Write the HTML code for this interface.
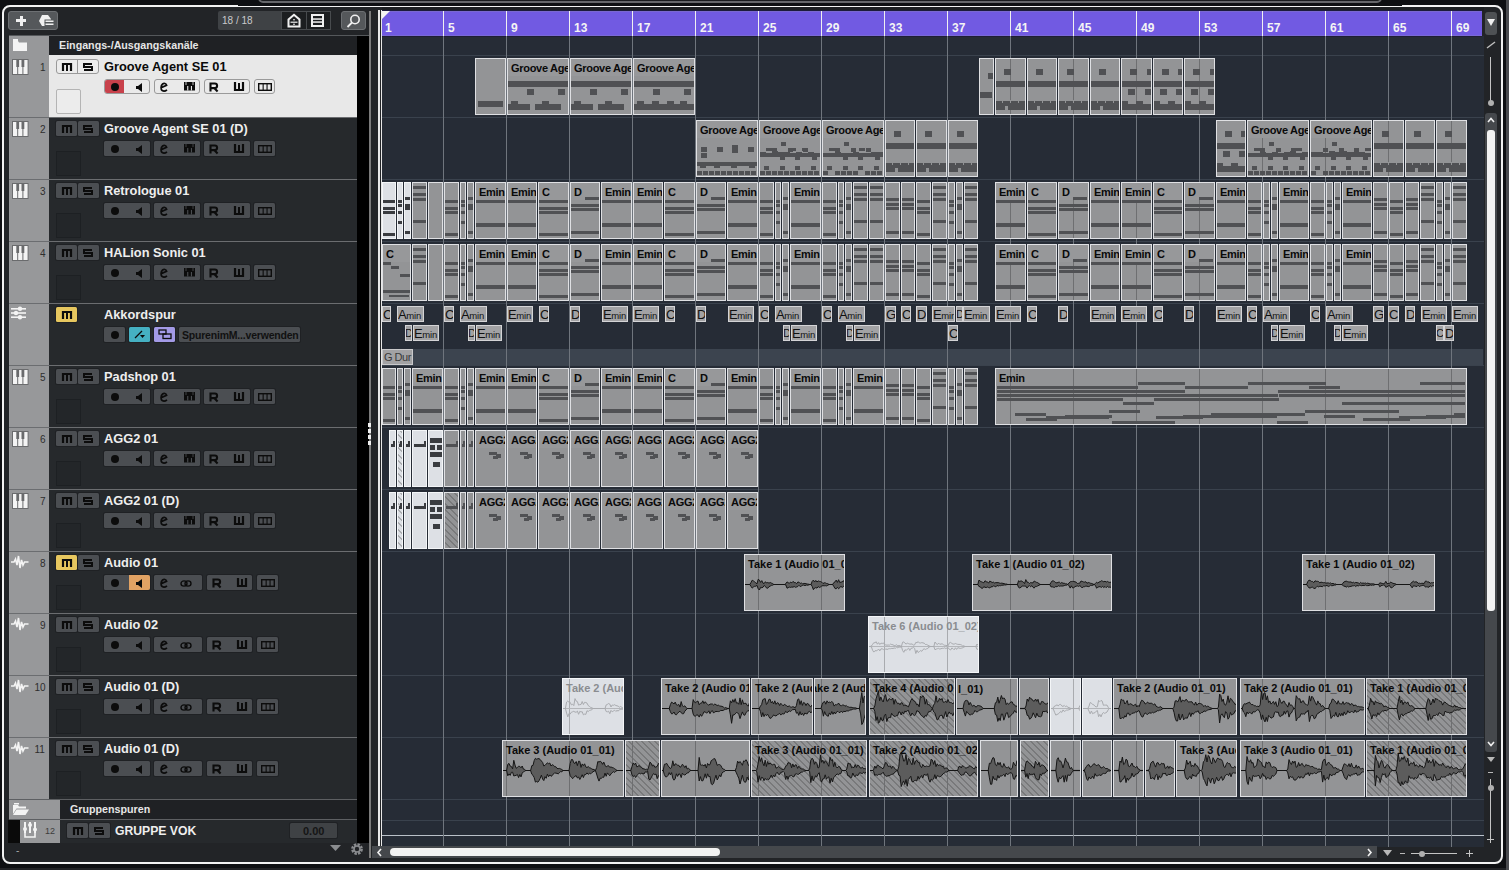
<!DOCTYPE html><html><head><meta charset="utf-8"><style>
*{margin:0;padding:0;box-sizing:border-box}
html,body{width:1509px;height:870px;overflow:hidden;background:#0e0f12;font-family:"Liberation Sans",sans-serif}
div{position:absolute}
.t{white-space:nowrap;line-height:1}
svg{position:absolute;overflow:visible}
</style></head><body>
<div style="left:258px;top:-7px;width:1124px;height:10px;border:2px solid #66676b;border-radius:7px;background:#1a1b1e"></div>
<div style="left:0px;top:867.5px;width:1509px;height:3px;background:#212225"></div>
<div style="left:2px;top:5px;width:1501px;height:859px;border:2px solid #f2f2f2;border-top-width:2px;border-radius:8px;background:#222427"></div>
<div style="left:238px;top:5px;width:1164px;height:1px;background:#0e0f12"></div>
<div style="left:1506px;top:0px;width:3px;height:870px;background:#4a4b4f"></div>
<div style="left:8px;top:11px;width:50px;height:19px;background:#55585b;border:1px solid #6d7073;border-radius:3px"></div>
<div style="left:16px;top:19px;width:10px;height:3px;background:#f0f0f0"></div>
<div style="left:19.5px;top:15.5px;width:3px;height:10px;background:#f0f0f0"></div>
<svg style="left:38px;top:14px" width="18" height="13"><path d="M4 1h6l3 4v5l-3 2H4L1 7z" fill="#f0f0f0"/><rect x="7" y="6" width="9" height="2.5" fill="#f0f0f0" stroke="#55585b" stroke-width="1"/><rect x="7" y="9" width="9" height="2.5" fill="#f0f0f0" stroke="#55585b" stroke-width="1"/></svg>
<div style="left:218px;top:11px;width:63px;height:19px;background:#3f4245;border-radius:2px 0 0 2px"></div>
<div class="t" style="left:222px;top:15.5px;font-size:10px;color:#c9cacc">18 / 18</div>
<div style="left:281px;top:11px;width:50px;height:19px;background:#1c1e20;border:1px solid #484b4e"></div>
<div style="left:305.5px;top:12px;width:1px;height:17px;background:#484b4e"></div>
<svg style="left:286px;top:13px" width="16" height="15"><path d="M2.5 13.5V6.5L8 1.8l5.5 4.7v7z" fill="none" stroke="#f0f0f0" stroke-width="2"/><rect x="7.3" y="6" width="1.4" height="1.4" fill="#f0f0f0"/><rect x="4.5" y="8.6" width="7" height="1.2" fill="#f0f0f0"/><rect x="7.3" y="10.6" width="1.4" height="1.4" fill="#f0f0f0"/></svg>
<svg style="left:311px;top:14px" width="14" height="13"><rect x="1" y="1" width="11" height="11" fill="none" stroke="#f0f0f0" stroke-width="2"/><rect x="1" y="4.3" width="11" height="1.5" fill="#f0f0f0"/><rect x="1" y="7.3" width="11" height="1.5" fill="#f0f0f0"/></svg>
<div style="left:341px;top:11px;width:25px;height:19px;background:#55585b;border:1px solid #6d7073;border-radius:3px"></div>
<svg style="left:346px;top:14px" width="15" height="14"><circle cx="9" cy="5.5" r="4.2" fill="none" stroke="#f0f0f0" stroke-width="1.6"/><path d="M6 8.5L1.5 13" stroke="#f0f0f0" stroke-width="1.8"/></svg>
<div style="left:9px;top:35px;width:40px;height:20px;background:#97989a"></div>
<div style="left:49px;top:35px;width:308px;height:20px;background:#1f2124"></div>
<div style="left:9px;top:35px;width:360px;height:1px;background:#55585b"></div>
<svg style="left:12px;top:38px" width="16" height="14"><path d="M1 3h5l1 1.5h8V13H1z" fill="#f4f4f4"/><rect x="1" y="1" width="5" height="2" fill="#f4f4f4"/></svg>
<div class="t" style="left:59px;top:40px;font-size:10.7px;font-weight:bold;color:#e6e6e6">Eingangs-/Ausgangskanäle</div>
<div style="left:9px;top:55px;width:40px;height:62px;background:#97989a"></div>
<div style="left:49px;top:55px;width:308px;height:62px;background:#e8e8e8"></div>
<svg style="left:11.5px;top:59px" width="17" height="17"><rect x="0" y="0" width="16.5" height="16" fill="#6a6b6d"/><rect x="1" y="1" width="4.2" height="14" fill="#f4f4f4"/><rect x="6.2" y="1" width="4.2" height="14" fill="#f4f4f4"/><rect x="11.4" y="1" width="4.2" height="14" fill="#f4f4f4"/><rect x="4.3" y="0" width="2.8" height="8" fill="#6a6b6d"/><rect x="9.5" y="0" width="2.8" height="8" fill="#6a6b6d"/></svg>
<div class="t" style="left:40px;top:63px;font-size:10px;color:#2e2e2e">1</div>
<div style="left:56px;top:59px;width:43px;height:15px;background:#ececec;border:1px solid #9a9a9a;border-radius:3px"></div>
<div style="left:77px;top:60px;width:1px;height:13px;background:#9a9a9a"></div>
<svg style="left:61.5px;top:62.5px" width="10" height="8"><path d="M1 8V1h8v7" fill="none" stroke="#0c0c0c" stroke-width="2.2"/><rect x="4" y="1" width="2" height="7" fill="#0c0c0c"/></svg>
<svg style="left:83px;top:62.5px" width="10" height="8"><path d="M9 1H1v3h8v3H1" fill="none" stroke="#0c0c0c" stroke-width="2"/></svg>
<div class="t" style="left:104px;top:60.5px;font-size:12.8px;font-weight:bold;color:#0a0a0a">Groove Agent SE 01</div>
<div style="left:56px;top:89px;width:25px;height:25px;border:1px solid #b4b4b4;border-radius:2px;background:#ececec"></div>
<div style="left:104px;top:79px;width:46px;height:15px;background:#eaeaea;border:1px solid #9a9a9a;border-radius:3px"></div>
<div style="left:105px;top:80px;width:19px;height:13px;background:#c8414b;border-radius:2px 0 0 2px"></div>
<div style="left:154px;top:79px;width:46px;height:15px;background:#eaeaea;border:1px solid #9a9a9a;border-radius:3px"></div>
<div style="left:204px;top:79px;width:46px;height:15px;background:#eaeaea;border:1px solid #9a9a9a;border-radius:3px"></div>
<div style="left:254px;top:79px;width:21px;height:15px;background:#eaeaea;border:1px solid #9a9a9a;border-radius:3px"></div>
<div style="left:110.5px;top:82.5px;width:8px;height:8px;background:#0c0c0c;border-radius:50%"></div>
<svg style="left:135px;top:82.5px" width="8" height="9"><path d="M1 3h2l4-3v9L3 6H1z" fill="#0c0c0c"/></svg>
<svg style="left:159px;top:81.5px" width="10" height="10"><path d="M2.2 5.6L7.6 3.2C7 1.4 5 1 3.6 2 1.6 3.6 1.6 7.4 3.2 8.6 4.6 9.4 6.6 9 8 7.8" fill="none" stroke="#0c0c0c" stroke-width="1.7"/></svg>
<svg style="left:184.0px;top:82.0px" width="11" height="9"><rect x="0" y="0" width="11" height="8.5" fill="#0c0c0c"/><rect x="3.2" y="4" width="1.1" height="4.5" fill="#eaeaea" class="g"/><rect x="6.9" y="4" width="1.1" height="4.5" fill="#eaeaea" class="g"/><rect x="1.6" y="0" width="0.8" height="3" fill="#eaeaea" class="g"/><rect x="8.6" y="0" width="0.8" height="3" fill="#eaeaea" class="g"/></svg>
<svg style="left:209.0px;top:82.0px" width="10" height="10"><path d="M1.5 9.5V1.5h4.3a2.3 2.3 0 0 1 0 4.6H1.5M5.2 6L8.6 9.5" fill="none" stroke="#0c0c0c" stroke-width="2.1"/></svg>
<svg style="left:234px;top:82.0px" width="10" height="9"><path d="M1 0v8h8V0" fill="none" stroke="#0c0c0c" stroke-width="2.2"/><rect x="4" y="1" width="2" height="7" fill="#0c0c0c"/></svg>
<svg style="left:257.5px;top:82.5px" width="14" height="8"><rect x="0.7" y="0.7" width="12.6" height="6.6" fill="none" stroke="#0c0c0c" stroke-width="1.4"/><rect x="4.6" y="1" width="1.1" height="6" fill="#0c0c0c"/><rect x="8.5" y="1" width="1.1" height="6" fill="#0c0c0c"/></svg>
<div style="left:9px;top:117px;width:40px;height:62px;background:#97989a"></div>
<div style="left:49px;top:117px;width:308px;height:62px;background:#26292c"></div>
<svg style="left:11.5px;top:121px" width="17" height="17"><rect x="0" y="0" width="16.5" height="16" fill="#6a6b6d"/><rect x="1" y="1" width="4.2" height="14" fill="#f4f4f4"/><rect x="6.2" y="1" width="4.2" height="14" fill="#f4f4f4"/><rect x="11.4" y="1" width="4.2" height="14" fill="#f4f4f4"/><rect x="4.3" y="0" width="2.8" height="8" fill="#6a6b6d"/><rect x="9.5" y="0" width="2.8" height="8" fill="#6a6b6d"/></svg>
<div class="t" style="left:40px;top:125px;font-size:10px;color:#2e2e2e">2</div>
<div style="left:56px;top:121px;width:21px;height:15px;background:#4b4e52;border-radius:1.5px;box-shadow:0 0 0 1px #1f2124;"></div>
<div style="left:77.5px;top:121px;width:21.5px;height:15px;background:#4b4e52;border-radius:1.5px;box-shadow:0 0 0 1px #1f2124;"></div>
<svg style="left:61.5px;top:124.5px" width="10" height="8"><path d="M1 8V1h8v7" fill="none" stroke="#0c0c0c" stroke-width="2.2"/><rect x="4" y="1" width="2" height="7" fill="#0c0c0c"/></svg>
<svg style="left:83px;top:124.5px" width="10" height="8"><path d="M9 1H1v3h8v3H1" fill="none" stroke="#0c0c0c" stroke-width="2"/></svg>
<div class="t" style="left:104px;top:122.5px;font-size:12.8px;font-weight:bold;color:#eeeeee">Groove Agent SE 01 (D)</div>
<div style="left:56px;top:151px;width:25px;height:25px;background:#232629;border:1px solid #1d2023"></div>
<div style="left:104px;top:141px;width:46px;height:15px;background:#4b4e52;border-radius:1.5px;box-shadow:0 0 0 1px #1f2124;"></div>
<div style="left:154px;top:141px;width:46px;height:15px;background:#4b4e52;border-radius:1.5px;box-shadow:0 0 0 1px #1f2124;"></div>
<div style="left:204px;top:141px;width:46px;height:15px;background:#4b4e52;border-radius:1.5px;box-shadow:0 0 0 1px #1f2124;"></div>
<div style="left:254px;top:141px;width:21px;height:15px;background:#4b4e52;border-radius:1.5px;box-shadow:0 0 0 1px #1f2124;"></div>
<div style="left:110.5px;top:144.5px;width:8px;height:8px;background:#0c0c0c;border-radius:50%"></div>
<svg style="left:135px;top:144.5px" width="8" height="9"><path d="M1 3h2l4-3v9L3 6H1z" fill="#0c0c0c"/></svg>
<svg style="left:159px;top:143.5px" width="10" height="10"><path d="M2.2 5.6L7.6 3.2C7 1.4 5 1 3.6 2 1.6 3.6 1.6 7.4 3.2 8.6 4.6 9.4 6.6 9 8 7.8" fill="none" stroke="#0c0c0c" stroke-width="1.7"/></svg>
<svg style="left:184.0px;top:144.0px" width="11" height="9"><rect x="0" y="0" width="11" height="8.5" fill="#0c0c0c"/><rect x="3.2" y="4" width="1.1" height="4.5" fill="#4b4e52" class="g"/><rect x="6.9" y="4" width="1.1" height="4.5" fill="#4b4e52" class="g"/><rect x="1.6" y="0" width="0.8" height="3" fill="#4b4e52" class="g"/><rect x="8.6" y="0" width="0.8" height="3" fill="#4b4e52" class="g"/></svg>
<svg style="left:209.0px;top:144.0px" width="10" height="10"><path d="M1.5 9.5V1.5h4.3a2.3 2.3 0 0 1 0 4.6H1.5M5.2 6L8.6 9.5" fill="none" stroke="#0c0c0c" stroke-width="2.1"/></svg>
<svg style="left:234px;top:144.0px" width="10" height="9"><path d="M1 0v8h8V0" fill="none" stroke="#0c0c0c" stroke-width="2.2"/><rect x="4" y="1" width="2" height="7" fill="#0c0c0c"/></svg>
<svg style="left:257.5px;top:144.5px" width="14" height="8"><rect x="0.7" y="0.7" width="12.6" height="6.6" fill="none" stroke="#0c0c0c" stroke-width="1.4"/><rect x="4.6" y="1" width="1.1" height="6" fill="#0c0c0c"/><rect x="8.5" y="1" width="1.1" height="6" fill="#0c0c0c"/></svg>
<div style="left:9px;top:179px;width:40px;height:62px;background:#97989a"></div>
<div style="left:49px;top:179px;width:308px;height:62px;background:#26292c"></div>
<svg style="left:11.5px;top:183px" width="17" height="17"><rect x="0" y="0" width="16.5" height="16" fill="#6a6b6d"/><rect x="1" y="1" width="4.2" height="14" fill="#f4f4f4"/><rect x="6.2" y="1" width="4.2" height="14" fill="#f4f4f4"/><rect x="11.4" y="1" width="4.2" height="14" fill="#f4f4f4"/><rect x="4.3" y="0" width="2.8" height="8" fill="#6a6b6d"/><rect x="9.5" y="0" width="2.8" height="8" fill="#6a6b6d"/></svg>
<div class="t" style="left:40px;top:187px;font-size:10px;color:#2e2e2e">3</div>
<div style="left:56px;top:183px;width:21px;height:15px;background:#4b4e52;border-radius:1.5px;box-shadow:0 0 0 1px #1f2124;"></div>
<div style="left:77.5px;top:183px;width:21.5px;height:15px;background:#4b4e52;border-radius:1.5px;box-shadow:0 0 0 1px #1f2124;"></div>
<svg style="left:61.5px;top:186.5px" width="10" height="8"><path d="M1 8V1h8v7" fill="none" stroke="#0c0c0c" stroke-width="2.2"/><rect x="4" y="1" width="2" height="7" fill="#0c0c0c"/></svg>
<svg style="left:83px;top:186.5px" width="10" height="8"><path d="M9 1H1v3h8v3H1" fill="none" stroke="#0c0c0c" stroke-width="2"/></svg>
<div class="t" style="left:104px;top:184.5px;font-size:12.8px;font-weight:bold;color:#eeeeee">Retrologue 01</div>
<div style="left:56px;top:213px;width:25px;height:25px;background:#232629;border:1px solid #1d2023"></div>
<div style="left:104px;top:203px;width:46px;height:15px;background:#4b4e52;border-radius:1.5px;box-shadow:0 0 0 1px #1f2124;"></div>
<div style="left:154px;top:203px;width:46px;height:15px;background:#4b4e52;border-radius:1.5px;box-shadow:0 0 0 1px #1f2124;"></div>
<div style="left:204px;top:203px;width:46px;height:15px;background:#4b4e52;border-radius:1.5px;box-shadow:0 0 0 1px #1f2124;"></div>
<div style="left:254px;top:203px;width:21px;height:15px;background:#4b4e52;border-radius:1.5px;box-shadow:0 0 0 1px #1f2124;"></div>
<div style="left:110.5px;top:206.5px;width:8px;height:8px;background:#0c0c0c;border-radius:50%"></div>
<svg style="left:135px;top:206.5px" width="8" height="9"><path d="M1 3h2l4-3v9L3 6H1z" fill="#0c0c0c"/></svg>
<svg style="left:159px;top:205.5px" width="10" height="10"><path d="M2.2 5.6L7.6 3.2C7 1.4 5 1 3.6 2 1.6 3.6 1.6 7.4 3.2 8.6 4.6 9.4 6.6 9 8 7.8" fill="none" stroke="#0c0c0c" stroke-width="1.7"/></svg>
<svg style="left:184.0px;top:206.0px" width="11" height="9"><rect x="0" y="0" width="11" height="8.5" fill="#0c0c0c"/><rect x="3.2" y="4" width="1.1" height="4.5" fill="#4b4e52" class="g"/><rect x="6.9" y="4" width="1.1" height="4.5" fill="#4b4e52" class="g"/><rect x="1.6" y="0" width="0.8" height="3" fill="#4b4e52" class="g"/><rect x="8.6" y="0" width="0.8" height="3" fill="#4b4e52" class="g"/></svg>
<svg style="left:209.0px;top:206.0px" width="10" height="10"><path d="M1.5 9.5V1.5h4.3a2.3 2.3 0 0 1 0 4.6H1.5M5.2 6L8.6 9.5" fill="none" stroke="#0c0c0c" stroke-width="2.1"/></svg>
<svg style="left:234px;top:206.0px" width="10" height="9"><path d="M1 0v8h8V0" fill="none" stroke="#0c0c0c" stroke-width="2.2"/><rect x="4" y="1" width="2" height="7" fill="#0c0c0c"/></svg>
<svg style="left:257.5px;top:206.5px" width="14" height="8"><rect x="0.7" y="0.7" width="12.6" height="6.6" fill="none" stroke="#0c0c0c" stroke-width="1.4"/><rect x="4.6" y="1" width="1.1" height="6" fill="#0c0c0c"/><rect x="8.5" y="1" width="1.1" height="6" fill="#0c0c0c"/></svg>
<div style="left:9px;top:241px;width:40px;height:62px;background:#97989a"></div>
<div style="left:49px;top:241px;width:308px;height:62px;background:#26292c"></div>
<svg style="left:11.5px;top:245px" width="17" height="17"><rect x="0" y="0" width="16.5" height="16" fill="#6a6b6d"/><rect x="1" y="1" width="4.2" height="14" fill="#f4f4f4"/><rect x="6.2" y="1" width="4.2" height="14" fill="#f4f4f4"/><rect x="11.4" y="1" width="4.2" height="14" fill="#f4f4f4"/><rect x="4.3" y="0" width="2.8" height="8" fill="#6a6b6d"/><rect x="9.5" y="0" width="2.8" height="8" fill="#6a6b6d"/></svg>
<div class="t" style="left:40px;top:249px;font-size:10px;color:#2e2e2e">4</div>
<div style="left:56px;top:245px;width:21px;height:15px;background:#4b4e52;border-radius:1.5px;box-shadow:0 0 0 1px #1f2124;"></div>
<div style="left:77.5px;top:245px;width:21.5px;height:15px;background:#4b4e52;border-radius:1.5px;box-shadow:0 0 0 1px #1f2124;"></div>
<svg style="left:61.5px;top:248.5px" width="10" height="8"><path d="M1 8V1h8v7" fill="none" stroke="#0c0c0c" stroke-width="2.2"/><rect x="4" y="1" width="2" height="7" fill="#0c0c0c"/></svg>
<svg style="left:83px;top:248.5px" width="10" height="8"><path d="M9 1H1v3h8v3H1" fill="none" stroke="#0c0c0c" stroke-width="2"/></svg>
<div class="t" style="left:104px;top:246.5px;font-size:12.8px;font-weight:bold;color:#eeeeee">HALion Sonic 01</div>
<div style="left:56px;top:275px;width:25px;height:25px;background:#232629;border:1px solid #1d2023"></div>
<div style="left:104px;top:265px;width:46px;height:15px;background:#4b4e52;border-radius:1.5px;box-shadow:0 0 0 1px #1f2124;"></div>
<div style="left:154px;top:265px;width:46px;height:15px;background:#4b4e52;border-radius:1.5px;box-shadow:0 0 0 1px #1f2124;"></div>
<div style="left:204px;top:265px;width:46px;height:15px;background:#4b4e52;border-radius:1.5px;box-shadow:0 0 0 1px #1f2124;"></div>
<div style="left:254px;top:265px;width:21px;height:15px;background:#4b4e52;border-radius:1.5px;box-shadow:0 0 0 1px #1f2124;"></div>
<div style="left:110.5px;top:268.5px;width:8px;height:8px;background:#0c0c0c;border-radius:50%"></div>
<svg style="left:135px;top:268.5px" width="8" height="9"><path d="M1 3h2l4-3v9L3 6H1z" fill="#0c0c0c"/></svg>
<svg style="left:159px;top:267.5px" width="10" height="10"><path d="M2.2 5.6L7.6 3.2C7 1.4 5 1 3.6 2 1.6 3.6 1.6 7.4 3.2 8.6 4.6 9.4 6.6 9 8 7.8" fill="none" stroke="#0c0c0c" stroke-width="1.7"/></svg>
<svg style="left:184.0px;top:268.0px" width="11" height="9"><rect x="0" y="0" width="11" height="8.5" fill="#0c0c0c"/><rect x="3.2" y="4" width="1.1" height="4.5" fill="#4b4e52" class="g"/><rect x="6.9" y="4" width="1.1" height="4.5" fill="#4b4e52" class="g"/><rect x="1.6" y="0" width="0.8" height="3" fill="#4b4e52" class="g"/><rect x="8.6" y="0" width="0.8" height="3" fill="#4b4e52" class="g"/></svg>
<svg style="left:209.0px;top:268.0px" width="10" height="10"><path d="M1.5 9.5V1.5h4.3a2.3 2.3 0 0 1 0 4.6H1.5M5.2 6L8.6 9.5" fill="none" stroke="#0c0c0c" stroke-width="2.1"/></svg>
<svg style="left:234px;top:268.0px" width="10" height="9"><path d="M1 0v8h8V0" fill="none" stroke="#0c0c0c" stroke-width="2.2"/><rect x="4" y="1" width="2" height="7" fill="#0c0c0c"/></svg>
<svg style="left:257.5px;top:268.5px" width="14" height="8"><rect x="0.7" y="0.7" width="12.6" height="6.6" fill="none" stroke="#0c0c0c" stroke-width="1.4"/><rect x="4.6" y="1" width="1.1" height="6" fill="#0c0c0c"/><rect x="8.5" y="1" width="1.1" height="6" fill="#0c0c0c"/></svg>
<div style="left:9px;top:303px;width:40px;height:62px;background:#97989a"></div>
<div style="left:49px;top:303px;width:308px;height:62px;background:#26292c"></div>
<svg style="left:11px;top:306px" width="16" height="14"><rect x="0" y="2" width="15" height="1.6" fill="#f4f4f4"/><rect x="0" y="6.2" width="15" height="1.6" fill="#f4f4f4"/><rect x="0" y="10.4" width="15" height="1.6" fill="#f4f4f4"/><circle cx="9" cy="2.8" r="2.2" fill="#f4f4f4"/><circle cx="5" cy="7" r="2.2" fill="#f4f4f4"/><circle cx="9" cy="11.2" r="2.2" fill="#f4f4f4"/></svg>
<div style="left:56px;top:307px;width:21px;height:15px;background:#e7c75f;border-radius:1.5px;box-shadow:0 0 0 1px #1f2124;"></div>
<svg style="left:61.5px;top:310.5px" width="10" height="8"><path d="M1 8V1h8v7" fill="none" stroke="#0c0c0c" stroke-width="2.2"/><rect x="4" y="1" width="2" height="7" fill="#0c0c0c"/></svg>
<div class="t" style="left:104px;top:308.5px;font-size:12.8px;font-weight:bold;color:#eeeeee">Akkordspur</div>
<div style="left:104px;top:327px;width:21px;height:15px;background:#4b4e52;border-radius:1.5px;box-shadow:0 0 0 1px #1f2124;"></div>
<div style="left:110.5px;top:330.5px;width:8px;height:8px;background:#0c0c0c;border-radius:50%"></div>
<div style="left:129px;top:327px;width:21px;height:15px;background:#45b0c2;border-radius:1.5px;box-shadow:0 0 0 1px #1f2124;"></div>
<svg style="left:134px;top:330px" width="12" height="9"><path d="M1 8L8 1" stroke="#0c0c0c" stroke-width="1.3"/><path d="M6 5h5l-2.5 3z" fill="#0c0c0c"/></svg>
<div style="left:154px;top:327px;width:21px;height:15px;background:#a39ae6;border-radius:1.5px;box-shadow:0 0 0 1px #1f2124;"></div>
<svg style="left:158px;top:329px" width="14" height="11"><rect x="1" y="1" width="7" height="4" fill="none" stroke="#0c0c0c" stroke-width="1.3"/><rect x="5" y="5" width="8" height="4.5" fill="none" stroke="#0c0c0c" stroke-width="1.3"/></svg>
<div style="left:179px;top:327px;width:121px;height:15px;background:#4b4e52;border-radius:1.5px;box-shadow:0 0 0 1px #1f2124;"></div>
<div class="t" style="left:182px;top:329.5px;font-size:10.5px;color:#111111;font-weight:bold;letter-spacing:-0.2px">SpurenimM...verwenden</div>
<div style="left:9px;top:365px;width:40px;height:62px;background:#97989a"></div>
<div style="left:49px;top:365px;width:308px;height:62px;background:#26292c"></div>
<svg style="left:11.5px;top:369px" width="17" height="17"><rect x="0" y="0" width="16.5" height="16" fill="#6a6b6d"/><rect x="1" y="1" width="4.2" height="14" fill="#f4f4f4"/><rect x="6.2" y="1" width="4.2" height="14" fill="#f4f4f4"/><rect x="11.4" y="1" width="4.2" height="14" fill="#f4f4f4"/><rect x="4.3" y="0" width="2.8" height="8" fill="#6a6b6d"/><rect x="9.5" y="0" width="2.8" height="8" fill="#6a6b6d"/></svg>
<div class="t" style="left:40px;top:373px;font-size:10px;color:#2e2e2e">5</div>
<div style="left:56px;top:369px;width:21px;height:15px;background:#4b4e52;border-radius:1.5px;box-shadow:0 0 0 1px #1f2124;"></div>
<div style="left:77.5px;top:369px;width:21.5px;height:15px;background:#4b4e52;border-radius:1.5px;box-shadow:0 0 0 1px #1f2124;"></div>
<svg style="left:61.5px;top:372.5px" width="10" height="8"><path d="M1 8V1h8v7" fill="none" stroke="#0c0c0c" stroke-width="2.2"/><rect x="4" y="1" width="2" height="7" fill="#0c0c0c"/></svg>
<svg style="left:83px;top:372.5px" width="10" height="8"><path d="M9 1H1v3h8v3H1" fill="none" stroke="#0c0c0c" stroke-width="2"/></svg>
<div class="t" style="left:104px;top:370.5px;font-size:12.8px;font-weight:bold;color:#eeeeee">Padshop 01</div>
<div style="left:56px;top:399px;width:25px;height:25px;background:#232629;border:1px solid #1d2023"></div>
<div style="left:104px;top:389px;width:46px;height:15px;background:#4b4e52;border-radius:1.5px;box-shadow:0 0 0 1px #1f2124;"></div>
<div style="left:154px;top:389px;width:46px;height:15px;background:#4b4e52;border-radius:1.5px;box-shadow:0 0 0 1px #1f2124;"></div>
<div style="left:204px;top:389px;width:46px;height:15px;background:#4b4e52;border-radius:1.5px;box-shadow:0 0 0 1px #1f2124;"></div>
<div style="left:254px;top:389px;width:21px;height:15px;background:#4b4e52;border-radius:1.5px;box-shadow:0 0 0 1px #1f2124;"></div>
<div style="left:110.5px;top:392.5px;width:8px;height:8px;background:#0c0c0c;border-radius:50%"></div>
<svg style="left:135px;top:392.5px" width="8" height="9"><path d="M1 3h2l4-3v9L3 6H1z" fill="#0c0c0c"/></svg>
<svg style="left:159px;top:391.5px" width="10" height="10"><path d="M2.2 5.6L7.6 3.2C7 1.4 5 1 3.6 2 1.6 3.6 1.6 7.4 3.2 8.6 4.6 9.4 6.6 9 8 7.8" fill="none" stroke="#0c0c0c" stroke-width="1.7"/></svg>
<svg style="left:184.0px;top:392.0px" width="11" height="9"><rect x="0" y="0" width="11" height="8.5" fill="#0c0c0c"/><rect x="3.2" y="4" width="1.1" height="4.5" fill="#4b4e52" class="g"/><rect x="6.9" y="4" width="1.1" height="4.5" fill="#4b4e52" class="g"/><rect x="1.6" y="0" width="0.8" height="3" fill="#4b4e52" class="g"/><rect x="8.6" y="0" width="0.8" height="3" fill="#4b4e52" class="g"/></svg>
<svg style="left:209.0px;top:392.0px" width="10" height="10"><path d="M1.5 9.5V1.5h4.3a2.3 2.3 0 0 1 0 4.6H1.5M5.2 6L8.6 9.5" fill="none" stroke="#0c0c0c" stroke-width="2.1"/></svg>
<svg style="left:234px;top:392.0px" width="10" height="9"><path d="M1 0v8h8V0" fill="none" stroke="#0c0c0c" stroke-width="2.2"/><rect x="4" y="1" width="2" height="7" fill="#0c0c0c"/></svg>
<svg style="left:257.5px;top:392.5px" width="14" height="8"><rect x="0.7" y="0.7" width="12.6" height="6.6" fill="none" stroke="#0c0c0c" stroke-width="1.4"/><rect x="4.6" y="1" width="1.1" height="6" fill="#0c0c0c"/><rect x="8.5" y="1" width="1.1" height="6" fill="#0c0c0c"/></svg>
<div style="left:9px;top:427px;width:40px;height:62px;background:#97989a"></div>
<div style="left:49px;top:427px;width:308px;height:62px;background:#26292c"></div>
<svg style="left:11.5px;top:431px" width="17" height="17"><rect x="0" y="0" width="16.5" height="16" fill="#6a6b6d"/><rect x="1" y="1" width="4.2" height="14" fill="#f4f4f4"/><rect x="6.2" y="1" width="4.2" height="14" fill="#f4f4f4"/><rect x="11.4" y="1" width="4.2" height="14" fill="#f4f4f4"/><rect x="4.3" y="0" width="2.8" height="8" fill="#6a6b6d"/><rect x="9.5" y="0" width="2.8" height="8" fill="#6a6b6d"/></svg>
<div class="t" style="left:40px;top:435px;font-size:10px;color:#2e2e2e">6</div>
<div style="left:56px;top:431px;width:21px;height:15px;background:#4b4e52;border-radius:1.5px;box-shadow:0 0 0 1px #1f2124;"></div>
<div style="left:77.5px;top:431px;width:21.5px;height:15px;background:#4b4e52;border-radius:1.5px;box-shadow:0 0 0 1px #1f2124;"></div>
<svg style="left:61.5px;top:434.5px" width="10" height="8"><path d="M1 8V1h8v7" fill="none" stroke="#0c0c0c" stroke-width="2.2"/><rect x="4" y="1" width="2" height="7" fill="#0c0c0c"/></svg>
<svg style="left:83px;top:434.5px" width="10" height="8"><path d="M9 1H1v3h8v3H1" fill="none" stroke="#0c0c0c" stroke-width="2"/></svg>
<div class="t" style="left:104px;top:432.5px;font-size:12.8px;font-weight:bold;color:#eeeeee">AGG2 01</div>
<div style="left:56px;top:461px;width:25px;height:25px;background:#232629;border:1px solid #1d2023"></div>
<div style="left:104px;top:451px;width:46px;height:15px;background:#4b4e52;border-radius:1.5px;box-shadow:0 0 0 1px #1f2124;"></div>
<div style="left:154px;top:451px;width:46px;height:15px;background:#4b4e52;border-radius:1.5px;box-shadow:0 0 0 1px #1f2124;"></div>
<div style="left:204px;top:451px;width:46px;height:15px;background:#4b4e52;border-radius:1.5px;box-shadow:0 0 0 1px #1f2124;"></div>
<div style="left:254px;top:451px;width:21px;height:15px;background:#4b4e52;border-radius:1.5px;box-shadow:0 0 0 1px #1f2124;"></div>
<div style="left:110.5px;top:454.5px;width:8px;height:8px;background:#0c0c0c;border-radius:50%"></div>
<svg style="left:135px;top:454.5px" width="8" height="9"><path d="M1 3h2l4-3v9L3 6H1z" fill="#0c0c0c"/></svg>
<svg style="left:159px;top:453.5px" width="10" height="10"><path d="M2.2 5.6L7.6 3.2C7 1.4 5 1 3.6 2 1.6 3.6 1.6 7.4 3.2 8.6 4.6 9.4 6.6 9 8 7.8" fill="none" stroke="#0c0c0c" stroke-width="1.7"/></svg>
<svg style="left:184.0px;top:454.0px" width="11" height="9"><rect x="0" y="0" width="11" height="8.5" fill="#0c0c0c"/><rect x="3.2" y="4" width="1.1" height="4.5" fill="#4b4e52" class="g"/><rect x="6.9" y="4" width="1.1" height="4.5" fill="#4b4e52" class="g"/><rect x="1.6" y="0" width="0.8" height="3" fill="#4b4e52" class="g"/><rect x="8.6" y="0" width="0.8" height="3" fill="#4b4e52" class="g"/></svg>
<svg style="left:209.0px;top:454.0px" width="10" height="10"><path d="M1.5 9.5V1.5h4.3a2.3 2.3 0 0 1 0 4.6H1.5M5.2 6L8.6 9.5" fill="none" stroke="#0c0c0c" stroke-width="2.1"/></svg>
<svg style="left:234px;top:454.0px" width="10" height="9"><path d="M1 0v8h8V0" fill="none" stroke="#0c0c0c" stroke-width="2.2"/><rect x="4" y="1" width="2" height="7" fill="#0c0c0c"/></svg>
<svg style="left:257.5px;top:454.5px" width="14" height="8"><rect x="0.7" y="0.7" width="12.6" height="6.6" fill="none" stroke="#0c0c0c" stroke-width="1.4"/><rect x="4.6" y="1" width="1.1" height="6" fill="#0c0c0c"/><rect x="8.5" y="1" width="1.1" height="6" fill="#0c0c0c"/></svg>
<div style="left:9px;top:489px;width:40px;height:62px;background:#97989a"></div>
<div style="left:49px;top:489px;width:308px;height:62px;background:#26292c"></div>
<svg style="left:11.5px;top:493px" width="17" height="17"><rect x="0" y="0" width="16.5" height="16" fill="#6a6b6d"/><rect x="1" y="1" width="4.2" height="14" fill="#f4f4f4"/><rect x="6.2" y="1" width="4.2" height="14" fill="#f4f4f4"/><rect x="11.4" y="1" width="4.2" height="14" fill="#f4f4f4"/><rect x="4.3" y="0" width="2.8" height="8" fill="#6a6b6d"/><rect x="9.5" y="0" width="2.8" height="8" fill="#6a6b6d"/></svg>
<div class="t" style="left:40px;top:497px;font-size:10px;color:#2e2e2e">7</div>
<div style="left:56px;top:493px;width:21px;height:15px;background:#4b4e52;border-radius:1.5px;box-shadow:0 0 0 1px #1f2124;"></div>
<div style="left:77.5px;top:493px;width:21.5px;height:15px;background:#4b4e52;border-radius:1.5px;box-shadow:0 0 0 1px #1f2124;"></div>
<svg style="left:61.5px;top:496.5px" width="10" height="8"><path d="M1 8V1h8v7" fill="none" stroke="#0c0c0c" stroke-width="2.2"/><rect x="4" y="1" width="2" height="7" fill="#0c0c0c"/></svg>
<svg style="left:83px;top:496.5px" width="10" height="8"><path d="M9 1H1v3h8v3H1" fill="none" stroke="#0c0c0c" stroke-width="2"/></svg>
<div class="t" style="left:104px;top:494.5px;font-size:12.8px;font-weight:bold;color:#eeeeee">AGG2 01 (D)</div>
<div style="left:56px;top:523px;width:25px;height:25px;background:#232629;border:1px solid #1d2023"></div>
<div style="left:104px;top:513px;width:46px;height:15px;background:#4b4e52;border-radius:1.5px;box-shadow:0 0 0 1px #1f2124;"></div>
<div style="left:154px;top:513px;width:46px;height:15px;background:#4b4e52;border-radius:1.5px;box-shadow:0 0 0 1px #1f2124;"></div>
<div style="left:204px;top:513px;width:46px;height:15px;background:#4b4e52;border-radius:1.5px;box-shadow:0 0 0 1px #1f2124;"></div>
<div style="left:254px;top:513px;width:21px;height:15px;background:#4b4e52;border-radius:1.5px;box-shadow:0 0 0 1px #1f2124;"></div>
<div style="left:110.5px;top:516.5px;width:8px;height:8px;background:#0c0c0c;border-radius:50%"></div>
<svg style="left:135px;top:516.5px" width="8" height="9"><path d="M1 3h2l4-3v9L3 6H1z" fill="#0c0c0c"/></svg>
<svg style="left:159px;top:515.5px" width="10" height="10"><path d="M2.2 5.6L7.6 3.2C7 1.4 5 1 3.6 2 1.6 3.6 1.6 7.4 3.2 8.6 4.6 9.4 6.6 9 8 7.8" fill="none" stroke="#0c0c0c" stroke-width="1.7"/></svg>
<svg style="left:184.0px;top:516.0px" width="11" height="9"><rect x="0" y="0" width="11" height="8.5" fill="#0c0c0c"/><rect x="3.2" y="4" width="1.1" height="4.5" fill="#4b4e52" class="g"/><rect x="6.9" y="4" width="1.1" height="4.5" fill="#4b4e52" class="g"/><rect x="1.6" y="0" width="0.8" height="3" fill="#4b4e52" class="g"/><rect x="8.6" y="0" width="0.8" height="3" fill="#4b4e52" class="g"/></svg>
<svg style="left:209.0px;top:516.0px" width="10" height="10"><path d="M1.5 9.5V1.5h4.3a2.3 2.3 0 0 1 0 4.6H1.5M5.2 6L8.6 9.5" fill="none" stroke="#0c0c0c" stroke-width="2.1"/></svg>
<svg style="left:234px;top:516.0px" width="10" height="9"><path d="M1 0v8h8V0" fill="none" stroke="#0c0c0c" stroke-width="2.2"/><rect x="4" y="1" width="2" height="7" fill="#0c0c0c"/></svg>
<svg style="left:257.5px;top:516.5px" width="14" height="8"><rect x="0.7" y="0.7" width="12.6" height="6.6" fill="none" stroke="#0c0c0c" stroke-width="1.4"/><rect x="4.6" y="1" width="1.1" height="6" fill="#0c0c0c"/><rect x="8.5" y="1" width="1.1" height="6" fill="#0c0c0c"/></svg>
<div style="left:9px;top:551px;width:40px;height:62px;background:#97989a"></div>
<div style="left:49px;top:551px;width:308px;height:62px;background:#26292c"></div>
<svg style="left:11px;top:555px" width="18" height="14"><path d="M0 7h3l1.5-3 1.5 6 1.5-9 1.5 12 1.5-8 1.5 5 1.5-3h4" fill="none" stroke="#f4f4f4" stroke-width="1.6"/></svg>
<div class="t" style="left:40px;top:559px;font-size:10px;color:#2e2e2e">8</div>
<div style="left:56px;top:555px;width:21px;height:15px;background:#e7c75f;border-radius:1.5px;box-shadow:0 0 0 1px #1f2124;"></div>
<div style="left:77.5px;top:555px;width:21.5px;height:15px;background:#4b4e52;border-radius:1.5px;box-shadow:0 0 0 1px #1f2124;"></div>
<svg style="left:61.5px;top:558.5px" width="10" height="8"><path d="M1 8V1h8v7" fill="none" stroke="#0c0c0c" stroke-width="2.2"/><rect x="4" y="1" width="2" height="7" fill="#0c0c0c"/></svg>
<svg style="left:83px;top:558.5px" width="10" height="8"><path d="M9 1H1v3h8v3H1" fill="none" stroke="#0c0c0c" stroke-width="2"/></svg>
<div class="t" style="left:104px;top:556.5px;font-size:12.8px;font-weight:bold;color:#eeeeee">Audio 01</div>
<div style="left:56px;top:585px;width:25px;height:25px;background:#232629;border:1px solid #1d2023"></div>
<div style="left:104px;top:575px;width:46px;height:15px;background:#4b4e52;border-radius:1.5px;box-shadow:0 0 0 1px #1f2124;"></div>
<div style="left:129px;top:575px;width:21px;height:15px;background:#e1a263;border-radius:0 2px 2px 0"></div>
<div style="left:154px;top:575px;width:48px;height:15px;background:#4b4e52;border-radius:1.5px;box-shadow:0 0 0 1px #1f2124;"></div>
<div style="left:207px;top:575px;width:45px;height:15px;background:#4b4e52;border-radius:1.5px;box-shadow:0 0 0 1px #1f2124;"></div>
<div style="left:257px;top:575px;width:21px;height:15px;background:#4b4e52;border-radius:1.5px;box-shadow:0 0 0 1px #1f2124;"></div>
<div style="left:110.5px;top:578.5px;width:8px;height:8px;background:#0c0c0c;border-radius:50%"></div>
<svg style="left:135px;top:578.5px" width="8" height="9"><path d="M1 3h2l4-3v9L3 6H1z" fill="#0c0c0c"/></svg>
<svg style="left:159px;top:577.5px" width="10" height="10"><path d="M2.2 5.6L7.6 3.2C7 1.4 5 1 3.6 2 1.6 3.6 1.6 7.4 3.2 8.6 4.6 9.4 6.6 9 8 7.8" fill="none" stroke="#0c0c0c" stroke-width="1.7"/></svg>
<svg style="left:180px;top:579.5px" width="12" height="7"><ellipse cx="4" cy="3.5" rx="3" ry="2.6" fill="none" stroke="#0c0c0c" stroke-width="1.4"/><ellipse cx="8" cy="3.5" rx="3" ry="2.6" fill="none" stroke="#0c0c0c" stroke-width="1.4"/></svg>
<svg style="left:212.0px;top:578.0px" width="10" height="10"><path d="M1.5 9.5V1.5h4.3a2.3 2.3 0 0 1 0 4.6H1.5M5.2 6L8.6 9.5" fill="none" stroke="#0c0c0c" stroke-width="2.1"/></svg>
<svg style="left:237px;top:578.0px" width="10" height="9"><path d="M1 0v8h8V0" fill="none" stroke="#0c0c0c" stroke-width="2.2"/><rect x="4" y="1" width="2" height="7" fill="#0c0c0c"/></svg>
<svg style="left:260.5px;top:578.5px" width="14" height="8"><rect x="0.7" y="0.7" width="12.6" height="6.6" fill="none" stroke="#0c0c0c" stroke-width="1.4"/><rect x="4.6" y="1" width="1.1" height="6" fill="#0c0c0c"/><rect x="8.5" y="1" width="1.1" height="6" fill="#0c0c0c"/></svg>
<div style="left:9px;top:613px;width:40px;height:62px;background:#97989a"></div>
<div style="left:49px;top:613px;width:308px;height:62px;background:#26292c"></div>
<svg style="left:11px;top:617px" width="18" height="14"><path d="M0 7h3l1.5-3 1.5 6 1.5-9 1.5 12 1.5-8 1.5 5 1.5-3h4" fill="none" stroke="#f4f4f4" stroke-width="1.6"/></svg>
<div class="t" style="left:40px;top:621px;font-size:10px;color:#2e2e2e">9</div>
<div style="left:56px;top:617px;width:21px;height:15px;background:#4b4e52;border-radius:1.5px;box-shadow:0 0 0 1px #1f2124;"></div>
<div style="left:77.5px;top:617px;width:21.5px;height:15px;background:#4b4e52;border-radius:1.5px;box-shadow:0 0 0 1px #1f2124;"></div>
<svg style="left:61.5px;top:620.5px" width="10" height="8"><path d="M1 8V1h8v7" fill="none" stroke="#0c0c0c" stroke-width="2.2"/><rect x="4" y="1" width="2" height="7" fill="#0c0c0c"/></svg>
<svg style="left:83px;top:620.5px" width="10" height="8"><path d="M9 1H1v3h8v3H1" fill="none" stroke="#0c0c0c" stroke-width="2"/></svg>
<div class="t" style="left:104px;top:618.5px;font-size:12.8px;font-weight:bold;color:#eeeeee">Audio 02</div>
<div style="left:56px;top:647px;width:25px;height:25px;background:#232629;border:1px solid #1d2023"></div>
<div style="left:104px;top:637px;width:46px;height:15px;background:#4b4e52;border-radius:1.5px;box-shadow:0 0 0 1px #1f2124;"></div>
<div style="left:154px;top:637px;width:48px;height:15px;background:#4b4e52;border-radius:1.5px;box-shadow:0 0 0 1px #1f2124;"></div>
<div style="left:207px;top:637px;width:45px;height:15px;background:#4b4e52;border-radius:1.5px;box-shadow:0 0 0 1px #1f2124;"></div>
<div style="left:257px;top:637px;width:21px;height:15px;background:#4b4e52;border-radius:1.5px;box-shadow:0 0 0 1px #1f2124;"></div>
<div style="left:110.5px;top:640.5px;width:8px;height:8px;background:#0c0c0c;border-radius:50%"></div>
<svg style="left:135px;top:640.5px" width="8" height="9"><path d="M1 3h2l4-3v9L3 6H1z" fill="#0c0c0c"/></svg>
<svg style="left:159px;top:639.5px" width="10" height="10"><path d="M2.2 5.6L7.6 3.2C7 1.4 5 1 3.6 2 1.6 3.6 1.6 7.4 3.2 8.6 4.6 9.4 6.6 9 8 7.8" fill="none" stroke="#0c0c0c" stroke-width="1.7"/></svg>
<svg style="left:180px;top:641.5px" width="12" height="7"><ellipse cx="4" cy="3.5" rx="3" ry="2.6" fill="none" stroke="#0c0c0c" stroke-width="1.4"/><ellipse cx="8" cy="3.5" rx="3" ry="2.6" fill="none" stroke="#0c0c0c" stroke-width="1.4"/></svg>
<svg style="left:212.0px;top:640.0px" width="10" height="10"><path d="M1.5 9.5V1.5h4.3a2.3 2.3 0 0 1 0 4.6H1.5M5.2 6L8.6 9.5" fill="none" stroke="#0c0c0c" stroke-width="2.1"/></svg>
<svg style="left:237px;top:640.0px" width="10" height="9"><path d="M1 0v8h8V0" fill="none" stroke="#0c0c0c" stroke-width="2.2"/><rect x="4" y="1" width="2" height="7" fill="#0c0c0c"/></svg>
<svg style="left:260.5px;top:640.5px" width="14" height="8"><rect x="0.7" y="0.7" width="12.6" height="6.6" fill="none" stroke="#0c0c0c" stroke-width="1.4"/><rect x="4.6" y="1" width="1.1" height="6" fill="#0c0c0c"/><rect x="8.5" y="1" width="1.1" height="6" fill="#0c0c0c"/></svg>
<div style="left:9px;top:675px;width:40px;height:62px;background:#97989a"></div>
<div style="left:49px;top:675px;width:308px;height:62px;background:#26292c"></div>
<svg style="left:11px;top:679px" width="18" height="14"><path d="M0 7h3l1.5-3 1.5 6 1.5-9 1.5 12 1.5-8 1.5 5 1.5-3h4" fill="none" stroke="#f4f4f4" stroke-width="1.6"/></svg>
<div class="t" style="left:34.5px;top:683px;font-size:10px;color:#2e2e2e">10</div>
<div style="left:56px;top:679px;width:21px;height:15px;background:#4b4e52;border-radius:1.5px;box-shadow:0 0 0 1px #1f2124;"></div>
<div style="left:77.5px;top:679px;width:21.5px;height:15px;background:#4b4e52;border-radius:1.5px;box-shadow:0 0 0 1px #1f2124;"></div>
<svg style="left:61.5px;top:682.5px" width="10" height="8"><path d="M1 8V1h8v7" fill="none" stroke="#0c0c0c" stroke-width="2.2"/><rect x="4" y="1" width="2" height="7" fill="#0c0c0c"/></svg>
<svg style="left:83px;top:682.5px" width="10" height="8"><path d="M9 1H1v3h8v3H1" fill="none" stroke="#0c0c0c" stroke-width="2"/></svg>
<div class="t" style="left:104px;top:680.5px;font-size:12.8px;font-weight:bold;color:#eeeeee">Audio 01 (D)</div>
<div style="left:56px;top:709px;width:25px;height:25px;background:#232629;border:1px solid #1d2023"></div>
<div style="left:104px;top:699px;width:46px;height:15px;background:#4b4e52;border-radius:1.5px;box-shadow:0 0 0 1px #1f2124;"></div>
<div style="left:154px;top:699px;width:48px;height:15px;background:#4b4e52;border-radius:1.5px;box-shadow:0 0 0 1px #1f2124;"></div>
<div style="left:207px;top:699px;width:45px;height:15px;background:#4b4e52;border-radius:1.5px;box-shadow:0 0 0 1px #1f2124;"></div>
<div style="left:257px;top:699px;width:21px;height:15px;background:#4b4e52;border-radius:1.5px;box-shadow:0 0 0 1px #1f2124;"></div>
<div style="left:110.5px;top:702.5px;width:8px;height:8px;background:#0c0c0c;border-radius:50%"></div>
<svg style="left:135px;top:702.5px" width="8" height="9"><path d="M1 3h2l4-3v9L3 6H1z" fill="#0c0c0c"/></svg>
<svg style="left:159px;top:701.5px" width="10" height="10"><path d="M2.2 5.6L7.6 3.2C7 1.4 5 1 3.6 2 1.6 3.6 1.6 7.4 3.2 8.6 4.6 9.4 6.6 9 8 7.8" fill="none" stroke="#0c0c0c" stroke-width="1.7"/></svg>
<svg style="left:180px;top:703.5px" width="12" height="7"><ellipse cx="4" cy="3.5" rx="3" ry="2.6" fill="none" stroke="#0c0c0c" stroke-width="1.4"/><ellipse cx="8" cy="3.5" rx="3" ry="2.6" fill="none" stroke="#0c0c0c" stroke-width="1.4"/></svg>
<svg style="left:212.0px;top:702.0px" width="10" height="10"><path d="M1.5 9.5V1.5h4.3a2.3 2.3 0 0 1 0 4.6H1.5M5.2 6L8.6 9.5" fill="none" stroke="#0c0c0c" stroke-width="2.1"/></svg>
<svg style="left:237px;top:702.0px" width="10" height="9"><path d="M1 0v8h8V0" fill="none" stroke="#0c0c0c" stroke-width="2.2"/><rect x="4" y="1" width="2" height="7" fill="#0c0c0c"/></svg>
<svg style="left:260.5px;top:702.5px" width="14" height="8"><rect x="0.7" y="0.7" width="12.6" height="6.6" fill="none" stroke="#0c0c0c" stroke-width="1.4"/><rect x="4.6" y="1" width="1.1" height="6" fill="#0c0c0c"/><rect x="8.5" y="1" width="1.1" height="6" fill="#0c0c0c"/></svg>
<div style="left:9px;top:737px;width:40px;height:62px;background:#97989a"></div>
<div style="left:49px;top:737px;width:308px;height:62px;background:#26292c"></div>
<svg style="left:11px;top:741px" width="18" height="14"><path d="M0 7h3l1.5-3 1.5 6 1.5-9 1.5 12 1.5-8 1.5 5 1.5-3h4" fill="none" stroke="#f4f4f4" stroke-width="1.6"/></svg>
<div class="t" style="left:34.5px;top:745px;font-size:10px;color:#2e2e2e">11</div>
<div style="left:56px;top:741px;width:21px;height:15px;background:#4b4e52;border-radius:1.5px;box-shadow:0 0 0 1px #1f2124;"></div>
<div style="left:77.5px;top:741px;width:21.5px;height:15px;background:#4b4e52;border-radius:1.5px;box-shadow:0 0 0 1px #1f2124;"></div>
<svg style="left:61.5px;top:744.5px" width="10" height="8"><path d="M1 8V1h8v7" fill="none" stroke="#0c0c0c" stroke-width="2.2"/><rect x="4" y="1" width="2" height="7" fill="#0c0c0c"/></svg>
<svg style="left:83px;top:744.5px" width="10" height="8"><path d="M9 1H1v3h8v3H1" fill="none" stroke="#0c0c0c" stroke-width="2"/></svg>
<div class="t" style="left:104px;top:742.5px;font-size:12.8px;font-weight:bold;color:#eeeeee">Audio 01 (D)</div>
<div style="left:56px;top:771px;width:25px;height:25px;background:#232629;border:1px solid #1d2023"></div>
<div style="left:104px;top:761px;width:46px;height:15px;background:#4b4e52;border-radius:1.5px;box-shadow:0 0 0 1px #1f2124;"></div>
<div style="left:154px;top:761px;width:48px;height:15px;background:#4b4e52;border-radius:1.5px;box-shadow:0 0 0 1px #1f2124;"></div>
<div style="left:207px;top:761px;width:45px;height:15px;background:#4b4e52;border-radius:1.5px;box-shadow:0 0 0 1px #1f2124;"></div>
<div style="left:257px;top:761px;width:21px;height:15px;background:#4b4e52;border-radius:1.5px;box-shadow:0 0 0 1px #1f2124;"></div>
<div style="left:110.5px;top:764.5px;width:8px;height:8px;background:#0c0c0c;border-radius:50%"></div>
<svg style="left:135px;top:764.5px" width="8" height="9"><path d="M1 3h2l4-3v9L3 6H1z" fill="#0c0c0c"/></svg>
<svg style="left:159px;top:763.5px" width="10" height="10"><path d="M2.2 5.6L7.6 3.2C7 1.4 5 1 3.6 2 1.6 3.6 1.6 7.4 3.2 8.6 4.6 9.4 6.6 9 8 7.8" fill="none" stroke="#0c0c0c" stroke-width="1.7"/></svg>
<svg style="left:180px;top:765.5px" width="12" height="7"><ellipse cx="4" cy="3.5" rx="3" ry="2.6" fill="none" stroke="#0c0c0c" stroke-width="1.4"/><ellipse cx="8" cy="3.5" rx="3" ry="2.6" fill="none" stroke="#0c0c0c" stroke-width="1.4"/></svg>
<svg style="left:212.0px;top:764.0px" width="10" height="10"><path d="M1.5 9.5V1.5h4.3a2.3 2.3 0 0 1 0 4.6H1.5M5.2 6L8.6 9.5" fill="none" stroke="#0c0c0c" stroke-width="2.1"/></svg>
<svg style="left:237px;top:764.0px" width="10" height="9"><path d="M1 0v8h8V0" fill="none" stroke="#0c0c0c" stroke-width="2.2"/><rect x="4" y="1" width="2" height="7" fill="#0c0c0c"/></svg>
<svg style="left:260.5px;top:764.5px" width="14" height="8"><rect x="0.7" y="0.7" width="12.6" height="6.6" fill="none" stroke="#0c0c0c" stroke-width="1.4"/><rect x="4.6" y="1" width="1.1" height="6" fill="#0c0c0c"/><rect x="8.5" y="1" width="1.1" height="6" fill="#0c0c0c"/></svg>
<div style="left:9px;top:117px;width:348px;height:1px;background:#6b6d70"></div>
<div style="left:357px;top:117px;width:12px;height:1px;background:#2a2a2a"></div>
<div style="left:9px;top:179px;width:348px;height:1px;background:#6b6d70"></div>
<div style="left:357px;top:179px;width:12px;height:1px;background:#2a2a2a"></div>
<div style="left:9px;top:241px;width:348px;height:1px;background:#6b6d70"></div>
<div style="left:357px;top:241px;width:12px;height:1px;background:#2a2a2a"></div>
<div style="left:9px;top:303px;width:348px;height:1px;background:#6b6d70"></div>
<div style="left:357px;top:303px;width:12px;height:1px;background:#2a2a2a"></div>
<div style="left:9px;top:365px;width:348px;height:1px;background:#6b6d70"></div>
<div style="left:357px;top:365px;width:12px;height:1px;background:#2a2a2a"></div>
<div style="left:9px;top:427px;width:348px;height:1px;background:#6b6d70"></div>
<div style="left:357px;top:427px;width:12px;height:1px;background:#2a2a2a"></div>
<div style="left:9px;top:489px;width:348px;height:1px;background:#6b6d70"></div>
<div style="left:357px;top:489px;width:12px;height:1px;background:#2a2a2a"></div>
<div style="left:9px;top:551px;width:348px;height:1px;background:#6b6d70"></div>
<div style="left:357px;top:551px;width:12px;height:1px;background:#2a2a2a"></div>
<div style="left:9px;top:613px;width:348px;height:1px;background:#6b6d70"></div>
<div style="left:357px;top:613px;width:12px;height:1px;background:#2a2a2a"></div>
<div style="left:9px;top:675px;width:348px;height:1px;background:#6b6d70"></div>
<div style="left:357px;top:675px;width:12px;height:1px;background:#2a2a2a"></div>
<div style="left:9px;top:737px;width:348px;height:1px;background:#6b6d70"></div>
<div style="left:357px;top:737px;width:12px;height:1px;background:#2a2a2a"></div>
<div style="left:9px;top:799px;width:348px;height:1px;background:#6b6d70"></div>
<div style="left:357px;top:799px;width:12px;height:1px;background:#2a2a2a"></div>
<div style="left:9px;top:799px;width:51px;height:20.5px;background:#97989a"></div>
<div style="left:60px;top:799px;width:297px;height:20.5px;background:#1f2124"></div>
<svg style="left:12px;top:802px" width="18" height="14"><path d="M1 3h5l1 1.5h7v2H4.5L1 12z" fill="#f4f4f4"/><path d="M4.5 7.5H17L13.5 13H1z" fill="#f4f4f4"/><rect x="2" y="1" width="5" height="1.5" fill="#f4f4f4"/></svg>
<div class="t" style="left:70px;top:804px;font-size:10.7px;font-weight:bold;color:#e6e6e6">Gruppenspuren</div>
<div style="left:8px;top:820px;width:12px;height:23px;background:#0a0a0a"></div>
<div style="left:20px;top:820px;width:40px;height:23px;background:#97989a"></div>
<div style="left:60px;top:820px;width:297px;height:23px;background:#26292c"></div>
<svg style="left:22px;top:822px" width="16" height="16"><path d="M3 0v11M8 0v11M13 0v11" stroke="#f4f4f4" stroke-width="2"/><circle cx="3" cy="7" r="2" fill="#f4f4f4"/><circle cx="8" cy="3" r="2" fill="#f4f4f4"/><circle cx="13" cy="7.5" r="2" fill="#f4f4f4"/><path d="M3 11v4h10v-4" fill="none" stroke="#f4f4f4" stroke-width="1.6"/></svg>
<div class="t" style="left:45px;top:827px;font-size:9px;color:#3c3c3c">12</div>
<div style="left:67px;top:823px;width:21px;height:15px;background:#4b4e52;border-radius:1.5px;box-shadow:0 0 0 1px #1f2124;"></div>
<div style="left:88.5px;top:823px;width:21.5px;height:15px;background:#4b4e52;border-radius:1.5px;box-shadow:0 0 0 1px #1f2124;"></div>
<svg style="left:72.5px;top:826.5px" width="10" height="8"><path d="M1 8V1h8v7" fill="none" stroke="#0c0c0c" stroke-width="2.2"/><rect x="4" y="1" width="2" height="7" fill="#0c0c0c"/></svg>
<svg style="left:94px;top:826.5px" width="10" height="8"><path d="M9 1H1v3h8v3H1" fill="none" stroke="#0c0c0c" stroke-width="2"/></svg>
<div class="t" style="left:115px;top:825px;font-size:12.2px;font-weight:bold;color:#eeeeee">GRUPPE VOK</div>
<div style="left:9px;top:799px;width:348px;height:1px;background:#5d5f62"></div>
<div style="left:9px;top:819px;width:348px;height:1px;background:#5d5f62"></div>
<div style="left:290px;top:823px;width:47px;height:15px;background:#3f4245;border-radius:1.5px;box-shadow:0 0 0 1px #1f2124;"></div>
<div class="t" style="left:303px;top:826px;font-size:11px;font-weight:bold;color:#151515">0.00</div>
<div class="t" style="left:16px;top:846px;font-size:10px;color:#aaaaaa">-</div>
<svg style="left:330px;top:845px" width="11" height="7"><path d="M0 0h11L5.5 6z" fill="#8a8c8f"/></svg>
<svg style="left:350px;top:842px" width="14" height="14"><circle cx="7" cy="7" r="4.6" fill="none" stroke="#8a8c8f" stroke-width="2.6" stroke-dasharray="2.4 1.2"/><circle cx="7" cy="7" r="3" fill="none" stroke="#8a8c8f" stroke-width="1.6"/></svg>
<div style="left:357px;top:36px;width:12px;height:807px;background:#000"></div>
<div style="left:369px;top:11px;width:2px;height:847px;background:#7b7b7b"></div>
<div style="left:368px;top:423px;width:3px;height:4px;background:#f0f0f0"></div>
<div style="left:368px;top:429px;width:3px;height:4px;background:#f0f0f0"></div>
<div style="left:368px;top:435px;width:3px;height:4px;background:#f0f0f0"></div>
<div style="left:368px;top:441px;width:3px;height:4px;background:#f0f0f0"></div>
<div style="left:378px;top:10px;width:1.5px;height:837px;background:#e8e8e8"></div>
<div style="left:381px;top:10px;width:1px;height:837px;background:#e8e8e8"></div>
<div style="left:382px;top:7px;width:1102px;height:3.5px;background:#1d1f22"></div>
<div style="left:382px;top:35.5px;width:1102px;height:811.5px;background:#262c36"></div>
<div style="left:382px;top:10px;width:1100px;height:1px;background:#1d1b3c"></div>
<div style="left:382px;top:11px;width:1100px;height:25px;background:#715ae2;box-shadow:inset 0 1px 0 #7a68d2,inset 0 -1px 0 #7a6ad6"></div>
<div style="left:382px;top:36px;width:1100px;height:1px;background:#1f1e36"></div>
<svg style="left:382px;top:11px" width="9" height="9"><path d="M0 0h8L0 8z" fill="#f4f4f4"/></svg>
<div class="t" style="left:385px;top:21.5px;font-size:12px;font-weight:bold;color:#f4f4f4">1</div>
<div style="left:443px;top:10.5px;width:1px;height:25px;background:#f0f0f0"></div>
<div class="t" style="left:448px;top:21.5px;font-size:12px;font-weight:bold;color:#f4f4f4">5</div>
<div style="left:506px;top:10.5px;width:1px;height:25px;background:#f0f0f0"></div>
<div class="t" style="left:511px;top:21.5px;font-size:12px;font-weight:bold;color:#f4f4f4">9</div>
<div style="left:569px;top:10.5px;width:1px;height:25px;background:#f0f0f0"></div>
<div class="t" style="left:574px;top:21.5px;font-size:12px;font-weight:bold;color:#f4f4f4">13</div>
<div style="left:632px;top:10.5px;width:1px;height:25px;background:#f0f0f0"></div>
<div class="t" style="left:637px;top:21.5px;font-size:12px;font-weight:bold;color:#f4f4f4">17</div>
<div style="left:695px;top:10.5px;width:1px;height:25px;background:#f0f0f0"></div>
<div class="t" style="left:700px;top:21.5px;font-size:12px;font-weight:bold;color:#f4f4f4">21</div>
<div style="left:758px;top:10.5px;width:1px;height:25px;background:#f0f0f0"></div>
<div class="t" style="left:763px;top:21.5px;font-size:12px;font-weight:bold;color:#f4f4f4">25</div>
<div style="left:821px;top:10.5px;width:1px;height:25px;background:#f0f0f0"></div>
<div class="t" style="left:826px;top:21.5px;font-size:12px;font-weight:bold;color:#f4f4f4">29</div>
<div style="left:884px;top:10.5px;width:1px;height:25px;background:#f0f0f0"></div>
<div class="t" style="left:889px;top:21.5px;font-size:12px;font-weight:bold;color:#f4f4f4">33</div>
<div style="left:947px;top:10.5px;width:1px;height:25px;background:#f0f0f0"></div>
<div class="t" style="left:952px;top:21.5px;font-size:12px;font-weight:bold;color:#f4f4f4">37</div>
<div style="left:1010px;top:10.5px;width:1px;height:25px;background:#f0f0f0"></div>
<div class="t" style="left:1015px;top:21.5px;font-size:12px;font-weight:bold;color:#f4f4f4">41</div>
<div style="left:1073px;top:10.5px;width:1px;height:25px;background:#f0f0f0"></div>
<div class="t" style="left:1078px;top:21.5px;font-size:12px;font-weight:bold;color:#f4f4f4">45</div>
<div style="left:1136px;top:10.5px;width:1px;height:25px;background:#f0f0f0"></div>
<div class="t" style="left:1141px;top:21.5px;font-size:12px;font-weight:bold;color:#f4f4f4">49</div>
<div style="left:1199px;top:10.5px;width:1px;height:25px;background:#f0f0f0"></div>
<div class="t" style="left:1204px;top:21.5px;font-size:12px;font-weight:bold;color:#f4f4f4">53</div>
<div style="left:1262px;top:10.5px;width:1px;height:25px;background:#f0f0f0"></div>
<div class="t" style="left:1267px;top:21.5px;font-size:12px;font-weight:bold;color:#f4f4f4">57</div>
<div style="left:1325px;top:10.5px;width:1px;height:25px;background:#f0f0f0"></div>
<div class="t" style="left:1330px;top:21.5px;font-size:12px;font-weight:bold;color:#f4f4f4">61</div>
<div style="left:1388px;top:10.5px;width:1px;height:25px;background:#f0f0f0"></div>
<div class="t" style="left:1393px;top:21.5px;font-size:12px;font-weight:bold;color:#f4f4f4">65</div>
<div style="left:1451px;top:10.5px;width:1px;height:25px;background:#f0f0f0"></div>
<div class="t" style="left:1456px;top:21.5px;font-size:12px;font-weight:bold;color:#f4f4f4">69</div>
<div style="left:382px;top:349px;width:1101px;height:17px;background:#3c444f"></div>
<div style="left:382px;top:55px;width:1102px;height:1px;background:#3a424d"></div>
<div style="left:382px;top:117px;width:1102px;height:1px;background:#3a424d"></div>
<div style="left:382px;top:179px;width:1102px;height:1px;background:#3a424d"></div>
<div style="left:382px;top:241px;width:1102px;height:1px;background:#3a424d"></div>
<div style="left:382px;top:303px;width:1102px;height:1px;background:#3a424d"></div>
<div style="left:382px;top:365px;width:1102px;height:1px;background:#3a424d"></div>
<div style="left:382px;top:427px;width:1102px;height:1px;background:#3a424d"></div>
<div style="left:382px;top:489px;width:1102px;height:1px;background:#3a424d"></div>
<div style="left:382px;top:551px;width:1102px;height:1px;background:#3a424d"></div>
<div style="left:382px;top:613px;width:1102px;height:1px;background:#3a424d"></div>
<div style="left:382px;top:675px;width:1102px;height:1px;background:#3a424d"></div>
<div style="left:382px;top:737px;width:1102px;height:1px;background:#3a424d"></div>
<div style="left:382px;top:799px;width:1102px;height:1px;background:#3a424d"></div>
<div style="left:382px;top:819.5px;width:1102px;height:1px;background:#3a424d"></div>
<div style="left:382px;top:835px;width:1103px;height:1.3px;background:#b9c0c8"></div>
<div style="left:443px;top:35.5px;width:1px;height:811px;background:#6f757d"></div>
<div style="left:506px;top:35.5px;width:1px;height:811px;background:#6f757d"></div>
<div style="left:569px;top:35.5px;width:1px;height:811px;background:#6f757d"></div>
<div style="left:632px;top:35.5px;width:1px;height:811px;background:#6f757d"></div>
<div style="left:695px;top:35.5px;width:1px;height:811px;background:#6f757d"></div>
<div style="left:758px;top:35.5px;width:1px;height:811px;background:#6f757d"></div>
<div style="left:821px;top:35.5px;width:1px;height:811px;background:#6f757d"></div>
<div style="left:884px;top:35.5px;width:1px;height:811px;background:#6f757d"></div>
<div style="left:947px;top:35.5px;width:1px;height:811px;background:#6f757d"></div>
<div style="left:1010px;top:35.5px;width:1px;height:811px;background:#6f757d"></div>
<div style="left:1073px;top:35.5px;width:1px;height:811px;background:#6f757d"></div>
<div style="left:1136px;top:35.5px;width:1px;height:811px;background:#6f757d"></div>
<div style="left:1199px;top:35.5px;width:1px;height:811px;background:#6f757d"></div>
<div style="left:1262px;top:35.5px;width:1px;height:811px;background:#6f757d"></div>
<div style="left:1325px;top:35.5px;width:1px;height:811px;background:#6f757d"></div>
<div style="left:1388px;top:35.5px;width:1px;height:811px;background:#6f757d"></div>
<div style="left:1451px;top:35.5px;width:1px;height:811px;background:#6f757d"></div>
<div style="left:382px;top:182px;width:14px;height:57px;background:#dde0e5;border:1px solid #f4f6f8;overflow:hidden"><div style="left:0px;top:17px;width:13px;height:3px;background:#3a3c40"></div><div style="left:0px;top:24px;width:13px;height:3px;background:#3a3c40"></div><div style="left:0px;top:28px;width:13px;height:3px;background:#3a3c40"></div><div style="left:0px;top:50px;width:13px;height:3px;background:#3a3c40"></div></div>
<div style="left:397px;top:182px;width:6px;height:57px;background:#dde0e5;border:1px solid #f4f6f8;overflow:hidden"><div style="left:0px;top:17px;width:4px;height:2.5px;background:#3a3c40"></div><div style="left:0px;top:21px;width:4px;height:2.5px;background:#3a3c40"></div><div style="left:0px;top:28px;width:4px;height:2.5px;background:#3a3c40"></div><div style="left:0px;top:38px;width:4px;height:2.5px;background:#3a3c40"></div></div>
<div style="left:404px;top:182px;width:7px;height:57px;background:#dde0e5;border:1px solid #f4f6f8;overflow:hidden"><div style="left:0px;top:14px;width:5px;height:2.5px;background:#3a3c40"></div><div style="left:0px;top:21px;width:5px;height:2.5px;background:#3a3c40"></div><div style="left:0px;top:24px;width:5px;height:2.5px;background:#3a3c40"></div><div style="left:0px;top:48px;width:5px;height:2.5px;background:#3a3c40"></div></div>
<div style="left:412px;top:182px;width:15px;height:57px;background:#939496;border:1px solid #dfe0e3;overflow:hidden"><div style="left:0px;top:3px;width:13px;height:3px;background:#505154"></div><div style="left:0px;top:10px;width:13px;height:3px;background:#505154"></div><div style="left:0px;top:15px;width:13px;height:3px;background:#505154"></div><div style="left:0px;top:37px;width:13px;height:3px;background:#505154"></div></div>
<div style="left:428px;top:182px;width:15px;height:57px;background:#939496;border:1px solid #dfe0e3;overflow:hidden"></div>
<div style="left:444px;top:182px;width:15px;height:57px;background:#939496;border:1px solid #dfe0e3;overflow:hidden"><div style="left:0px;top:17px;width:13px;height:2.5px;background:#505154"></div><div style="left:0px;top:24px;width:13px;height:2.5px;background:#505154"></div><div style="left:0px;top:28px;width:13px;height:2.5px;background:#505154"></div><div style="left:0px;top:50px;width:13px;height:2.5px;background:#505154"></div></div>
<div style="left:460px;top:182px;width:6px;height:57px;background:#939496;border:1px solid #dfe0e3;overflow:hidden"><div style="left:0px;top:17px;width:4px;height:2.5px;background:#505154"></div><div style="left:0px;top:21px;width:4px;height:2.5px;background:#505154"></div><div style="left:0px;top:28px;width:4px;height:2.5px;background:#505154"></div><div style="left:0px;top:38px;width:4px;height:2.5px;background:#505154"></div></div>
<div style="left:467px;top:182px;width:7px;height:57px;background:#939496;border:1px solid #dfe0e3;overflow:hidden"><div style="left:0px;top:14px;width:5px;height:2.5px;background:#505154"></div><div style="left:0px;top:21px;width:5px;height:2.5px;background:#505154"></div><div style="left:0px;top:24px;width:5px;height:2.5px;background:#505154"></div><div style="left:0px;top:48px;width:5px;height:2.5px;background:#505154"></div></div>
<div style="left:475px;top:182px;width:31px;height:57px;background:#939496;border:1px solid #dfe0e3;overflow:hidden"><div style="left:0;top:0;width:29px;height:17px;background:rgba(255,255,255,.045)"></div><div style="left:0px;top:17px;width:29px;height:3px;background:#505154"></div><div style="left:0px;top:40px;width:29px;height:3.5px;background:#505154"></div><div class="t" style="left:3px;top:4px;font-size:11px;font-weight:bold;letter-spacing:-0.3px;color:#0a0a0a">Emin</div></div>
<div style="left:507px;top:182px;width:30px;height:57px;background:#939496;border:1px solid #dfe0e3;overflow:hidden"><div style="left:0;top:0;width:28px;height:17px;background:rgba(255,255,255,.045)"></div><div style="left:0px;top:17px;width:28px;height:3px;background:#505154"></div><div style="left:0px;top:40px;width:28px;height:3.5px;background:#505154"></div><div class="t" style="left:3px;top:4px;font-size:11px;font-weight:bold;letter-spacing:-0.3px;color:#0a0a0a">Emin</div></div>
<div style="left:538px;top:182px;width:31px;height:57px;background:#939496;border:1px solid #dfe0e3;overflow:hidden"><div style="left:0;top:0;width:29px;height:17px;background:rgba(255,255,255,.045)"></div><div style="left:0px;top:17px;width:29px;height:3px;background:#505154"></div><div style="left:0px;top:24px;width:29px;height:3px;background:#505154"></div><div style="left:0px;top:28px;width:29px;height:3px;background:#505154"></div><div style="left:0px;top:50px;width:29px;height:3px;background:#505154"></div><div class="t" style="left:3px;top:4px;font-size:11px;font-weight:bold;letter-spacing:-0.3px;color:#0a0a0a">C</div></div>
<div style="left:570px;top:182px;width:30px;height:57px;background:#939496;border:1px solid #dfe0e3;overflow:hidden"><div style="left:0;top:0;width:28px;height:17px;background:rgba(255,255,255,.045)"></div><div style="left:14px;top:14px;width:14px;height:3px;background:#505154"></div><div style="left:0px;top:21px;width:28px;height:3px;background:#505154"></div><div style="left:0px;top:25px;width:28px;height:3px;background:#505154"></div><div style="left:0px;top:48px;width:28px;height:3px;background:#505154"></div><div class="t" style="left:3px;top:4px;font-size:11px;font-weight:bold;letter-spacing:-0.3px;color:#0a0a0a">D</div></div>
<div style="left:601px;top:182px;width:31px;height:57px;background:#939496;border:1px solid #dfe0e3;overflow:hidden"><div style="left:0;top:0;width:29px;height:17px;background:rgba(255,255,255,.045)"></div><div style="left:0px;top:17px;width:29px;height:3px;background:#505154"></div><div style="left:0px;top:40px;width:29px;height:3.5px;background:#505154"></div><div class="t" style="left:3px;top:4px;font-size:11px;font-weight:bold;letter-spacing:-0.3px;color:#0a0a0a">Emin</div></div>
<div style="left:633px;top:182px;width:30px;height:57px;background:#939496;border:1px solid #dfe0e3;overflow:hidden"><div style="left:0;top:0;width:28px;height:17px;background:rgba(255,255,255,.045)"></div><div style="left:0px;top:17px;width:28px;height:3px;background:#505154"></div><div style="left:0px;top:40px;width:28px;height:3.5px;background:#505154"></div><div class="t" style="left:3px;top:4px;font-size:11px;font-weight:bold;letter-spacing:-0.3px;color:#0a0a0a">Emin</div></div>
<div style="left:664px;top:182px;width:31px;height:57px;background:#939496;border:1px solid #dfe0e3;overflow:hidden"><div style="left:0;top:0;width:29px;height:17px;background:rgba(255,255,255,.045)"></div><div style="left:0px;top:17px;width:29px;height:3px;background:#505154"></div><div style="left:0px;top:24px;width:29px;height:3px;background:#505154"></div><div style="left:0px;top:28px;width:29px;height:3px;background:#505154"></div><div style="left:0px;top:50px;width:29px;height:3px;background:#505154"></div><div class="t" style="left:3px;top:4px;font-size:11px;font-weight:bold;letter-spacing:-0.3px;color:#0a0a0a">C</div></div>
<div style="left:696px;top:182px;width:30px;height:57px;background:#939496;border:1px solid #dfe0e3;overflow:hidden"><div style="left:0;top:0;width:28px;height:17px;background:rgba(255,255,255,.045)"></div><div style="left:14px;top:14px;width:14px;height:3px;background:#505154"></div><div style="left:0px;top:21px;width:28px;height:3px;background:#505154"></div><div style="left:0px;top:25px;width:28px;height:3px;background:#505154"></div><div style="left:0px;top:48px;width:28px;height:3px;background:#505154"></div><div class="t" style="left:3px;top:4px;font-size:11px;font-weight:bold;letter-spacing:-0.3px;color:#0a0a0a">D</div></div>
<div style="left:727px;top:182px;width:31px;height:57px;background:#939496;border:1px solid #dfe0e3;overflow:hidden"><div style="left:0;top:0;width:29px;height:17px;background:rgba(255,255,255,.045)"></div><div style="left:0px;top:17px;width:29px;height:3px;background:#505154"></div><div style="left:0px;top:40px;width:29px;height:3.5px;background:#505154"></div><div class="t" style="left:3px;top:4px;font-size:11px;font-weight:bold;letter-spacing:-0.3px;color:#0a0a0a">Emin</div></div>
<div style="left:759px;top:182px;width:15px;height:57px;background:#939496;border:1px solid #dfe0e3;overflow:hidden"><div style="left:0px;top:17px;width:13px;height:2.5px;background:#505154"></div><div style="left:0px;top:24px;width:13px;height:2.5px;background:#505154"></div><div style="left:0px;top:28px;width:13px;height:2.5px;background:#505154"></div><div style="left:0px;top:50px;width:13px;height:2.5px;background:#505154"></div></div>
<div style="left:775px;top:182px;width:6px;height:57px;background:#939496;border:1px solid #dfe0e3;overflow:hidden"><div style="left:0px;top:17px;width:4px;height:2.5px;background:#505154"></div><div style="left:0px;top:21px;width:4px;height:2.5px;background:#505154"></div><div style="left:0px;top:28px;width:4px;height:2.5px;background:#505154"></div><div style="left:0px;top:38px;width:4px;height:2.5px;background:#505154"></div></div>
<div style="left:782px;top:182px;width:7px;height:57px;background:#939496;border:1px solid #dfe0e3;overflow:hidden"><div style="left:0px;top:14px;width:5px;height:2.5px;background:#505154"></div><div style="left:0px;top:21px;width:5px;height:2.5px;background:#505154"></div><div style="left:0px;top:24px;width:5px;height:2.5px;background:#505154"></div><div style="left:0px;top:48px;width:5px;height:2.5px;background:#505154"></div></div>
<div style="left:790px;top:182px;width:31px;height:57px;background:#939496;border:1px solid #dfe0e3;overflow:hidden"><div style="left:0;top:0;width:29px;height:17px;background:rgba(255,255,255,.045)"></div><div style="left:0px;top:17px;width:29px;height:3px;background:#505154"></div><div style="left:0px;top:40px;width:29px;height:3.5px;background:#505154"></div><div class="t" style="left:3px;top:4px;font-size:11px;font-weight:bold;letter-spacing:-0.3px;color:#0a0a0a">Emin</div></div>
<div style="left:822px;top:182px;width:15px;height:57px;background:#939496;border:1px solid #dfe0e3;overflow:hidden"><div style="left:0px;top:17px;width:13px;height:2.5px;background:#505154"></div><div style="left:0px;top:24px;width:13px;height:2.5px;background:#505154"></div><div style="left:0px;top:28px;width:13px;height:2.5px;background:#505154"></div><div style="left:0px;top:50px;width:13px;height:2.5px;background:#505154"></div></div>
<div style="left:838px;top:182px;width:6px;height:57px;background:#939496;border:1px solid #dfe0e3;overflow:hidden"><div style="left:0px;top:17px;width:4px;height:2.5px;background:#505154"></div><div style="left:0px;top:21px;width:4px;height:2.5px;background:#505154"></div><div style="left:0px;top:28px;width:4px;height:2.5px;background:#505154"></div><div style="left:0px;top:38px;width:4px;height:2.5px;background:#505154"></div></div>
<div style="left:845px;top:182px;width:7px;height:57px;background:#939496;border:1px solid #dfe0e3;overflow:hidden"><div style="left:0px;top:14px;width:5px;height:2.5px;background:#505154"></div><div style="left:0px;top:21px;width:5px;height:2.5px;background:#505154"></div><div style="left:0px;top:24px;width:5px;height:2.5px;background:#505154"></div><div style="left:0px;top:48px;width:5px;height:2.5px;background:#505154"></div></div>
<div style="left:853px;top:182px;width:15px;height:57px;background:#939496;border:1px solid #dfe0e3;overflow:hidden"><div style="left:0px;top:3px;width:13px;height:3px;background:#505154"></div><div style="left:0px;top:10px;width:13px;height:3px;background:#505154"></div><div style="left:0px;top:15px;width:13px;height:3px;background:#505154"></div><div style="left:0px;top:37px;width:13px;height:3px;background:#505154"></div></div>
<div style="left:869px;top:182px;width:15px;height:57px;background:#939496;border:1px solid #dfe0e3;overflow:hidden"><div style="left:0px;top:3px;width:13px;height:3px;background:#505154"></div><div style="left:0px;top:10px;width:13px;height:3px;background:#505154"></div><div style="left:0px;top:15px;width:13px;height:3px;background:#505154"></div><div style="left:0px;top:37px;width:13px;height:3px;background:#505154"></div></div>
<div style="left:885px;top:182px;width:15px;height:57px;background:#939496;border:1px solid #dfe0e3;overflow:hidden"><div style="left:0px;top:15px;width:13px;height:3px;background:#505154"></div><div style="left:0px;top:20px;width:13px;height:3px;background:#505154"></div><div style="left:0px;top:24px;width:13px;height:3px;background:#505154"></div><div style="left:0px;top:48px;width:13px;height:3px;background:#505154"></div></div>
<div style="left:901px;top:182px;width:14px;height:57px;background:#939496;border:1px solid #dfe0e3;overflow:hidden"><div style="left:0px;top:15px;width:12px;height:3px;background:#505154"></div><div style="left:0px;top:20px;width:12px;height:3px;background:#505154"></div><div style="left:0px;top:24px;width:12px;height:3px;background:#505154"></div><div style="left:0px;top:48px;width:12px;height:3px;background:#505154"></div></div>
<div style="left:916px;top:182px;width:15px;height:57px;background:#939496;border:1px solid #dfe0e3;overflow:hidden"><div style="left:0px;top:17px;width:13px;height:2.5px;background:#505154"></div><div style="left:0px;top:24px;width:13px;height:2.5px;background:#505154"></div><div style="left:0px;top:28px;width:13px;height:2.5px;background:#505154"></div><div style="left:0px;top:50px;width:13px;height:2.5px;background:#505154"></div></div>
<div style="left:932px;top:182px;width:15px;height:57px;background:#939496;border:1px solid #dfe0e3;overflow:hidden"><div style="left:0px;top:3px;width:13px;height:3px;background:#505154"></div><div style="left:0px;top:10px;width:13px;height:3px;background:#505154"></div><div style="left:0px;top:15px;width:13px;height:3px;background:#505154"></div><div style="left:0px;top:37px;width:13px;height:3px;background:#505154"></div></div>
<div style="left:948px;top:182px;width:7px;height:57px;background:#939496;border:1px solid #dfe0e3;overflow:hidden"><div style="left:0px;top:17px;width:5px;height:2.5px;background:#505154"></div><div style="left:0px;top:21px;width:5px;height:2.5px;background:#505154"></div><div style="left:0px;top:28px;width:5px;height:2.5px;background:#505154"></div><div style="left:0px;top:38px;width:5px;height:2.5px;background:#505154"></div></div>
<div style="left:956px;top:182px;width:7px;height:57px;background:#939496;border:1px solid #dfe0e3;overflow:hidden"><div style="left:0px;top:14px;width:5px;height:2.5px;background:#505154"></div><div style="left:0px;top:21px;width:5px;height:2.5px;background:#505154"></div><div style="left:0px;top:24px;width:5px;height:2.5px;background:#505154"></div><div style="left:0px;top:48px;width:5px;height:2.5px;background:#505154"></div></div>
<div style="left:964px;top:182px;width:14px;height:57px;background:#939496;border:1px solid #dfe0e3;overflow:hidden"><div style="left:0px;top:3px;width:12px;height:3px;background:#505154"></div><div style="left:0px;top:10px;width:12px;height:3px;background:#505154"></div><div style="left:0px;top:15px;width:12px;height:3px;background:#505154"></div><div style="left:0px;top:37px;width:12px;height:3px;background:#505154"></div></div>
<div style="left:995px;top:182px;width:31px;height:57px;background:#939496;border:1px solid #dfe0e3;overflow:hidden"><div style="left:0;top:0;width:29px;height:17px;background:rgba(255,255,255,.045)"></div><div style="left:14px;top:17px;width:1px;height:40px;background:#6e6f71"></div><div style="left:0px;top:17px;width:29px;height:3px;background:#505154"></div><div style="left:0px;top:40px;width:29px;height:3.5px;background:#505154"></div><div class="t" style="left:3px;top:4px;font-size:11px;font-weight:bold;letter-spacing:-0.3px;color:#0a0a0a">Emin</div></div>
<div style="left:1027px;top:182px;width:30px;height:57px;background:#939496;border:1px solid #dfe0e3;overflow:hidden"><div style="left:0;top:0;width:28px;height:17px;background:rgba(255,255,255,.045)"></div><div style="left:0px;top:17px;width:28px;height:3px;background:#505154"></div><div style="left:0px;top:24px;width:28px;height:3px;background:#505154"></div><div style="left:0px;top:28px;width:28px;height:3px;background:#505154"></div><div style="left:0px;top:50px;width:28px;height:3px;background:#505154"></div><div class="t" style="left:3px;top:4px;font-size:11px;font-weight:bold;letter-spacing:-0.3px;color:#0a0a0a">C</div></div>
<div style="left:1058px;top:182px;width:31px;height:57px;background:#939496;border:1px solid #dfe0e3;overflow:hidden"><div style="left:0;top:0;width:29px;height:17px;background:rgba(255,255,255,.045)"></div><div style="left:14px;top:17px;width:1px;height:40px;background:#6e6f71"></div><div style="left:14px;top:14px;width:14px;height:3px;background:#505154"></div><div style="left:0px;top:21px;width:29px;height:3px;background:#505154"></div><div style="left:0px;top:25px;width:29px;height:3px;background:#505154"></div><div style="left:0px;top:48px;width:29px;height:3px;background:#505154"></div><div class="t" style="left:3px;top:4px;font-size:11px;font-weight:bold;letter-spacing:-0.3px;color:#0a0a0a">D</div></div>
<div style="left:1090px;top:182px;width:30px;height:57px;background:#939496;border:1px solid #dfe0e3;overflow:hidden"><div style="left:0;top:0;width:28px;height:17px;background:rgba(255,255,255,.045)"></div><div style="left:0px;top:17px;width:28px;height:3px;background:#505154"></div><div style="left:0px;top:40px;width:28px;height:3.5px;background:#505154"></div><div class="t" style="left:3px;top:4px;font-size:11px;font-weight:bold;letter-spacing:-0.3px;color:#0a0a0a">Emin</div></div>
<div style="left:1121px;top:182px;width:31px;height:57px;background:#939496;border:1px solid #dfe0e3;overflow:hidden"><div style="left:0;top:0;width:29px;height:17px;background:rgba(255,255,255,.045)"></div><div style="left:14px;top:17px;width:1px;height:40px;background:#6e6f71"></div><div style="left:0px;top:17px;width:29px;height:3px;background:#505154"></div><div style="left:0px;top:40px;width:29px;height:3.5px;background:#505154"></div><div class="t" style="left:3px;top:4px;font-size:11px;font-weight:bold;letter-spacing:-0.3px;color:#0a0a0a">Emin</div></div>
<div style="left:1153px;top:182px;width:30px;height:57px;background:#939496;border:1px solid #dfe0e3;overflow:hidden"><div style="left:0;top:0;width:28px;height:17px;background:rgba(255,255,255,.045)"></div><div style="left:0px;top:17px;width:28px;height:3px;background:#505154"></div><div style="left:0px;top:24px;width:28px;height:3px;background:#505154"></div><div style="left:0px;top:28px;width:28px;height:3px;background:#505154"></div><div style="left:0px;top:50px;width:28px;height:3px;background:#505154"></div><div class="t" style="left:3px;top:4px;font-size:11px;font-weight:bold;letter-spacing:-0.3px;color:#0a0a0a">C</div></div>
<div style="left:1184px;top:182px;width:31px;height:57px;background:#939496;border:1px solid #dfe0e3;overflow:hidden"><div style="left:0;top:0;width:29px;height:17px;background:rgba(255,255,255,.045)"></div><div style="left:14px;top:17px;width:1px;height:40px;background:#6e6f71"></div><div style="left:14px;top:14px;width:14px;height:3px;background:#505154"></div><div style="left:0px;top:21px;width:29px;height:3px;background:#505154"></div><div style="left:0px;top:25px;width:29px;height:3px;background:#505154"></div><div style="left:0px;top:48px;width:29px;height:3px;background:#505154"></div><div class="t" style="left:3px;top:4px;font-size:11px;font-weight:bold;letter-spacing:-0.3px;color:#0a0a0a">D</div></div>
<div style="left:1216px;top:182px;width:30px;height:57px;background:#939496;border:1px solid #dfe0e3;overflow:hidden"><div style="left:0;top:0;width:28px;height:17px;background:rgba(255,255,255,.045)"></div><div style="left:0px;top:17px;width:28px;height:3px;background:#505154"></div><div style="left:0px;top:40px;width:28px;height:3.5px;background:#505154"></div><div class="t" style="left:3px;top:4px;font-size:11px;font-weight:bold;letter-spacing:-0.3px;color:#0a0a0a">Emin</div></div>
<div style="left:1247px;top:182px;width:15px;height:57px;background:#939496;border:1px solid #dfe0e3;overflow:hidden"><div style="left:0px;top:17px;width:13px;height:2.5px;background:#505154"></div><div style="left:0px;top:24px;width:13px;height:2.5px;background:#505154"></div><div style="left:0px;top:28px;width:13px;height:2.5px;background:#505154"></div><div style="left:0px;top:50px;width:13px;height:2.5px;background:#505154"></div></div>
<div style="left:1263px;top:182px;width:7px;height:57px;background:#939496;border:1px solid #dfe0e3;overflow:hidden"><div style="left:0px;top:17px;width:5px;height:2.5px;background:#505154"></div><div style="left:0px;top:21px;width:5px;height:2.5px;background:#505154"></div><div style="left:0px;top:28px;width:5px;height:2.5px;background:#505154"></div><div style="left:0px;top:38px;width:5px;height:2.5px;background:#505154"></div></div>
<div style="left:1271px;top:182px;width:7px;height:57px;background:#939496;border:1px solid #dfe0e3;overflow:hidden"><div style="left:0px;top:14px;width:5px;height:2.5px;background:#505154"></div><div style="left:0px;top:21px;width:5px;height:2.5px;background:#505154"></div><div style="left:0px;top:24px;width:5px;height:2.5px;background:#505154"></div><div style="left:0px;top:48px;width:5px;height:2.5px;background:#505154"></div></div>
<div style="left:1279px;top:182px;width:30px;height:57px;background:#939496;border:1px solid #dfe0e3;overflow:hidden"><div style="left:0;top:0;width:28px;height:17px;background:rgba(255,255,255,.045)"></div><div style="left:0px;top:17px;width:28px;height:3px;background:#505154"></div><div style="left:0px;top:40px;width:28px;height:3.5px;background:#505154"></div><div class="t" style="left:3px;top:4px;font-size:11px;font-weight:bold;letter-spacing:-0.3px;color:#0a0a0a">Emin</div></div>
<div style="left:1310px;top:182px;width:15px;height:57px;background:#939496;border:1px solid #dfe0e3;overflow:hidden"><div style="left:0px;top:17px;width:13px;height:2.5px;background:#505154"></div><div style="left:0px;top:24px;width:13px;height:2.5px;background:#505154"></div><div style="left:0px;top:28px;width:13px;height:2.5px;background:#505154"></div><div style="left:0px;top:50px;width:13px;height:2.5px;background:#505154"></div></div>
<div style="left:1326px;top:182px;width:7px;height:57px;background:#939496;border:1px solid #dfe0e3;overflow:hidden"><div style="left:0px;top:17px;width:5px;height:2.5px;background:#505154"></div><div style="left:0px;top:21px;width:5px;height:2.5px;background:#505154"></div><div style="left:0px;top:28px;width:5px;height:2.5px;background:#505154"></div><div style="left:0px;top:38px;width:5px;height:2.5px;background:#505154"></div></div>
<div style="left:1334px;top:182px;width:7px;height:57px;background:#939496;border:1px solid #dfe0e3;overflow:hidden"><div style="left:0px;top:14px;width:5px;height:2.5px;background:#505154"></div><div style="left:0px;top:21px;width:5px;height:2.5px;background:#505154"></div><div style="left:0px;top:24px;width:5px;height:2.5px;background:#505154"></div><div style="left:0px;top:48px;width:5px;height:2.5px;background:#505154"></div></div>
<div style="left:1342px;top:182px;width:30px;height:57px;background:#939496;border:1px solid #dfe0e3;overflow:hidden"><div style="left:0;top:0;width:28px;height:17px;background:rgba(255,255,255,.045)"></div><div style="left:0px;top:17px;width:28px;height:3px;background:#505154"></div><div style="left:0px;top:40px;width:28px;height:3.5px;background:#505154"></div><div class="t" style="left:3px;top:4px;font-size:11px;font-weight:bold;letter-spacing:-0.3px;color:#0a0a0a">Emin</div></div>
<div style="left:1373px;top:182px;width:15px;height:57px;background:#939496;border:1px solid #dfe0e3;overflow:hidden"><div style="left:0px;top:15px;width:13px;height:3px;background:#505154"></div><div style="left:0px;top:20px;width:13px;height:3px;background:#505154"></div><div style="left:0px;top:24px;width:13px;height:3px;background:#505154"></div><div style="left:0px;top:48px;width:13px;height:3px;background:#505154"></div></div>
<div style="left:1389px;top:182px;width:15px;height:57px;background:#939496;border:1px solid #dfe0e3;overflow:hidden"><div style="left:0px;top:17px;width:13px;height:2.5px;background:#505154"></div><div style="left:0px;top:24px;width:13px;height:2.5px;background:#505154"></div><div style="left:0px;top:28px;width:13px;height:2.5px;background:#505154"></div><div style="left:0px;top:50px;width:13px;height:2.5px;background:#505154"></div></div>
<div style="left:1405px;top:182px;width:14px;height:57px;background:#939496;border:1px solid #dfe0e3;overflow:hidden"><div style="left:0px;top:15px;width:12px;height:3px;background:#505154"></div><div style="left:0px;top:20px;width:12px;height:3px;background:#505154"></div><div style="left:0px;top:24px;width:12px;height:3px;background:#505154"></div><div style="left:0px;top:48px;width:12px;height:3px;background:#505154"></div></div>
<div style="left:1420px;top:182px;width:15px;height:57px;background:#939496;border:1px solid #dfe0e3;overflow:hidden"><div style="left:0px;top:3px;width:13px;height:3px;background:#505154"></div><div style="left:0px;top:10px;width:13px;height:3px;background:#505154"></div><div style="left:0px;top:15px;width:13px;height:3px;background:#505154"></div><div style="left:0px;top:37px;width:13px;height:3px;background:#505154"></div></div>
<div style="left:1436px;top:182px;width:7px;height:57px;background:#939496;border:1px solid #dfe0e3;overflow:hidden"><div style="left:0px;top:17px;width:5px;height:2.5px;background:#505154"></div><div style="left:0px;top:21px;width:5px;height:2.5px;background:#505154"></div><div style="left:0px;top:28px;width:5px;height:2.5px;background:#505154"></div><div style="left:0px;top:38px;width:5px;height:2.5px;background:#505154"></div></div>
<div style="left:1444px;top:182px;width:7px;height:57px;background:#939496;border:1px solid #dfe0e3;overflow:hidden"><div style="left:0px;top:14px;width:5px;height:2.5px;background:#505154"></div><div style="left:0px;top:21px;width:5px;height:2.5px;background:#505154"></div><div style="left:0px;top:24px;width:5px;height:2.5px;background:#505154"></div><div style="left:0px;top:48px;width:5px;height:2.5px;background:#505154"></div></div>
<div style="left:1452px;top:182px;width:15px;height:57px;background:#939496;border:1px solid #dfe0e3;overflow:hidden"><div style="left:0px;top:3px;width:13px;height:3px;background:#505154"></div><div style="left:0px;top:10px;width:13px;height:3px;background:#505154"></div><div style="left:0px;top:15px;width:13px;height:3px;background:#505154"></div><div style="left:0px;top:37px;width:13px;height:3px;background:#505154"></div></div>
<div style="left:382px;top:244px;width:29px;height:57px;background:#939496;border:1px solid #dfe0e3;overflow:hidden"><div style="left:0;top:0;width:27px;height:17px;background:rgba(255,255,255,.045)"></div><div style="left:0px;top:17px;width:8px;height:3px;background:#505154"></div><div style="left:8px;top:21px;width:8px;height:3px;background:#505154"></div><div style="left:17px;top:29px;width:11px;height:3px;background:#505154"></div><div style="left:0px;top:45px;width:28px;height:3px;background:#505154"></div><div style="left:6px;top:50px;width:20px;height:2px;background:#505154"></div><div class="t" style="left:3px;top:4px;font-size:11px;font-weight:bold;letter-spacing:-0.3px;color:#0a0a0a">C</div></div>
<div style="left:412px;top:244px;width:15px;height:57px;background:#939496;border:1px solid #dfe0e3;overflow:hidden"><div style="left:0px;top:3px;width:13px;height:3px;background:#505154"></div><div style="left:0px;top:10px;width:13px;height:3px;background:#505154"></div><div style="left:0px;top:15px;width:13px;height:3px;background:#505154"></div><div style="left:0px;top:37px;width:13px;height:3px;background:#505154"></div></div>
<div style="left:428px;top:244px;width:15px;height:57px;background:#939496;border:1px solid #dfe0e3;overflow:hidden"></div>
<div style="left:444px;top:244px;width:15px;height:57px;background:#939496;border:1px solid #dfe0e3;overflow:hidden"><div style="left:0px;top:17px;width:13px;height:2.5px;background:#505154"></div><div style="left:0px;top:24px;width:13px;height:2.5px;background:#505154"></div><div style="left:0px;top:28px;width:13px;height:2.5px;background:#505154"></div><div style="left:0px;top:50px;width:13px;height:2.5px;background:#505154"></div></div>
<div style="left:460px;top:244px;width:6px;height:57px;background:#939496;border:1px solid #dfe0e3;overflow:hidden"><div style="left:0px;top:17px;width:4px;height:2.5px;background:#505154"></div><div style="left:0px;top:21px;width:4px;height:2.5px;background:#505154"></div><div style="left:0px;top:28px;width:4px;height:2.5px;background:#505154"></div><div style="left:0px;top:38px;width:4px;height:2.5px;background:#505154"></div></div>
<div style="left:467px;top:244px;width:7px;height:57px;background:#939496;border:1px solid #dfe0e3;overflow:hidden"><div style="left:0px;top:14px;width:5px;height:2.5px;background:#505154"></div><div style="left:0px;top:21px;width:5px;height:2.5px;background:#505154"></div><div style="left:0px;top:24px;width:5px;height:2.5px;background:#505154"></div><div style="left:0px;top:48px;width:5px;height:2.5px;background:#505154"></div></div>
<div style="left:475px;top:244px;width:31px;height:57px;background:#939496;border:1px solid #dfe0e3;overflow:hidden"><div style="left:0;top:0;width:29px;height:17px;background:rgba(255,255,255,.045)"></div><div style="left:0px;top:17px;width:29px;height:3px;background:#505154"></div><div style="left:0px;top:40px;width:29px;height:3.5px;background:#505154"></div><div class="t" style="left:3px;top:4px;font-size:11px;font-weight:bold;letter-spacing:-0.3px;color:#0a0a0a">Emin</div></div>
<div style="left:507px;top:244px;width:30px;height:57px;background:#939496;border:1px solid #dfe0e3;overflow:hidden"><div style="left:0;top:0;width:28px;height:17px;background:rgba(255,255,255,.045)"></div><div style="left:0px;top:17px;width:28px;height:3px;background:#505154"></div><div style="left:0px;top:40px;width:28px;height:3.5px;background:#505154"></div><div class="t" style="left:3px;top:4px;font-size:11px;font-weight:bold;letter-spacing:-0.3px;color:#0a0a0a">Emin</div></div>
<div style="left:538px;top:244px;width:31px;height:57px;background:#939496;border:1px solid #dfe0e3;overflow:hidden"><div style="left:0;top:0;width:29px;height:17px;background:rgba(255,255,255,.045)"></div><div style="left:0px;top:17px;width:29px;height:3px;background:#505154"></div><div style="left:0px;top:24px;width:29px;height:3px;background:#505154"></div><div style="left:0px;top:28px;width:29px;height:3px;background:#505154"></div><div style="left:0px;top:50px;width:29px;height:3px;background:#505154"></div><div class="t" style="left:3px;top:4px;font-size:11px;font-weight:bold;letter-spacing:-0.3px;color:#0a0a0a">C</div></div>
<div style="left:570px;top:244px;width:30px;height:57px;background:#939496;border:1px solid #dfe0e3;overflow:hidden"><div style="left:0;top:0;width:28px;height:17px;background:rgba(255,255,255,.045)"></div><div style="left:14px;top:14px;width:14px;height:3px;background:#505154"></div><div style="left:0px;top:21px;width:28px;height:3px;background:#505154"></div><div style="left:0px;top:25px;width:28px;height:3px;background:#505154"></div><div style="left:0px;top:48px;width:28px;height:3px;background:#505154"></div><div class="t" style="left:3px;top:4px;font-size:11px;font-weight:bold;letter-spacing:-0.3px;color:#0a0a0a">D</div></div>
<div style="left:601px;top:244px;width:31px;height:57px;background:#939496;border:1px solid #dfe0e3;overflow:hidden"><div style="left:0;top:0;width:29px;height:17px;background:rgba(255,255,255,.045)"></div><div style="left:0px;top:17px;width:29px;height:3px;background:#505154"></div><div style="left:0px;top:40px;width:29px;height:3.5px;background:#505154"></div><div class="t" style="left:3px;top:4px;font-size:11px;font-weight:bold;letter-spacing:-0.3px;color:#0a0a0a">Emin</div></div>
<div style="left:633px;top:244px;width:30px;height:57px;background:#939496;border:1px solid #dfe0e3;overflow:hidden"><div style="left:0;top:0;width:28px;height:17px;background:rgba(255,255,255,.045)"></div><div style="left:0px;top:17px;width:28px;height:3px;background:#505154"></div><div style="left:0px;top:40px;width:28px;height:3.5px;background:#505154"></div><div class="t" style="left:3px;top:4px;font-size:11px;font-weight:bold;letter-spacing:-0.3px;color:#0a0a0a">Emin</div></div>
<div style="left:664px;top:244px;width:31px;height:57px;background:#939496;border:1px solid #dfe0e3;overflow:hidden"><div style="left:0;top:0;width:29px;height:17px;background:rgba(255,255,255,.045)"></div><div style="left:0px;top:17px;width:29px;height:3px;background:#505154"></div><div style="left:0px;top:24px;width:29px;height:3px;background:#505154"></div><div style="left:0px;top:28px;width:29px;height:3px;background:#505154"></div><div style="left:0px;top:50px;width:29px;height:3px;background:#505154"></div><div class="t" style="left:3px;top:4px;font-size:11px;font-weight:bold;letter-spacing:-0.3px;color:#0a0a0a">C</div></div>
<div style="left:696px;top:244px;width:30px;height:57px;background:#939496;border:1px solid #dfe0e3;overflow:hidden"><div style="left:0;top:0;width:28px;height:17px;background:rgba(255,255,255,.045)"></div><div style="left:14px;top:14px;width:14px;height:3px;background:#505154"></div><div style="left:0px;top:21px;width:28px;height:3px;background:#505154"></div><div style="left:0px;top:25px;width:28px;height:3px;background:#505154"></div><div style="left:0px;top:48px;width:28px;height:3px;background:#505154"></div><div class="t" style="left:3px;top:4px;font-size:11px;font-weight:bold;letter-spacing:-0.3px;color:#0a0a0a">D</div></div>
<div style="left:727px;top:244px;width:31px;height:57px;background:#939496;border:1px solid #dfe0e3;overflow:hidden"><div style="left:0;top:0;width:29px;height:17px;background:rgba(255,255,255,.045)"></div><div style="left:0px;top:17px;width:29px;height:3px;background:#505154"></div><div style="left:0px;top:40px;width:29px;height:3.5px;background:#505154"></div><div class="t" style="left:3px;top:4px;font-size:11px;font-weight:bold;letter-spacing:-0.3px;color:#0a0a0a">Emin</div></div>
<div style="left:759px;top:244px;width:15px;height:57px;background:#939496;border:1px solid #dfe0e3;overflow:hidden"><div style="left:0px;top:17px;width:13px;height:2.5px;background:#505154"></div><div style="left:0px;top:24px;width:13px;height:2.5px;background:#505154"></div><div style="left:0px;top:28px;width:13px;height:2.5px;background:#505154"></div><div style="left:0px;top:50px;width:13px;height:2.5px;background:#505154"></div></div>
<div style="left:775px;top:244px;width:6px;height:57px;background:#939496;border:1px solid #dfe0e3;overflow:hidden"><div style="left:0px;top:17px;width:4px;height:2.5px;background:#505154"></div><div style="left:0px;top:21px;width:4px;height:2.5px;background:#505154"></div><div style="left:0px;top:28px;width:4px;height:2.5px;background:#505154"></div><div style="left:0px;top:38px;width:4px;height:2.5px;background:#505154"></div></div>
<div style="left:782px;top:244px;width:7px;height:57px;background:#939496;border:1px solid #dfe0e3;overflow:hidden"><div style="left:0px;top:14px;width:5px;height:2.5px;background:#505154"></div><div style="left:0px;top:21px;width:5px;height:2.5px;background:#505154"></div><div style="left:0px;top:24px;width:5px;height:2.5px;background:#505154"></div><div style="left:0px;top:48px;width:5px;height:2.5px;background:#505154"></div></div>
<div style="left:790px;top:244px;width:31px;height:57px;background:#939496;border:1px solid #dfe0e3;overflow:hidden"><div style="left:0;top:0;width:29px;height:17px;background:rgba(255,255,255,.045)"></div><div style="left:0px;top:17px;width:29px;height:3px;background:#505154"></div><div style="left:0px;top:40px;width:29px;height:3.5px;background:#505154"></div><div class="t" style="left:3px;top:4px;font-size:11px;font-weight:bold;letter-spacing:-0.3px;color:#0a0a0a">Emin</div></div>
<div style="left:822px;top:244px;width:15px;height:57px;background:#939496;border:1px solid #dfe0e3;overflow:hidden"><div style="left:0px;top:17px;width:13px;height:2.5px;background:#505154"></div><div style="left:0px;top:24px;width:13px;height:2.5px;background:#505154"></div><div style="left:0px;top:28px;width:13px;height:2.5px;background:#505154"></div><div style="left:0px;top:50px;width:13px;height:2.5px;background:#505154"></div></div>
<div style="left:838px;top:244px;width:6px;height:57px;background:#939496;border:1px solid #dfe0e3;overflow:hidden"><div style="left:0px;top:17px;width:4px;height:2.5px;background:#505154"></div><div style="left:0px;top:21px;width:4px;height:2.5px;background:#505154"></div><div style="left:0px;top:28px;width:4px;height:2.5px;background:#505154"></div><div style="left:0px;top:38px;width:4px;height:2.5px;background:#505154"></div></div>
<div style="left:845px;top:244px;width:7px;height:57px;background:#939496;border:1px solid #dfe0e3;overflow:hidden"><div style="left:0px;top:14px;width:5px;height:2.5px;background:#505154"></div><div style="left:0px;top:21px;width:5px;height:2.5px;background:#505154"></div><div style="left:0px;top:24px;width:5px;height:2.5px;background:#505154"></div><div style="left:0px;top:48px;width:5px;height:2.5px;background:#505154"></div></div>
<div style="left:853px;top:244px;width:15px;height:57px;background:#939496;border:1px solid #dfe0e3;overflow:hidden"><div style="left:0px;top:3px;width:13px;height:3px;background:#505154"></div><div style="left:0px;top:10px;width:13px;height:3px;background:#505154"></div><div style="left:0px;top:15px;width:13px;height:3px;background:#505154"></div><div style="left:0px;top:37px;width:13px;height:3px;background:#505154"></div></div>
<div style="left:869px;top:244px;width:15px;height:57px;background:#939496;border:1px solid #dfe0e3;overflow:hidden"><div style="left:0px;top:3px;width:13px;height:3px;background:#505154"></div><div style="left:0px;top:10px;width:13px;height:3px;background:#505154"></div><div style="left:0px;top:15px;width:13px;height:3px;background:#505154"></div><div style="left:0px;top:37px;width:13px;height:3px;background:#505154"></div></div>
<div style="left:885px;top:244px;width:15px;height:57px;background:#939496;border:1px solid #dfe0e3;overflow:hidden"><div style="left:0px;top:15px;width:13px;height:3px;background:#505154"></div><div style="left:0px;top:20px;width:13px;height:3px;background:#505154"></div><div style="left:0px;top:24px;width:13px;height:3px;background:#505154"></div><div style="left:0px;top:48px;width:13px;height:3px;background:#505154"></div></div>
<div style="left:901px;top:244px;width:14px;height:57px;background:#939496;border:1px solid #dfe0e3;overflow:hidden"><div style="left:0px;top:15px;width:12px;height:3px;background:#505154"></div><div style="left:0px;top:20px;width:12px;height:3px;background:#505154"></div><div style="left:0px;top:24px;width:12px;height:3px;background:#505154"></div><div style="left:0px;top:48px;width:12px;height:3px;background:#505154"></div></div>
<div style="left:916px;top:244px;width:15px;height:57px;background:#939496;border:1px solid #dfe0e3;overflow:hidden"><div style="left:0px;top:17px;width:13px;height:2.5px;background:#505154"></div><div style="left:0px;top:24px;width:13px;height:2.5px;background:#505154"></div><div style="left:0px;top:28px;width:13px;height:2.5px;background:#505154"></div><div style="left:0px;top:50px;width:13px;height:2.5px;background:#505154"></div></div>
<div style="left:932px;top:244px;width:15px;height:57px;background:#939496;border:1px solid #dfe0e3;overflow:hidden"><div style="left:0px;top:3px;width:13px;height:3px;background:#505154"></div><div style="left:0px;top:10px;width:13px;height:3px;background:#505154"></div><div style="left:0px;top:15px;width:13px;height:3px;background:#505154"></div><div style="left:0px;top:37px;width:13px;height:3px;background:#505154"></div></div>
<div style="left:948px;top:244px;width:7px;height:57px;background:#939496;border:1px solid #dfe0e3;overflow:hidden"><div style="left:0px;top:17px;width:5px;height:2.5px;background:#505154"></div><div style="left:0px;top:21px;width:5px;height:2.5px;background:#505154"></div><div style="left:0px;top:28px;width:5px;height:2.5px;background:#505154"></div><div style="left:0px;top:38px;width:5px;height:2.5px;background:#505154"></div></div>
<div style="left:956px;top:244px;width:7px;height:57px;background:#939496;border:1px solid #dfe0e3;overflow:hidden"><div style="left:0px;top:14px;width:5px;height:2.5px;background:#505154"></div><div style="left:0px;top:21px;width:5px;height:2.5px;background:#505154"></div><div style="left:0px;top:24px;width:5px;height:2.5px;background:#505154"></div><div style="left:0px;top:48px;width:5px;height:2.5px;background:#505154"></div></div>
<div style="left:964px;top:244px;width:14px;height:57px;background:#939496;border:1px solid #dfe0e3;overflow:hidden"><div style="left:0px;top:3px;width:12px;height:3px;background:#505154"></div><div style="left:0px;top:10px;width:12px;height:3px;background:#505154"></div><div style="left:0px;top:15px;width:12px;height:3px;background:#505154"></div><div style="left:0px;top:37px;width:12px;height:3px;background:#505154"></div></div>
<div style="left:995px;top:244px;width:31px;height:57px;background:#939496;border:1px solid #dfe0e3;overflow:hidden"><div style="left:0;top:0;width:29px;height:17px;background:rgba(255,255,255,.045)"></div><div style="left:14px;top:17px;width:1px;height:40px;background:#6e6f71"></div><div style="left:0px;top:17px;width:29px;height:3px;background:#505154"></div><div style="left:0px;top:40px;width:29px;height:3.5px;background:#505154"></div><div class="t" style="left:3px;top:4px;font-size:11px;font-weight:bold;letter-spacing:-0.3px;color:#0a0a0a">Emin</div></div>
<div style="left:1027px;top:244px;width:30px;height:57px;background:#939496;border:1px solid #dfe0e3;overflow:hidden"><div style="left:0;top:0;width:28px;height:17px;background:rgba(255,255,255,.045)"></div><div style="left:0px;top:17px;width:28px;height:3px;background:#505154"></div><div style="left:0px;top:24px;width:28px;height:3px;background:#505154"></div><div style="left:0px;top:28px;width:28px;height:3px;background:#505154"></div><div style="left:0px;top:50px;width:28px;height:3px;background:#505154"></div><div class="t" style="left:3px;top:4px;font-size:11px;font-weight:bold;letter-spacing:-0.3px;color:#0a0a0a">C</div></div>
<div style="left:1058px;top:244px;width:31px;height:57px;background:#939496;border:1px solid #dfe0e3;overflow:hidden"><div style="left:0;top:0;width:29px;height:17px;background:rgba(255,255,255,.045)"></div><div style="left:14px;top:17px;width:1px;height:40px;background:#6e6f71"></div><div style="left:14px;top:14px;width:14px;height:3px;background:#505154"></div><div style="left:0px;top:21px;width:29px;height:3px;background:#505154"></div><div style="left:0px;top:25px;width:29px;height:3px;background:#505154"></div><div style="left:0px;top:48px;width:29px;height:3px;background:#505154"></div><div class="t" style="left:3px;top:4px;font-size:11px;font-weight:bold;letter-spacing:-0.3px;color:#0a0a0a">D</div></div>
<div style="left:1090px;top:244px;width:30px;height:57px;background:#939496;border:1px solid #dfe0e3;overflow:hidden"><div style="left:0;top:0;width:28px;height:17px;background:rgba(255,255,255,.045)"></div><div style="left:0px;top:17px;width:28px;height:3px;background:#505154"></div><div style="left:0px;top:40px;width:28px;height:3.5px;background:#505154"></div><div class="t" style="left:3px;top:4px;font-size:11px;font-weight:bold;letter-spacing:-0.3px;color:#0a0a0a">Emin</div></div>
<div style="left:1121px;top:244px;width:31px;height:57px;background:#939496;border:1px solid #dfe0e3;overflow:hidden"><div style="left:0;top:0;width:29px;height:17px;background:rgba(255,255,255,.045)"></div><div style="left:14px;top:17px;width:1px;height:40px;background:#6e6f71"></div><div style="left:0px;top:17px;width:29px;height:3px;background:#505154"></div><div style="left:0px;top:40px;width:29px;height:3.5px;background:#505154"></div><div class="t" style="left:3px;top:4px;font-size:11px;font-weight:bold;letter-spacing:-0.3px;color:#0a0a0a">Emin</div></div>
<div style="left:1153px;top:244px;width:30px;height:57px;background:#939496;border:1px solid #dfe0e3;overflow:hidden"><div style="left:0;top:0;width:28px;height:17px;background:rgba(255,255,255,.045)"></div><div style="left:0px;top:17px;width:28px;height:3px;background:#505154"></div><div style="left:0px;top:24px;width:28px;height:3px;background:#505154"></div><div style="left:0px;top:28px;width:28px;height:3px;background:#505154"></div><div style="left:0px;top:50px;width:28px;height:3px;background:#505154"></div><div class="t" style="left:3px;top:4px;font-size:11px;font-weight:bold;letter-spacing:-0.3px;color:#0a0a0a">C</div></div>
<div style="left:1184px;top:244px;width:31px;height:57px;background:#939496;border:1px solid #dfe0e3;overflow:hidden"><div style="left:0;top:0;width:29px;height:17px;background:rgba(255,255,255,.045)"></div><div style="left:14px;top:17px;width:1px;height:40px;background:#6e6f71"></div><div style="left:14px;top:14px;width:14px;height:3px;background:#505154"></div><div style="left:0px;top:21px;width:29px;height:3px;background:#505154"></div><div style="left:0px;top:25px;width:29px;height:3px;background:#505154"></div><div style="left:0px;top:48px;width:29px;height:3px;background:#505154"></div><div class="t" style="left:3px;top:4px;font-size:11px;font-weight:bold;letter-spacing:-0.3px;color:#0a0a0a">D</div></div>
<div style="left:1216px;top:244px;width:30px;height:57px;background:#939496;border:1px solid #dfe0e3;overflow:hidden"><div style="left:0;top:0;width:28px;height:17px;background:rgba(255,255,255,.045)"></div><div style="left:0px;top:17px;width:28px;height:3px;background:#505154"></div><div style="left:0px;top:40px;width:28px;height:3.5px;background:#505154"></div><div class="t" style="left:3px;top:4px;font-size:11px;font-weight:bold;letter-spacing:-0.3px;color:#0a0a0a">Emin</div></div>
<div style="left:1247px;top:244px;width:15px;height:57px;background:#939496;border:1px solid #dfe0e3;overflow:hidden"><div style="left:0px;top:17px;width:13px;height:2.5px;background:#505154"></div><div style="left:0px;top:24px;width:13px;height:2.5px;background:#505154"></div><div style="left:0px;top:28px;width:13px;height:2.5px;background:#505154"></div><div style="left:0px;top:50px;width:13px;height:2.5px;background:#505154"></div></div>
<div style="left:1263px;top:244px;width:7px;height:57px;background:#939496;border:1px solid #dfe0e3;overflow:hidden"><div style="left:0px;top:17px;width:5px;height:2.5px;background:#505154"></div><div style="left:0px;top:21px;width:5px;height:2.5px;background:#505154"></div><div style="left:0px;top:28px;width:5px;height:2.5px;background:#505154"></div><div style="left:0px;top:38px;width:5px;height:2.5px;background:#505154"></div></div>
<div style="left:1271px;top:244px;width:7px;height:57px;background:#939496;border:1px solid #dfe0e3;overflow:hidden"><div style="left:0px;top:14px;width:5px;height:2.5px;background:#505154"></div><div style="left:0px;top:21px;width:5px;height:2.5px;background:#505154"></div><div style="left:0px;top:24px;width:5px;height:2.5px;background:#505154"></div><div style="left:0px;top:48px;width:5px;height:2.5px;background:#505154"></div></div>
<div style="left:1279px;top:244px;width:30px;height:57px;background:#939496;border:1px solid #dfe0e3;overflow:hidden"><div style="left:0;top:0;width:28px;height:17px;background:rgba(255,255,255,.045)"></div><div style="left:0px;top:17px;width:28px;height:3px;background:#505154"></div><div style="left:0px;top:40px;width:28px;height:3.5px;background:#505154"></div><div class="t" style="left:3px;top:4px;font-size:11px;font-weight:bold;letter-spacing:-0.3px;color:#0a0a0a">Emin</div></div>
<div style="left:1310px;top:244px;width:15px;height:57px;background:#939496;border:1px solid #dfe0e3;overflow:hidden"><div style="left:0px;top:17px;width:13px;height:2.5px;background:#505154"></div><div style="left:0px;top:24px;width:13px;height:2.5px;background:#505154"></div><div style="left:0px;top:28px;width:13px;height:2.5px;background:#505154"></div><div style="left:0px;top:50px;width:13px;height:2.5px;background:#505154"></div></div>
<div style="left:1326px;top:244px;width:7px;height:57px;background:#939496;border:1px solid #dfe0e3;overflow:hidden"><div style="left:0px;top:17px;width:5px;height:2.5px;background:#505154"></div><div style="left:0px;top:21px;width:5px;height:2.5px;background:#505154"></div><div style="left:0px;top:28px;width:5px;height:2.5px;background:#505154"></div><div style="left:0px;top:38px;width:5px;height:2.5px;background:#505154"></div></div>
<div style="left:1334px;top:244px;width:7px;height:57px;background:#939496;border:1px solid #dfe0e3;overflow:hidden"><div style="left:0px;top:14px;width:5px;height:2.5px;background:#505154"></div><div style="left:0px;top:21px;width:5px;height:2.5px;background:#505154"></div><div style="left:0px;top:24px;width:5px;height:2.5px;background:#505154"></div><div style="left:0px;top:48px;width:5px;height:2.5px;background:#505154"></div></div>
<div style="left:1342px;top:244px;width:30px;height:57px;background:#939496;border:1px solid #dfe0e3;overflow:hidden"><div style="left:0;top:0;width:28px;height:17px;background:rgba(255,255,255,.045)"></div><div style="left:0px;top:17px;width:28px;height:3px;background:#505154"></div><div style="left:0px;top:40px;width:28px;height:3.5px;background:#505154"></div><div class="t" style="left:3px;top:4px;font-size:11px;font-weight:bold;letter-spacing:-0.3px;color:#0a0a0a">Emin</div></div>
<div style="left:1373px;top:244px;width:15px;height:57px;background:#939496;border:1px solid #dfe0e3;overflow:hidden"><div style="left:0px;top:15px;width:13px;height:3px;background:#505154"></div><div style="left:0px;top:20px;width:13px;height:3px;background:#505154"></div><div style="left:0px;top:24px;width:13px;height:3px;background:#505154"></div><div style="left:0px;top:48px;width:13px;height:3px;background:#505154"></div></div>
<div style="left:1389px;top:244px;width:15px;height:57px;background:#939496;border:1px solid #dfe0e3;overflow:hidden"><div style="left:0px;top:17px;width:13px;height:2.5px;background:#505154"></div><div style="left:0px;top:24px;width:13px;height:2.5px;background:#505154"></div><div style="left:0px;top:28px;width:13px;height:2.5px;background:#505154"></div><div style="left:0px;top:50px;width:13px;height:2.5px;background:#505154"></div></div>
<div style="left:1405px;top:244px;width:14px;height:57px;background:#939496;border:1px solid #dfe0e3;overflow:hidden"><div style="left:0px;top:15px;width:12px;height:3px;background:#505154"></div><div style="left:0px;top:20px;width:12px;height:3px;background:#505154"></div><div style="left:0px;top:24px;width:12px;height:3px;background:#505154"></div><div style="left:0px;top:48px;width:12px;height:3px;background:#505154"></div></div>
<div style="left:1420px;top:244px;width:15px;height:57px;background:#939496;border:1px solid #dfe0e3;overflow:hidden"><div style="left:0px;top:3px;width:13px;height:3px;background:#505154"></div><div style="left:0px;top:10px;width:13px;height:3px;background:#505154"></div><div style="left:0px;top:15px;width:13px;height:3px;background:#505154"></div><div style="left:0px;top:37px;width:13px;height:3px;background:#505154"></div></div>
<div style="left:1436px;top:244px;width:7px;height:57px;background:#939496;border:1px solid #dfe0e3;overflow:hidden"><div style="left:0px;top:17px;width:5px;height:2.5px;background:#505154"></div><div style="left:0px;top:21px;width:5px;height:2.5px;background:#505154"></div><div style="left:0px;top:28px;width:5px;height:2.5px;background:#505154"></div><div style="left:0px;top:38px;width:5px;height:2.5px;background:#505154"></div></div>
<div style="left:1444px;top:244px;width:7px;height:57px;background:#939496;border:1px solid #dfe0e3;overflow:hidden"><div style="left:0px;top:14px;width:5px;height:2.5px;background:#505154"></div><div style="left:0px;top:21px;width:5px;height:2.5px;background:#505154"></div><div style="left:0px;top:24px;width:5px;height:2.5px;background:#505154"></div><div style="left:0px;top:48px;width:5px;height:2.5px;background:#505154"></div></div>
<div style="left:1452px;top:244px;width:15px;height:57px;background:#939496;border:1px solid #dfe0e3;overflow:hidden"><div style="left:0px;top:3px;width:13px;height:3px;background:#505154"></div><div style="left:0px;top:10px;width:13px;height:3px;background:#505154"></div><div style="left:0px;top:15px;width:13px;height:3px;background:#505154"></div><div style="left:0px;top:37px;width:13px;height:3px;background:#505154"></div></div>
<div style="left:382px;top:368px;width:14px;height:57px;background:#939496;border:1px solid #dfe0e3;overflow:hidden"><div style="left:0px;top:17px;width:13px;height:2.5px;background:#505154"></div><div style="left:0px;top:24px;width:13px;height:2.5px;background:#505154"></div><div style="left:0px;top:28px;width:13px;height:2.5px;background:#505154"></div><div style="left:0px;top:50px;width:13px;height:2.5px;background:#505154"></div></div>
<div style="left:397px;top:368px;width:6px;height:57px;background:#939496;border:1px solid #dfe0e3;overflow:hidden"><div style="left:0px;top:17px;width:4px;height:2.5px;background:#505154"></div><div style="left:0px;top:21px;width:4px;height:2.5px;background:#505154"></div><div style="left:0px;top:28px;width:4px;height:2.5px;background:#505154"></div><div style="left:0px;top:38px;width:4px;height:2.5px;background:#505154"></div></div>
<div style="left:404px;top:368px;width:7px;height:57px;background:#939496;border:1px solid #dfe0e3;overflow:hidden"><div style="left:0px;top:14px;width:5px;height:2.5px;background:#505154"></div><div style="left:0px;top:21px;width:5px;height:2.5px;background:#505154"></div><div style="left:0px;top:24px;width:5px;height:2.5px;background:#505154"></div><div style="left:0px;top:48px;width:5px;height:2.5px;background:#505154"></div></div>
<div style="left:412px;top:368px;width:31px;height:57px;background:#939496;border:1px solid #dfe0e3;overflow:hidden"><div style="left:0;top:0;width:29px;height:17px;background:rgba(255,255,255,.045)"></div><div style="left:0px;top:17px;width:29px;height:3px;background:#505154"></div><div style="left:0px;top:40px;width:29px;height:3.5px;background:#505154"></div><div class="t" style="left:3px;top:4px;font-size:11px;font-weight:bold;letter-spacing:-0.3px;color:#0a0a0a">Emin</div></div>
<div style="left:444px;top:368px;width:15px;height:57px;background:#939496;border:1px solid #dfe0e3;overflow:hidden"><div style="left:0px;top:17px;width:13px;height:2.5px;background:#505154"></div><div style="left:0px;top:24px;width:13px;height:2.5px;background:#505154"></div><div style="left:0px;top:28px;width:13px;height:2.5px;background:#505154"></div><div style="left:0px;top:50px;width:13px;height:2.5px;background:#505154"></div></div>
<div style="left:460px;top:368px;width:6px;height:57px;background:#939496;border:1px solid #dfe0e3;overflow:hidden"><div style="left:0px;top:17px;width:4px;height:2.5px;background:#505154"></div><div style="left:0px;top:21px;width:4px;height:2.5px;background:#505154"></div><div style="left:0px;top:28px;width:4px;height:2.5px;background:#505154"></div><div style="left:0px;top:38px;width:4px;height:2.5px;background:#505154"></div></div>
<div style="left:467px;top:368px;width:7px;height:57px;background:#939496;border:1px solid #dfe0e3;overflow:hidden"><div style="left:0px;top:14px;width:5px;height:2.5px;background:#505154"></div><div style="left:0px;top:21px;width:5px;height:2.5px;background:#505154"></div><div style="left:0px;top:24px;width:5px;height:2.5px;background:#505154"></div><div style="left:0px;top:48px;width:5px;height:2.5px;background:#505154"></div></div>
<div style="left:475px;top:368px;width:31px;height:57px;background:#939496;border:1px solid #dfe0e3;overflow:hidden"><div style="left:0;top:0;width:29px;height:17px;background:rgba(255,255,255,.045)"></div><div style="left:0px;top:17px;width:29px;height:3px;background:#505154"></div><div style="left:0px;top:40px;width:29px;height:3.5px;background:#505154"></div><div class="t" style="left:3px;top:4px;font-size:11px;font-weight:bold;letter-spacing:-0.3px;color:#0a0a0a">Emin</div></div>
<div style="left:507px;top:368px;width:30px;height:57px;background:#939496;border:1px solid #dfe0e3;overflow:hidden"><div style="left:0;top:0;width:28px;height:17px;background:rgba(255,255,255,.045)"></div><div style="left:0px;top:17px;width:28px;height:3px;background:#505154"></div><div style="left:0px;top:40px;width:28px;height:3.5px;background:#505154"></div><div class="t" style="left:3px;top:4px;font-size:11px;font-weight:bold;letter-spacing:-0.3px;color:#0a0a0a">Emin</div></div>
<div style="left:538px;top:368px;width:31px;height:57px;background:#939496;border:1px solid #dfe0e3;overflow:hidden"><div style="left:0;top:0;width:29px;height:17px;background:rgba(255,255,255,.045)"></div><div style="left:0px;top:17px;width:29px;height:3px;background:#505154"></div><div style="left:0px;top:24px;width:29px;height:3px;background:#505154"></div><div style="left:0px;top:28px;width:29px;height:3px;background:#505154"></div><div style="left:0px;top:50px;width:29px;height:3px;background:#505154"></div><div class="t" style="left:3px;top:4px;font-size:11px;font-weight:bold;letter-spacing:-0.3px;color:#0a0a0a">C</div></div>
<div style="left:570px;top:368px;width:30px;height:57px;background:#939496;border:1px solid #dfe0e3;overflow:hidden"><div style="left:0;top:0;width:28px;height:17px;background:rgba(255,255,255,.045)"></div><div style="left:14px;top:14px;width:14px;height:3px;background:#505154"></div><div style="left:0px;top:21px;width:28px;height:3px;background:#505154"></div><div style="left:0px;top:25px;width:28px;height:3px;background:#505154"></div><div style="left:0px;top:48px;width:28px;height:3px;background:#505154"></div><div class="t" style="left:3px;top:4px;font-size:11px;font-weight:bold;letter-spacing:-0.3px;color:#0a0a0a">D</div></div>
<div style="left:601px;top:368px;width:31px;height:57px;background:#939496;border:1px solid #dfe0e3;overflow:hidden"><div style="left:0;top:0;width:29px;height:17px;background:rgba(255,255,255,.045)"></div><div style="left:0px;top:17px;width:29px;height:3px;background:#505154"></div><div style="left:0px;top:40px;width:29px;height:3.5px;background:#505154"></div><div class="t" style="left:3px;top:4px;font-size:11px;font-weight:bold;letter-spacing:-0.3px;color:#0a0a0a">Emin</div></div>
<div style="left:633px;top:368px;width:30px;height:57px;background:#939496;border:1px solid #dfe0e3;overflow:hidden"><div style="left:0;top:0;width:28px;height:17px;background:rgba(255,255,255,.045)"></div><div style="left:0px;top:17px;width:28px;height:3px;background:#505154"></div><div style="left:0px;top:40px;width:28px;height:3.5px;background:#505154"></div><div class="t" style="left:3px;top:4px;font-size:11px;font-weight:bold;letter-spacing:-0.3px;color:#0a0a0a">Emin</div></div>
<div style="left:664px;top:368px;width:31px;height:57px;background:#939496;border:1px solid #dfe0e3;overflow:hidden"><div style="left:0;top:0;width:29px;height:17px;background:rgba(255,255,255,.045)"></div><div style="left:0px;top:17px;width:29px;height:3px;background:#505154"></div><div style="left:0px;top:24px;width:29px;height:3px;background:#505154"></div><div style="left:0px;top:28px;width:29px;height:3px;background:#505154"></div><div style="left:0px;top:50px;width:29px;height:3px;background:#505154"></div><div class="t" style="left:3px;top:4px;font-size:11px;font-weight:bold;letter-spacing:-0.3px;color:#0a0a0a">C</div></div>
<div style="left:696px;top:368px;width:30px;height:57px;background:#939496;border:1px solid #dfe0e3;overflow:hidden"><div style="left:0;top:0;width:28px;height:17px;background:rgba(255,255,255,.045)"></div><div style="left:14px;top:14px;width:14px;height:3px;background:#505154"></div><div style="left:0px;top:21px;width:28px;height:3px;background:#505154"></div><div style="left:0px;top:25px;width:28px;height:3px;background:#505154"></div><div style="left:0px;top:48px;width:28px;height:3px;background:#505154"></div><div class="t" style="left:3px;top:4px;font-size:11px;font-weight:bold;letter-spacing:-0.3px;color:#0a0a0a">D</div></div>
<div style="left:727px;top:368px;width:31px;height:57px;background:#939496;border:1px solid #dfe0e3;overflow:hidden"><div style="left:0;top:0;width:29px;height:17px;background:rgba(255,255,255,.045)"></div><div style="left:0px;top:17px;width:29px;height:3px;background:#505154"></div><div style="left:0px;top:40px;width:29px;height:3.5px;background:#505154"></div><div class="t" style="left:3px;top:4px;font-size:11px;font-weight:bold;letter-spacing:-0.3px;color:#0a0a0a">Emin</div></div>
<div style="left:759px;top:368px;width:15px;height:57px;background:#939496;border:1px solid #dfe0e3;overflow:hidden"><div style="left:0px;top:17px;width:13px;height:2.5px;background:#505154"></div><div style="left:0px;top:24px;width:13px;height:2.5px;background:#505154"></div><div style="left:0px;top:28px;width:13px;height:2.5px;background:#505154"></div><div style="left:0px;top:50px;width:13px;height:2.5px;background:#505154"></div></div>
<div style="left:775px;top:368px;width:6px;height:57px;background:#939496;border:1px solid #dfe0e3;overflow:hidden"><div style="left:0px;top:17px;width:4px;height:2.5px;background:#505154"></div><div style="left:0px;top:21px;width:4px;height:2.5px;background:#505154"></div><div style="left:0px;top:28px;width:4px;height:2.5px;background:#505154"></div><div style="left:0px;top:38px;width:4px;height:2.5px;background:#505154"></div></div>
<div style="left:782px;top:368px;width:7px;height:57px;background:#939496;border:1px solid #dfe0e3;overflow:hidden"><div style="left:0px;top:14px;width:5px;height:2.5px;background:#505154"></div><div style="left:0px;top:21px;width:5px;height:2.5px;background:#505154"></div><div style="left:0px;top:24px;width:5px;height:2.5px;background:#505154"></div><div style="left:0px;top:48px;width:5px;height:2.5px;background:#505154"></div></div>
<div style="left:790px;top:368px;width:31px;height:57px;background:#939496;border:1px solid #dfe0e3;overflow:hidden"><div style="left:0;top:0;width:29px;height:17px;background:rgba(255,255,255,.045)"></div><div style="left:0px;top:17px;width:29px;height:3px;background:#505154"></div><div style="left:0px;top:40px;width:29px;height:3.5px;background:#505154"></div><div class="t" style="left:3px;top:4px;font-size:11px;font-weight:bold;letter-spacing:-0.3px;color:#0a0a0a">Emin</div></div>
<div style="left:822px;top:368px;width:15px;height:57px;background:#939496;border:1px solid #dfe0e3;overflow:hidden"><div style="left:0px;top:17px;width:13px;height:2.5px;background:#505154"></div><div style="left:0px;top:24px;width:13px;height:2.5px;background:#505154"></div><div style="left:0px;top:28px;width:13px;height:2.5px;background:#505154"></div><div style="left:0px;top:50px;width:13px;height:2.5px;background:#505154"></div></div>
<div style="left:838px;top:368px;width:6px;height:57px;background:#939496;border:1px solid #dfe0e3;overflow:hidden"><div style="left:0px;top:17px;width:4px;height:2.5px;background:#505154"></div><div style="left:0px;top:21px;width:4px;height:2.5px;background:#505154"></div><div style="left:0px;top:28px;width:4px;height:2.5px;background:#505154"></div><div style="left:0px;top:38px;width:4px;height:2.5px;background:#505154"></div></div>
<div style="left:845px;top:368px;width:7px;height:57px;background:#939496;border:1px solid #dfe0e3;overflow:hidden"><div style="left:0px;top:14px;width:5px;height:2.5px;background:#505154"></div><div style="left:0px;top:21px;width:5px;height:2.5px;background:#505154"></div><div style="left:0px;top:24px;width:5px;height:2.5px;background:#505154"></div><div style="left:0px;top:48px;width:5px;height:2.5px;background:#505154"></div></div>
<div style="left:853px;top:368px;width:31px;height:57px;background:#939496;border:1px solid #dfe0e3;overflow:hidden"><div style="left:0;top:0;width:29px;height:17px;background:rgba(255,255,255,.045)"></div><div style="left:0px;top:17px;width:29px;height:3px;background:#505154"></div><div style="left:0px;top:40px;width:29px;height:3.5px;background:#505154"></div><div class="t" style="left:3px;top:4px;font-size:11px;font-weight:bold;letter-spacing:-0.3px;color:#0a0a0a">Emin</div></div>
<div style="left:885px;top:368px;width:15px;height:57px;background:#939496;border:1px solid #dfe0e3;overflow:hidden"><div style="left:0px;top:15px;width:13px;height:3px;background:#505154"></div><div style="left:0px;top:20px;width:13px;height:3px;background:#505154"></div><div style="left:0px;top:24px;width:13px;height:3px;background:#505154"></div><div style="left:0px;top:48px;width:13px;height:3px;background:#505154"></div></div>
<div style="left:901px;top:368px;width:14px;height:57px;background:#939496;border:1px solid #dfe0e3;overflow:hidden"><div style="left:0px;top:15px;width:12px;height:3px;background:#505154"></div><div style="left:0px;top:20px;width:12px;height:3px;background:#505154"></div><div style="left:0px;top:24px;width:12px;height:3px;background:#505154"></div><div style="left:0px;top:48px;width:12px;height:3px;background:#505154"></div></div>
<div style="left:916px;top:368px;width:15px;height:57px;background:#939496;border:1px solid #dfe0e3;overflow:hidden"><div style="left:0px;top:17px;width:13px;height:2.5px;background:#505154"></div><div style="left:0px;top:24px;width:13px;height:2.5px;background:#505154"></div><div style="left:0px;top:28px;width:13px;height:2.5px;background:#505154"></div><div style="left:0px;top:50px;width:13px;height:2.5px;background:#505154"></div></div>
<div style="left:932px;top:368px;width:15px;height:57px;background:#939496;border:1px solid #dfe0e3;overflow:hidden"><div style="left:0px;top:3px;width:13px;height:3px;background:#505154"></div><div style="left:0px;top:10px;width:13px;height:3px;background:#505154"></div><div style="left:0px;top:15px;width:13px;height:3px;background:#505154"></div><div style="left:0px;top:37px;width:13px;height:3px;background:#505154"></div></div>
<div style="left:948px;top:368px;width:7px;height:57px;background:#939496;border:1px solid #dfe0e3;overflow:hidden"><div style="left:0px;top:17px;width:5px;height:2.5px;background:#505154"></div><div style="left:0px;top:21px;width:5px;height:2.5px;background:#505154"></div><div style="left:0px;top:28px;width:5px;height:2.5px;background:#505154"></div><div style="left:0px;top:38px;width:5px;height:2.5px;background:#505154"></div></div>
<div style="left:956px;top:368px;width:7px;height:57px;background:#939496;border:1px solid #dfe0e3;overflow:hidden"><div style="left:0px;top:14px;width:5px;height:2.5px;background:#505154"></div><div style="left:0px;top:21px;width:5px;height:2.5px;background:#505154"></div><div style="left:0px;top:24px;width:5px;height:2.5px;background:#505154"></div><div style="left:0px;top:48px;width:5px;height:2.5px;background:#505154"></div></div>
<div style="left:964px;top:368px;width:14px;height:57px;background:#939496;border:1px solid #dfe0e3;overflow:hidden"><div style="left:0px;top:3px;width:12px;height:3px;background:#505154"></div><div style="left:0px;top:10px;width:12px;height:3px;background:#505154"></div><div style="left:0px;top:15px;width:12px;height:3px;background:#505154"></div><div style="left:0px;top:37px;width:12px;height:3px;background:#505154"></div></div>
<div style="left:995px;top:368px;width:472px;height:57px;background:#939496;border:1px solid #dfe0e3;overflow:hidden"><div style="left:14px;top:0px;width:1px;height:57px;background:#6e6f71"></div><div style="left:77px;top:0px;width:1px;height:57px;background:#6e6f71"></div><div style="left:140px;top:0px;width:1px;height:57px;background:#6e6f71"></div><div style="left:203px;top:0px;width:1px;height:57px;background:#6e6f71"></div><div style="left:266px;top:0px;width:1px;height:57px;background:#6e6f71"></div><div style="left:329px;top:0px;width:1px;height:57px;background:#6e6f71"></div><div style="left:392px;top:0px;width:1px;height:57px;background:#6e6f71"></div><div style="left:455px;top:0px;width:1px;height:57px;background:#6e6f71"></div><div style="left:1px;top:17px;width:94px;height:3px;background:#505154"></div><div style="left:95px;top:17px;width:47px;height:3px;background:#505154"></div><div style="left:142px;top:13px;width:47px;height:3px;background:#505154"></div><div style="left:189px;top:17px;width:63px;height:3px;background:#505154"></div><div style="left:252px;top:13px;width:47px;height:3px;background:#505154"></div><div style="left:299px;top:13px;width:31px;height:3px;background:#505154"></div><div style="left:330px;top:21px;width:63px;height:3px;background:#505154"></div><div style="left:393px;top:21px;width:31px;height:3px;background:#505154"></div><div style="left:424px;top:13px;width:45px;height:3px;background:#505154"></div><div style="left:1px;top:21px;width:94px;height:3px;background:#505154"></div><div style="left:95px;top:21px;width:31px;height:3px;background:#505154"></div><div style="left:126px;top:21px;width:63px;height:3px;background:#505154"></div><div style="left:189px;top:25px;width:31px;height:3px;background:#505154"></div><div style="left:220px;top:17px;width:31px;height:3px;background:#505154"></div><div style="left:251px;top:25px;width:31px;height:3px;background:#505154"></div><div style="left:282px;top:21px;width:31px;height:3px;background:#505154"></div><div style="left:313px;top:17px;width:31px;height:3px;background:#505154"></div><div style="left:344px;top:21px;width:31px;height:3px;background:#505154"></div><div style="left:375px;top:21px;width:31px;height:3px;background:#505154"></div><div style="left:406px;top:21px;width:63px;height:3px;background:#505154"></div><div style="left:1px;top:25px;width:31px;height:3px;background:#505154"></div><div style="left:32px;top:25px;width:31px;height:3px;background:#505154"></div><div style="left:63px;top:25px;width:63px;height:3px;background:#505154"></div><div style="left:126px;top:25px;width:31px;height:3px;background:#505154"></div><div style="left:157px;top:25px;width:63px;height:3px;background:#505154"></div><div style="left:220px;top:25px;width:31px;height:3px;background:#505154"></div><div style="left:251px;top:25px;width:31px;height:3px;background:#505154"></div><div style="left:282px;top:21px;width:63px;height:3px;background:#505154"></div><div style="left:345px;top:25px;width:94px;height:3px;background:#505154"></div><div style="left:439px;top:25px;width:30px;height:3px;background:#505154"></div><div style="left:1px;top:29px;width:63px;height:3px;background:#505154"></div><div style="left:64px;top:29px;width:63px;height:3px;background:#505154"></div><div style="left:127px;top:33px;width:31px;height:3px;background:#505154"></div><div style="left:158px;top:29px;width:63px;height:3px;background:#505154"></div><div style="left:221px;top:29px;width:31px;height:3px;background:#505154"></div><div style="left:252px;top:29px;width:31px;height:3px;background:#505154"></div><div style="left:283px;top:25px;width:63px;height:3px;background:#505154"></div><div style="left:346px;top:33px;width:94px;height:3px;background:#505154"></div><div style="left:440px;top:33px;width:29px;height:3px;background:#505154"></div><div style="left:19px;top:44px;width:31px;height:3px;background:#505154"></div><div style="left:50px;top:47px;width:63px;height:3px;background:#505154"></div><div style="left:113px;top:41px;width:31px;height:3px;background:#505154"></div><div style="left:160px;top:47px;width:47px;height:3px;background:#505154"></div><div style="left:215px;top:44px;width:47px;height:3px;background:#505154"></div><div style="left:262px;top:44px;width:47px;height:3px;background:#505154"></div><div style="left:309px;top:41px;width:94px;height:3px;background:#505154"></div><div style="left:403px;top:47px;width:47px;height:3px;background:#505154"></div><div style="left:458px;top:44px;width:11px;height:3px;background:#505154"></div><div style="left:30px;top:49px;width:31px;height:3px;background:#505154"></div><div style="left:69px;top:46px;width:47px;height:3px;background:#505154"></div><div style="left:116px;top:52px;width:63px;height:3px;background:#505154"></div><div style="left:187px;top:46px;width:94px;height:3px;background:#505154"></div><div style="left:281px;top:52px;width:31px;height:3px;background:#505154"></div><div style="left:328px;top:46px;width:31px;height:3px;background:#505154"></div><div style="left:367px;top:49px;width:47px;height:3px;background:#505154"></div><div style="left:430px;top:46px;width:39px;height:3px;background:#505154"></div><div class="t" style="left:3px;top:4px;font-size:11px;font-weight:bold;letter-spacing:-0.3px;color:#0a0a0a">Emin</div></div>
<div style="left:475px;top:58px;width:31px;height:57px;background:#939496;border:1px solid #dfe0e3;overflow:hidden"><div style="left:2px;top:42px;width:25px;height:6px;background:#505154"></div></div>
<div style="left:507px;top:58px;width:62px;height:57px;background:#939496;border:1px solid #dfe0e3;overflow:hidden"><div style="left:0;top:0;width:60px;height:17px;background:rgba(255,255,255,.045)"></div><div style="left:0px;top:22px;width:60px;height:6px;background:#505154"></div><div style="left:19px;top:30px;width:7px;height:6px;background:#505154"></div><div style="left:50px;top:30px;width:7px;height:6px;background:#505154"></div><div style="left:3px;top:42px;width:7px;height:3px;background:#505154"></div><div style="left:34px;top:42px;width:7px;height:3px;background:#505154"></div><div style="left:0px;top:45px;width:22px;height:6px;background:#505154"></div><div style="left:27px;top:45px;width:26px;height:6px;background:#505154"></div><div class="t" style="left:3px;top:4px;font-size:11px;font-weight:bold;letter-spacing:-0.3px;color:#0a0a0a">Groove Agent</div></div>
<div style="left:570px;top:58px;width:62px;height:57px;background:#939496;border:1px solid #dfe0e3;overflow:hidden"><div style="left:0;top:0;width:60px;height:17px;background:rgba(255,255,255,.045)"></div><div style="left:0px;top:22px;width:60px;height:6px;background:#505154"></div><div style="left:19px;top:30px;width:7px;height:6px;background:#505154"></div><div style="left:50px;top:30px;width:7px;height:6px;background:#505154"></div><div style="left:3px;top:42px;width:7px;height:3px;background:#505154"></div><div style="left:34px;top:42px;width:7px;height:3px;background:#505154"></div><div style="left:0px;top:45px;width:22px;height:6px;background:#505154"></div><div style="left:27px;top:45px;width:26px;height:6px;background:#505154"></div><div class="t" style="left:3px;top:4px;font-size:11px;font-weight:bold;letter-spacing:-0.3px;color:#0a0a0a">Groove Agent</div></div>
<div style="left:633px;top:58px;width:62px;height:57px;background:#939496;border:1px solid #dfe0e3;overflow:hidden"><div style="left:0;top:0;width:60px;height:17px;background:rgba(255,255,255,.045)"></div><div style="left:0px;top:22px;width:60px;height:6px;background:#505154"></div><div style="left:19px;top:30px;width:7px;height:6px;background:#505154"></div><div style="left:50px;top:30px;width:7px;height:6px;background:#505154"></div><div style="left:0px;top:45px;width:60px;height:6px;background:#505154"></div><div style="left:3px;top:42px;width:7px;height:3px;background:#505154"></div><div style="left:18px;top:42px;width:7px;height:3px;background:#505154"></div><div style="left:33px;top:42px;width:7px;height:3px;background:#505154"></div><div style="left:46px;top:42px;width:7px;height:3px;background:#505154"></div><div class="t" style="left:3px;top:4px;font-size:11px;font-weight:bold;letter-spacing:-0.3px;color:#0a0a0a">Groove Agent</div></div>
<div style="left:979px;top:58px;width:15px;height:57px;background:#939496;border:1px solid #dfe0e3;overflow:hidden"><div style="left:8px;top:14px;width:5px;height:6px;background:#505154"></div><div style="left:0px;top:33px;width:12px;height:6px;background:#505154"></div></div>
<div style="left:995px;top:58px;width:31px;height:57px;background:#939496;border:1px solid #dfe0e3;overflow:hidden"><div style="left:14px;top:0px;width:1px;height:57px;background:#6e6f71"></div><div style="left:8px;top:10px;width:7px;height:6px;background:#505154"></div><div style="left:0px;top:22px;width:29px;height:6px;background:#505154"></div><div style="left:0px;top:42px;width:29px;height:9px;background:#505154"></div><div style="left:6px;top:41px;width:1px;height:3px;background:#939496"></div><div style="left:14px;top:41px;width:1px;height:3px;background:#939496"></div><div style="left:22px;top:41px;width:1px;height:3px;background:#939496"></div><div style="left:9px;top:47px;width:3px;height:4px;background:#939496"></div></div>
<div style="left:1027px;top:58px;width:30px;height:57px;background:#939496;border:1px solid #dfe0e3;overflow:hidden"><div style="left:8px;top:10px;width:7px;height:6px;background:#505154"></div><div style="left:0px;top:22px;width:28px;height:6px;background:#505154"></div><div style="left:0px;top:42px;width:28px;height:9px;background:#505154"></div><div style="left:6px;top:41px;width:1px;height:3px;background:#939496"></div><div style="left:14px;top:41px;width:1px;height:3px;background:#939496"></div><div style="left:22px;top:41px;width:1px;height:3px;background:#939496"></div><div style="left:9px;top:47px;width:3px;height:4px;background:#939496"></div></div>
<div style="left:1058px;top:58px;width:31px;height:57px;background:#939496;border:1px solid #dfe0e3;overflow:hidden"><div style="left:14px;top:0px;width:1px;height:57px;background:#6e6f71"></div><div style="left:8px;top:10px;width:7px;height:6px;background:#505154"></div><div style="left:0px;top:22px;width:29px;height:6px;background:#505154"></div><div style="left:0px;top:42px;width:29px;height:9px;background:#505154"></div><div style="left:6px;top:41px;width:1px;height:3px;background:#939496"></div><div style="left:14px;top:41px;width:1px;height:3px;background:#939496"></div><div style="left:22px;top:41px;width:1px;height:3px;background:#939496"></div><div style="left:9px;top:47px;width:3px;height:4px;background:#939496"></div></div>
<div style="left:1090px;top:58px;width:30px;height:57px;background:#939496;border:1px solid #dfe0e3;overflow:hidden"><div style="left:8px;top:10px;width:7px;height:6px;background:#505154"></div><div style="left:0px;top:22px;width:28px;height:6px;background:#505154"></div><div style="left:0px;top:42px;width:28px;height:9px;background:#505154"></div><div style="left:6px;top:41px;width:1px;height:3px;background:#939496"></div><div style="left:14px;top:41px;width:1px;height:3px;background:#939496"></div><div style="left:22px;top:41px;width:1px;height:3px;background:#939496"></div><div style="left:9px;top:47px;width:3px;height:4px;background:#939496"></div></div>
<div style="left:1121px;top:58px;width:31px;height:57px;background:#939496;border:1px solid #dfe0e3;overflow:hidden"><div style="left:14px;top:0px;width:1px;height:57px;background:#6e6f71"></div><div style="left:8px;top:10px;width:7px;height:6px;background:#505154"></div><div style="left:25px;top:10px;width:4px;height:6px;background:#505154"></div><div style="left:0px;top:22px;width:29px;height:6px;background:#505154"></div><div style="left:6px;top:30px;width:7px;height:6px;background:#505154"></div><div style="left:23px;top:30px;width:6px;height:6px;background:#505154"></div><div style="left:0px;top:42px;width:6px;height:3px;background:#505154"></div><div style="left:14px;top:42px;width:7px;height:3px;background:#505154"></div><div style="left:0px;top:45px;width:29px;height:6px;background:#505154"></div></div>
<div style="left:1153px;top:58px;width:30px;height:57px;background:#939496;border:1px solid #dfe0e3;overflow:hidden"><div style="left:8px;top:10px;width:7px;height:6px;background:#505154"></div><div style="left:24px;top:10px;width:4px;height:6px;background:#505154"></div><div style="left:0px;top:22px;width:28px;height:6px;background:#505154"></div><div style="left:6px;top:30px;width:7px;height:6px;background:#505154"></div><div style="left:22px;top:30px;width:6px;height:6px;background:#505154"></div><div style="left:0px;top:42px;width:6px;height:3px;background:#505154"></div><div style="left:14px;top:42px;width:7px;height:3px;background:#505154"></div><div style="left:0px;top:45px;width:28px;height:6px;background:#505154"></div></div>
<div style="left:1184px;top:58px;width:31px;height:57px;background:#939496;border:1px solid #dfe0e3;overflow:hidden"><div style="left:14px;top:0px;width:1px;height:57px;background:#6e6f71"></div><div style="left:8px;top:10px;width:7px;height:6px;background:#505154"></div><div style="left:25px;top:10px;width:4px;height:6px;background:#505154"></div><div style="left:0px;top:22px;width:29px;height:6px;background:#505154"></div><div style="left:6px;top:30px;width:7px;height:6px;background:#505154"></div><div style="left:23px;top:30px;width:6px;height:6px;background:#505154"></div><div style="left:0px;top:42px;width:6px;height:3px;background:#505154"></div><div style="left:14px;top:42px;width:7px;height:3px;background:#505154"></div><div style="left:0px;top:45px;width:29px;height:6px;background:#505154"></div></div>
<div style="left:696px;top:120px;width:62px;height:57px;background:#939496;border:1px solid #dfe0e3;overflow:hidden"><div style="left:0;top:0;width:60px;height:17px;background:rgba(255,255,255,.045)"></div><div style="left:4px;top:26px;width:6px;height:5px;background:#505154"></div><div style="left:20px;top:26px;width:6px;height:5px;background:#505154"></div><div style="left:35px;top:24px;width:6px;height:8px;background:#505154"></div><div style="left:51px;top:26px;width:6px;height:5px;background:#505154"></div><div style="left:4px;top:32px;width:6px;height:5px;background:#505154"></div><div style="left:0px;top:41px;width:60px;height:4px;background:#505154"></div><div style="left:3px;top:44px;width:6px;height:3px;background:#505154"></div><div style="left:17px;top:44px;width:6px;height:3px;background:#505154"></div><div style="left:34px;top:44px;width:6px;height:3px;background:#505154"></div><div style="left:52px;top:44px;width:6px;height:3px;background:#505154"></div><div style="left:0px;top:50px;width:5px;height:4px;background:#505154"></div><div style="left:6px;top:50px;width:5px;height:4px;background:#505154"></div><div style="left:12px;top:50px;width:5px;height:4px;background:#505154"></div><div style="left:18px;top:50px;width:5px;height:4px;background:#505154"></div><div style="left:24px;top:50px;width:5px;height:4px;background:#505154"></div><div style="left:30px;top:50px;width:5px;height:4px;background:#505154"></div><div style="left:36px;top:50px;width:5px;height:4px;background:#505154"></div><div style="left:42px;top:50px;width:5px;height:4px;background:#505154"></div><div style="left:48px;top:50px;width:5px;height:4px;background:#505154"></div><div style="left:54px;top:50px;width:5px;height:4px;background:#505154"></div><div class="t" style="left:3px;top:4px;font-size:11px;font-weight:bold;letter-spacing:-0.3px;color:#0a0a0a">Groove Agent</div></div>
<div style="left:759px;top:120px;width:62px;height:57px;background:#939496;border:1px solid #dfe0e3;overflow:hidden"><div style="left:0;top:0;width:60px;height:17px;background:rgba(255,255,255,.045)"></div><div style="left:21px;top:21px;width:5px;height:4px;background:#505154"></div><div style="left:28px;top:27px;width:5px;height:4px;background:#505154"></div><div style="left:43px;top:27px;width:5px;height:4px;background:#505154"></div><div style="left:12px;top:27px;width:5px;height:4px;background:#505154"></div><div style="left:0px;top:31px;width:6px;height:3px;background:#505154"></div><div style="left:6px;top:27px;width:6px;height:3px;background:#505154"></div><div style="left:12px;top:30px;width:6px;height:3px;background:#505154"></div><div style="left:18px;top:31px;width:6px;height:3px;background:#505154"></div><div style="left:24px;top:31px;width:6px;height:3px;background:#505154"></div><div style="left:30px;top:27px;width:6px;height:3px;background:#505154"></div><div style="left:36px;top:31px;width:6px;height:3px;background:#505154"></div><div style="left:42px;top:27px;width:6px;height:3px;background:#505154"></div><div style="left:48px;top:31px;width:6px;height:3px;background:#505154"></div><div style="left:54px;top:33px;width:6px;height:3px;background:#505154"></div><div style="left:0px;top:32px;width:60px;height:4px;background:#505154"></div><div style="left:20px;top:36px;width:5px;height:3px;background:#505154"></div><div style="left:35px;top:36px;width:5px;height:3px;background:#505154"></div><div style="left:52px;top:36px;width:5px;height:3px;background:#505154"></div><div style="left:4px;top:45px;width:5px;height:4px;background:#505154"></div><div style="left:20px;top:45px;width:5px;height:4px;background:#505154"></div><div style="left:35px;top:45px;width:5px;height:4px;background:#505154"></div><div style="left:51px;top:45px;width:5px;height:4px;background:#505154"></div><div style="left:0px;top:50px;width:5px;height:4px;background:#505154"></div><div style="left:6px;top:50px;width:5px;height:4px;background:#505154"></div><div style="left:12px;top:50px;width:5px;height:4px;background:#505154"></div><div style="left:18px;top:50px;width:5px;height:4px;background:#505154"></div><div style="left:24px;top:50px;width:5px;height:4px;background:#505154"></div><div style="left:30px;top:50px;width:5px;height:4px;background:#505154"></div><div style="left:36px;top:50px;width:5px;height:4px;background:#505154"></div><div style="left:42px;top:50px;width:5px;height:4px;background:#505154"></div><div style="left:48px;top:50px;width:5px;height:4px;background:#505154"></div><div style="left:54px;top:50px;width:5px;height:4px;background:#505154"></div><div class="t" style="left:3px;top:4px;font-size:11px;font-weight:bold;letter-spacing:-0.3px;color:#0a0a0a">Groove Agent</div></div>
<div style="left:822px;top:120px;width:62px;height:57px;background:#939496;border:1px solid #dfe0e3;overflow:hidden"><div style="left:0;top:0;width:60px;height:17px;background:rgba(255,255,255,.045)"></div><div style="left:21px;top:21px;width:5px;height:4px;background:#505154"></div><div style="left:28px;top:27px;width:5px;height:4px;background:#505154"></div><div style="left:43px;top:27px;width:5px;height:4px;background:#505154"></div><div style="left:12px;top:27px;width:5px;height:4px;background:#505154"></div><div style="left:0px;top:33px;width:6px;height:3px;background:#505154"></div><div style="left:6px;top:27px;width:6px;height:3px;background:#505154"></div><div style="left:12px;top:31px;width:6px;height:3px;background:#505154"></div><div style="left:18px;top:33px;width:6px;height:3px;background:#505154"></div><div style="left:24px;top:33px;width:6px;height:3px;background:#505154"></div><div style="left:30px;top:31px;width:6px;height:3px;background:#505154"></div><div style="left:36px;top:27px;width:6px;height:3px;background:#505154"></div><div style="left:42px;top:33px;width:6px;height:3px;background:#505154"></div><div style="left:48px;top:31px;width:6px;height:3px;background:#505154"></div><div style="left:54px;top:31px;width:6px;height:3px;background:#505154"></div><div style="left:0px;top:32px;width:60px;height:4px;background:#505154"></div><div style="left:20px;top:36px;width:5px;height:3px;background:#505154"></div><div style="left:35px;top:36px;width:5px;height:3px;background:#505154"></div><div style="left:52px;top:36px;width:5px;height:3px;background:#505154"></div><div style="left:4px;top:45px;width:5px;height:4px;background:#505154"></div><div style="left:20px;top:45px;width:5px;height:4px;background:#505154"></div><div style="left:35px;top:45px;width:5px;height:4px;background:#505154"></div><div style="left:51px;top:45px;width:5px;height:4px;background:#505154"></div><div style="left:0px;top:50px;width:5px;height:4px;background:#505154"></div><div style="left:12px;top:50px;width:5px;height:4px;background:#505154"></div><div style="left:18px;top:50px;width:5px;height:4px;background:#505154"></div><div style="left:24px;top:50px;width:5px;height:4px;background:#505154"></div><div style="left:30px;top:50px;width:5px;height:4px;background:#505154"></div><div style="left:42px;top:50px;width:5px;height:4px;background:#505154"></div><div style="left:48px;top:50px;width:5px;height:4px;background:#505154"></div><div style="left:54px;top:50px;width:5px;height:4px;background:#505154"></div><div class="t" style="left:3px;top:4px;font-size:11px;font-weight:bold;letter-spacing:-0.3px;color:#0a0a0a">Groove Agent</div></div>
<div style="left:885px;top:120px;width:30px;height:57px;background:#939496;border:1px solid #dfe0e3;overflow:hidden"><div style="left:8px;top:10px;width:7px;height:6px;background:#505154"></div><div style="left:0px;top:22px;width:28px;height:6px;background:#505154"></div><div style="left:0px;top:42px;width:28px;height:9px;background:#505154"></div><div style="left:6px;top:41px;width:1px;height:3px;background:#939496"></div><div style="left:14px;top:41px;width:1px;height:3px;background:#939496"></div><div style="left:22px;top:41px;width:1px;height:3px;background:#939496"></div><div style="left:9px;top:47px;width:3px;height:4px;background:#939496"></div></div>
<div style="left:916px;top:120px;width:31px;height:57px;background:#939496;border:1px solid #dfe0e3;overflow:hidden"><div style="left:8px;top:10px;width:7px;height:6px;background:#505154"></div><div style="left:0px;top:22px;width:29px;height:6px;background:#505154"></div><div style="left:0px;top:42px;width:29px;height:9px;background:#505154"></div><div style="left:6px;top:41px;width:1px;height:3px;background:#939496"></div><div style="left:14px;top:41px;width:1px;height:3px;background:#939496"></div><div style="left:22px;top:41px;width:1px;height:3px;background:#939496"></div><div style="left:9px;top:47px;width:3px;height:4px;background:#939496"></div></div>
<div style="left:948px;top:120px;width:30px;height:57px;background:#939496;border:1px solid #dfe0e3;overflow:hidden"><div style="left:8px;top:10px;width:7px;height:6px;background:#505154"></div><div style="left:0px;top:22px;width:28px;height:6px;background:#505154"></div><div style="left:0px;top:42px;width:28px;height:9px;background:#505154"></div><div style="left:6px;top:41px;width:1px;height:3px;background:#939496"></div><div style="left:14px;top:41px;width:1px;height:3px;background:#939496"></div><div style="left:22px;top:41px;width:1px;height:3px;background:#939496"></div><div style="left:9px;top:47px;width:3px;height:4px;background:#939496"></div></div>
<div style="left:1216px;top:120px;width:30px;height:57px;background:#939496;border:1px solid #dfe0e3;overflow:hidden"><div style="left:8px;top:10px;width:7px;height:6px;background:#505154"></div><div style="left:24px;top:10px;width:4px;height:6px;background:#505154"></div><div style="left:0px;top:22px;width:28px;height:6px;background:#505154"></div><div style="left:6px;top:30px;width:7px;height:6px;background:#505154"></div><div style="left:22px;top:30px;width:6px;height:6px;background:#505154"></div><div style="left:0px;top:42px;width:6px;height:3px;background:#505154"></div><div style="left:14px;top:42px;width:7px;height:3px;background:#505154"></div><div style="left:0px;top:45px;width:28px;height:6px;background:#505154"></div></div>
<div style="left:1247px;top:120px;width:62px;height:57px;background:#939496;border:1px solid #dfe0e3;overflow:hidden"><div style="left:0;top:0;width:60px;height:17px;background:rgba(255,255,255,.045)"></div><div style="left:14px;top:17px;width:1px;height:40px;background:#6e6f71"></div><div style="left:21px;top:21px;width:5px;height:4px;background:#505154"></div><div style="left:28px;top:27px;width:5px;height:4px;background:#505154"></div><div style="left:43px;top:27px;width:5px;height:4px;background:#505154"></div><div style="left:12px;top:27px;width:5px;height:4px;background:#505154"></div><div style="left:0px;top:33px;width:6px;height:3px;background:#505154"></div><div style="left:6px;top:27px;width:6px;height:3px;background:#505154"></div><div style="left:12px;top:31px;width:6px;height:3px;background:#505154"></div><div style="left:18px;top:33px;width:6px;height:3px;background:#505154"></div><div style="left:24px;top:31px;width:6px;height:3px;background:#505154"></div><div style="left:30px;top:33px;width:6px;height:3px;background:#505154"></div><div style="left:36px;top:31px;width:6px;height:3px;background:#505154"></div><div style="left:42px;top:30px;width:6px;height:3px;background:#505154"></div><div style="left:48px;top:27px;width:6px;height:3px;background:#505154"></div><div style="left:54px;top:31px;width:6px;height:3px;background:#505154"></div><div style="left:0px;top:32px;width:60px;height:4px;background:#505154"></div><div style="left:20px;top:36px;width:5px;height:3px;background:#505154"></div><div style="left:35px;top:36px;width:5px;height:3px;background:#505154"></div><div style="left:52px;top:36px;width:5px;height:3px;background:#505154"></div><div style="left:4px;top:45px;width:5px;height:4px;background:#505154"></div><div style="left:20px;top:45px;width:5px;height:4px;background:#505154"></div><div style="left:35px;top:45px;width:5px;height:4px;background:#505154"></div><div style="left:51px;top:45px;width:5px;height:4px;background:#505154"></div><div style="left:0px;top:50px;width:5px;height:4px;background:#505154"></div><div style="left:6px;top:50px;width:5px;height:4px;background:#505154"></div><div style="left:12px;top:50px;width:5px;height:4px;background:#505154"></div><div style="left:18px;top:50px;width:5px;height:4px;background:#505154"></div><div style="left:24px;top:50px;width:5px;height:4px;background:#505154"></div><div style="left:30px;top:50px;width:5px;height:4px;background:#505154"></div><div style="left:36px;top:50px;width:5px;height:4px;background:#505154"></div><div style="left:42px;top:50px;width:5px;height:4px;background:#505154"></div><div style="left:48px;top:50px;width:5px;height:4px;background:#505154"></div><div style="left:54px;top:50px;width:5px;height:4px;background:#505154"></div><div class="t" style="left:3px;top:4px;font-size:11px;font-weight:bold;letter-spacing:-0.3px;color:#0a0a0a">Groove Agent</div></div>
<div style="left:1310px;top:120px;width:62px;height:57px;background:#939496;border:1px solid #dfe0e3;overflow:hidden"><div style="left:0;top:0;width:60px;height:17px;background:rgba(255,255,255,.045)"></div><div style="left:14px;top:17px;width:1px;height:40px;background:#6e6f71"></div><div style="left:21px;top:21px;width:5px;height:4px;background:#505154"></div><div style="left:28px;top:27px;width:5px;height:4px;background:#505154"></div><div style="left:43px;top:27px;width:5px;height:4px;background:#505154"></div><div style="left:12px;top:27px;width:5px;height:4px;background:#505154"></div><div style="left:0px;top:31px;width:6px;height:3px;background:#505154"></div><div style="left:6px;top:31px;width:6px;height:3px;background:#505154"></div><div style="left:12px;top:33px;width:6px;height:3px;background:#505154"></div><div style="left:18px;top:30px;width:6px;height:3px;background:#505154"></div><div style="left:24px;top:31px;width:6px;height:3px;background:#505154"></div><div style="left:30px;top:30px;width:6px;height:3px;background:#505154"></div><div style="left:36px;top:31px;width:6px;height:3px;background:#505154"></div><div style="left:42px;top:31px;width:6px;height:3px;background:#505154"></div><div style="left:48px;top:31px;width:6px;height:3px;background:#505154"></div><div style="left:54px;top:27px;width:6px;height:3px;background:#505154"></div><div style="left:0px;top:32px;width:60px;height:4px;background:#505154"></div><div style="left:20px;top:36px;width:5px;height:3px;background:#505154"></div><div style="left:35px;top:36px;width:5px;height:3px;background:#505154"></div><div style="left:52px;top:36px;width:5px;height:3px;background:#505154"></div><div style="left:4px;top:45px;width:5px;height:4px;background:#505154"></div><div style="left:20px;top:45px;width:5px;height:4px;background:#505154"></div><div style="left:35px;top:45px;width:5px;height:4px;background:#505154"></div><div style="left:51px;top:45px;width:5px;height:4px;background:#505154"></div><div style="left:0px;top:50px;width:5px;height:4px;background:#505154"></div><div style="left:12px;top:50px;width:5px;height:4px;background:#505154"></div><div style="left:18px;top:50px;width:5px;height:4px;background:#505154"></div><div style="left:24px;top:50px;width:5px;height:4px;background:#505154"></div><div style="left:30px;top:50px;width:5px;height:4px;background:#505154"></div><div style="left:36px;top:50px;width:5px;height:4px;background:#505154"></div><div style="left:42px;top:50px;width:5px;height:4px;background:#505154"></div><div style="left:48px;top:50px;width:5px;height:4px;background:#505154"></div><div style="left:54px;top:50px;width:5px;height:4px;background:#505154"></div><div class="t" style="left:3px;top:4px;font-size:11px;font-weight:bold;letter-spacing:-0.3px;color:#0a0a0a">Groove Agent</div></div>
<div style="left:1373px;top:120px;width:31px;height:57px;background:#939496;border:1px solid #dfe0e3;overflow:hidden"><div style="left:14px;top:0px;width:1px;height:57px;background:#6e6f71"></div><div style="left:8px;top:10px;width:7px;height:6px;background:#505154"></div><div style="left:0px;top:22px;width:29px;height:6px;background:#505154"></div><div style="left:0px;top:42px;width:29px;height:9px;background:#505154"></div><div style="left:6px;top:41px;width:1px;height:3px;background:#939496"></div><div style="left:14px;top:41px;width:1px;height:3px;background:#939496"></div><div style="left:22px;top:41px;width:1px;height:3px;background:#939496"></div><div style="left:9px;top:47px;width:3px;height:4px;background:#939496"></div></div>
<div style="left:1405px;top:120px;width:30px;height:57px;background:#939496;border:1px solid #dfe0e3;overflow:hidden"><div style="left:8px;top:10px;width:7px;height:6px;background:#505154"></div><div style="left:0px;top:22px;width:28px;height:6px;background:#505154"></div><div style="left:0px;top:42px;width:28px;height:9px;background:#505154"></div><div style="left:6px;top:41px;width:1px;height:3px;background:#939496"></div><div style="left:14px;top:41px;width:1px;height:3px;background:#939496"></div><div style="left:22px;top:41px;width:1px;height:3px;background:#939496"></div><div style="left:9px;top:47px;width:3px;height:4px;background:#939496"></div></div>
<div style="left:1436px;top:120px;width:31px;height:57px;background:#939496;border:1px solid #dfe0e3;overflow:hidden"><div style="left:14px;top:0px;width:1px;height:57px;background:#6e6f71"></div><div style="left:8px;top:10px;width:7px;height:6px;background:#505154"></div><div style="left:0px;top:22px;width:29px;height:6px;background:#505154"></div><div style="left:0px;top:42px;width:29px;height:9px;background:#505154"></div><div style="left:6px;top:41px;width:1px;height:3px;background:#939496"></div><div style="left:14px;top:41px;width:1px;height:3px;background:#939496"></div><div style="left:22px;top:41px;width:1px;height:3px;background:#939496"></div><div style="left:9px;top:47px;width:3px;height:4px;background:#939496"></div></div>
<div style="left:389px;top:430px;width:7px;height:57px;background:#dde0e5;border:1px solid #f4f6f8;overflow:hidden"><div style="left:1px;top:13px;width:4px;height:3px;background:#3a3c40"></div><div style="left:3px;top:10px;width:2px;height:3px;background:#3a3c40"></div></div>
<div style="left:397px;top:430px;width:6px;height:57px;background:#dde0e5;border:1px solid #f4f6f8;overflow:hidden"><div style="left:0;top:0;right:0;bottom:0;background-image:repeating-linear-gradient(45deg,rgba(0,0,0,0) 0 3.4px,rgba(60,60,60,.30) 3.4px 4.6px)"></div><div style="left:1px;top:13px;width:3px;height:3px;background:#3a3c40"></div><div style="left:2px;top:10px;width:2px;height:3px;background:#3a3c40"></div></div>
<div style="left:404px;top:430px;width:7px;height:57px;background:#dde0e5;border:1px solid #f4f6f8;overflow:hidden"><div style="left:1px;top:13px;width:4px;height:3px;background:#3a3c40"></div><div style="left:3px;top:10px;width:2px;height:3px;background:#3a3c40"></div></div>
<div style="left:412px;top:430px;width:15px;height:57px;background:#dde0e5;border:1px solid #f4f6f8;overflow:hidden"><div style="left:1px;top:13px;width:12px;height:3px;background:#3a3c40"></div><div style="left:11px;top:10px;width:2px;height:3px;background:#3a3c40"></div></div>
<div style="left:428px;top:430px;width:15px;height:57px;background:#dde0e5;border:1px solid #f4f6f8;overflow:hidden"><div style="left:1px;top:7px;width:12px;height:5px;background:#3a3c40"></div><div style="left:1px;top:14px;width:5px;height:5px;background:#3a3c40"></div><div style="left:8px;top:14px;width:5px;height:5px;background:#3a3c40"></div><div style="left:1px;top:21px;width:12px;height:5px;background:#3a3c40"></div><div style="left:4px;top:31px;width:7px;height:5px;background:#3a3c40"></div></div>
<div style="left:444px;top:430px;width:15px;height:57px;background:#939496;border:1px solid #dfe0e3;overflow:hidden"><div style="left:1px;top:13px;width:12px;height:3px;background:#505154"></div><div style="left:11px;top:10px;width:2px;height:3px;background:#505154"></div></div>
<div style="left:460px;top:430px;width:6px;height:57px;background:#939496;border:1px solid #dfe0e3;overflow:hidden"><div style="left:1px;top:13px;width:3px;height:3px;background:#505154"></div><div style="left:2px;top:10px;width:2px;height:3px;background:#505154"></div></div>
<div style="left:467px;top:430px;width:7px;height:57px;background:#939496;border:1px solid #dfe0e3;overflow:hidden"><div style="left:1px;top:13px;width:4px;height:3px;background:#505154"></div><div style="left:3px;top:10px;width:2px;height:3px;background:#505154"></div></div>
<div style="left:475px;top:430px;width:31px;height:57px;background:#939496;border:1px solid #dfe0e3;overflow:hidden"><div style="left:0;top:0;width:29px;height:17px;background:rgba(255,255,255,.045)"></div><div style="left:13px;top:21px;width:8px;height:3px;background:#505154"></div><div style="left:20px;top:23px;width:5px;height:4px;background:#505154"></div><div style="left:17px;top:25px;width:5px;height:3px;background:#505154"></div><div class="t" style="left:3px;top:4px;font-size:11px;font-weight:bold;letter-spacing:-0.3px;color:#0a0a0a">AGG2 01</div></div>
<div style="left:507px;top:430px;width:30px;height:57px;background:#939496;border:1px solid #dfe0e3;overflow:hidden"><div style="left:0;top:0;width:28px;height:17px;background:rgba(255,255,255,.045)"></div><div style="left:12px;top:21px;width:8px;height:3px;background:#505154"></div><div style="left:19px;top:23px;width:5px;height:4px;background:#505154"></div><div style="left:16px;top:25px;width:5px;height:3px;background:#505154"></div><div class="t" style="left:3px;top:4px;font-size:11px;font-weight:bold;letter-spacing:-0.3px;color:#0a0a0a">AGG2 01</div></div>
<div style="left:538px;top:430px;width:31px;height:57px;background:#939496;border:1px solid #dfe0e3;overflow:hidden"><div style="left:0;top:0;width:29px;height:17px;background:rgba(255,255,255,.045)"></div><div style="left:13px;top:21px;width:8px;height:3px;background:#505154"></div><div style="left:20px;top:23px;width:5px;height:4px;background:#505154"></div><div style="left:17px;top:25px;width:5px;height:3px;background:#505154"></div><div class="t" style="left:3px;top:4px;font-size:11px;font-weight:bold;letter-spacing:-0.3px;color:#0a0a0a">AGG2 01</div></div>
<div style="left:570px;top:430px;width:30px;height:57px;background:#939496;border:1px solid #dfe0e3;overflow:hidden"><div style="left:0;top:0;width:28px;height:17px;background:rgba(255,255,255,.045)"></div><div style="left:12px;top:21px;width:8px;height:3px;background:#505154"></div><div style="left:19px;top:23px;width:5px;height:4px;background:#505154"></div><div style="left:16px;top:25px;width:5px;height:3px;background:#505154"></div><div class="t" style="left:3px;top:4px;font-size:11px;font-weight:bold;letter-spacing:-0.3px;color:#0a0a0a">AGG2 01</div></div>
<div style="left:601px;top:430px;width:31px;height:57px;background:#939496;border:1px solid #dfe0e3;overflow:hidden"><div style="left:0;top:0;width:29px;height:17px;background:rgba(255,255,255,.045)"></div><div style="left:13px;top:21px;width:8px;height:3px;background:#505154"></div><div style="left:20px;top:23px;width:5px;height:4px;background:#505154"></div><div style="left:17px;top:25px;width:5px;height:3px;background:#505154"></div><div class="t" style="left:3px;top:4px;font-size:11px;font-weight:bold;letter-spacing:-0.3px;color:#0a0a0a">AGG2 01</div></div>
<div style="left:633px;top:430px;width:30px;height:57px;background:#939496;border:1px solid #dfe0e3;overflow:hidden"><div style="left:0;top:0;width:28px;height:17px;background:rgba(255,255,255,.045)"></div><div style="left:12px;top:21px;width:8px;height:3px;background:#505154"></div><div style="left:19px;top:23px;width:5px;height:4px;background:#505154"></div><div style="left:16px;top:25px;width:5px;height:3px;background:#505154"></div><div class="t" style="left:3px;top:4px;font-size:11px;font-weight:bold;letter-spacing:-0.3px;color:#0a0a0a">AGG2 01</div></div>
<div style="left:664px;top:430px;width:31px;height:57px;background:#939496;border:1px solid #dfe0e3;overflow:hidden"><div style="left:0;top:0;width:29px;height:17px;background:rgba(255,255,255,.045)"></div><div style="left:13px;top:21px;width:8px;height:3px;background:#505154"></div><div style="left:20px;top:23px;width:5px;height:4px;background:#505154"></div><div style="left:17px;top:25px;width:5px;height:3px;background:#505154"></div><div class="t" style="left:3px;top:4px;font-size:11px;font-weight:bold;letter-spacing:-0.3px;color:#0a0a0a">AGG2 01</div></div>
<div style="left:696px;top:430px;width:30px;height:57px;background:#939496;border:1px solid #dfe0e3;overflow:hidden"><div style="left:0;top:0;width:28px;height:17px;background:rgba(255,255,255,.045)"></div><div style="left:12px;top:21px;width:8px;height:3px;background:#505154"></div><div style="left:19px;top:23px;width:5px;height:4px;background:#505154"></div><div style="left:16px;top:25px;width:5px;height:3px;background:#505154"></div><div class="t" style="left:3px;top:4px;font-size:11px;font-weight:bold;letter-spacing:-0.3px;color:#0a0a0a">AGG2 01</div></div>
<div style="left:727px;top:430px;width:31px;height:57px;background:#939496;border:1px solid #dfe0e3;overflow:hidden"><div style="left:0;top:0;width:29px;height:17px;background:rgba(255,255,255,.045)"></div><div style="left:13px;top:21px;width:8px;height:3px;background:#505154"></div><div style="left:20px;top:23px;width:5px;height:4px;background:#505154"></div><div style="left:17px;top:25px;width:5px;height:3px;background:#505154"></div><div class="t" style="left:3px;top:4px;font-size:11px;font-weight:bold;letter-spacing:-0.3px;color:#0a0a0a">AGG2 01</div></div>
<div style="left:389px;top:492px;width:7px;height:57px;background:#dde0e5;border:1px solid #f4f6f8;overflow:hidden"><div style="left:1px;top:13px;width:4px;height:3px;background:#3a3c40"></div><div style="left:3px;top:10px;width:2px;height:3px;background:#3a3c40"></div></div>
<div style="left:397px;top:492px;width:6px;height:57px;background:#dde0e5;border:1px solid #f4f6f8;overflow:hidden"><div style="left:0;top:0;right:0;bottom:0;background-image:repeating-linear-gradient(45deg,rgba(0,0,0,0) 0 3.4px,rgba(60,60,60,.30) 3.4px 4.6px)"></div><div style="left:1px;top:13px;width:3px;height:3px;background:#3a3c40"></div><div style="left:2px;top:10px;width:2px;height:3px;background:#3a3c40"></div></div>
<div style="left:404px;top:492px;width:7px;height:57px;background:#dde0e5;border:1px solid #f4f6f8;overflow:hidden"><div style="left:1px;top:13px;width:4px;height:3px;background:#3a3c40"></div><div style="left:3px;top:10px;width:2px;height:3px;background:#3a3c40"></div></div>
<div style="left:412px;top:492px;width:15px;height:57px;background:#dde0e5;border:1px solid #f4f6f8;overflow:hidden"><div style="left:1px;top:13px;width:12px;height:3px;background:#3a3c40"></div><div style="left:11px;top:10px;width:2px;height:3px;background:#3a3c40"></div></div>
<div style="left:428px;top:492px;width:15px;height:57px;background:#dde0e5;border:1px solid #f4f6f8;overflow:hidden"><div style="left:1px;top:7px;width:12px;height:5px;background:#3a3c40"></div><div style="left:1px;top:14px;width:5px;height:5px;background:#3a3c40"></div><div style="left:8px;top:14px;width:5px;height:5px;background:#3a3c40"></div><div style="left:1px;top:21px;width:12px;height:5px;background:#3a3c40"></div><div style="left:4px;top:31px;width:7px;height:5px;background:#3a3c40"></div></div>
<div style="left:444px;top:492px;width:15px;height:57px;background:#939496;border:1px solid #dfe0e3;overflow:hidden"><div style="left:0;top:0;right:0;bottom:0;background-image:repeating-linear-gradient(45deg,rgba(0,0,0,0) 0 3.4px,rgba(60,60,60,.30) 3.4px 4.6px)"></div><div style="left:1px;top:13px;width:12px;height:3px;background:#505154"></div><div style="left:11px;top:10px;width:2px;height:3px;background:#505154"></div></div>
<div style="left:460px;top:492px;width:6px;height:57px;background:#939496;border:1px solid #dfe0e3;overflow:hidden"><div style="left:1px;top:13px;width:3px;height:3px;background:#505154"></div><div style="left:2px;top:10px;width:2px;height:3px;background:#505154"></div></div>
<div style="left:467px;top:492px;width:7px;height:57px;background:#939496;border:1px solid #dfe0e3;overflow:hidden"><div style="left:1px;top:13px;width:4px;height:3px;background:#505154"></div><div style="left:3px;top:10px;width:2px;height:3px;background:#505154"></div></div>
<div style="left:475px;top:492px;width:31px;height:57px;background:#939496;border:1px solid #dfe0e3;overflow:hidden"><div style="left:0;top:0;width:29px;height:17px;background:rgba(255,255,255,.045)"></div><div style="left:13px;top:21px;width:8px;height:3px;background:#505154"></div><div style="left:20px;top:23px;width:5px;height:4px;background:#505154"></div><div style="left:17px;top:25px;width:5px;height:3px;background:#505154"></div><div class="t" style="left:3px;top:4px;font-size:11px;font-weight:bold;letter-spacing:-0.3px;color:#0a0a0a">AGG2 01</div></div>
<div style="left:507px;top:492px;width:30px;height:57px;background:#939496;border:1px solid #dfe0e3;overflow:hidden"><div style="left:0;top:0;width:28px;height:17px;background:rgba(255,255,255,.045)"></div><div style="left:12px;top:21px;width:8px;height:3px;background:#505154"></div><div style="left:19px;top:23px;width:5px;height:4px;background:#505154"></div><div style="left:16px;top:25px;width:5px;height:3px;background:#505154"></div><div class="t" style="left:3px;top:4px;font-size:11px;font-weight:bold;letter-spacing:-0.3px;color:#0a0a0a">AGG2 01</div></div>
<div style="left:538px;top:492px;width:31px;height:57px;background:#939496;border:1px solid #dfe0e3;overflow:hidden"><div style="left:0;top:0;width:29px;height:17px;background:rgba(255,255,255,.045)"></div><div style="left:13px;top:21px;width:8px;height:3px;background:#505154"></div><div style="left:20px;top:23px;width:5px;height:4px;background:#505154"></div><div style="left:17px;top:25px;width:5px;height:3px;background:#505154"></div><div class="t" style="left:3px;top:4px;font-size:11px;font-weight:bold;letter-spacing:-0.3px;color:#0a0a0a">AGG2 01</div></div>
<div style="left:570px;top:492px;width:30px;height:57px;background:#939496;border:1px solid #dfe0e3;overflow:hidden"><div style="left:0;top:0;width:28px;height:17px;background:rgba(255,255,255,.045)"></div><div style="left:12px;top:21px;width:8px;height:3px;background:#505154"></div><div style="left:19px;top:23px;width:5px;height:4px;background:#505154"></div><div style="left:16px;top:25px;width:5px;height:3px;background:#505154"></div><div class="t" style="left:3px;top:4px;font-size:11px;font-weight:bold;letter-spacing:-0.3px;color:#0a0a0a">AGG2 01</div></div>
<div style="left:601px;top:492px;width:31px;height:57px;background:#939496;border:1px solid #dfe0e3;overflow:hidden"><div style="left:0;top:0;width:29px;height:17px;background:rgba(255,255,255,.045)"></div><div style="left:13px;top:21px;width:8px;height:3px;background:#505154"></div><div style="left:20px;top:23px;width:5px;height:4px;background:#505154"></div><div style="left:17px;top:25px;width:5px;height:3px;background:#505154"></div><div class="t" style="left:3px;top:4px;font-size:11px;font-weight:bold;letter-spacing:-0.3px;color:#0a0a0a">AGG2 01</div></div>
<div style="left:633px;top:492px;width:30px;height:57px;background:#939496;border:1px solid #dfe0e3;overflow:hidden"><div style="left:0;top:0;width:28px;height:17px;background:rgba(255,255,255,.045)"></div><div style="left:12px;top:21px;width:8px;height:3px;background:#505154"></div><div style="left:19px;top:23px;width:5px;height:4px;background:#505154"></div><div style="left:16px;top:25px;width:5px;height:3px;background:#505154"></div><div class="t" style="left:3px;top:4px;font-size:11px;font-weight:bold;letter-spacing:-0.3px;color:#0a0a0a">AGG2 01</div></div>
<div style="left:664px;top:492px;width:31px;height:57px;background:#939496;border:1px solid #dfe0e3;overflow:hidden"><div style="left:0;top:0;width:29px;height:17px;background:rgba(255,255,255,.045)"></div><div style="left:13px;top:21px;width:8px;height:3px;background:#505154"></div><div style="left:20px;top:23px;width:5px;height:4px;background:#505154"></div><div style="left:17px;top:25px;width:5px;height:3px;background:#505154"></div><div class="t" style="left:3px;top:4px;font-size:11px;font-weight:bold;letter-spacing:-0.3px;color:#0a0a0a">AGG2 01</div></div>
<div style="left:696px;top:492px;width:30px;height:57px;background:#939496;border:1px solid #dfe0e3;overflow:hidden"><div style="left:0;top:0;width:28px;height:17px;background:rgba(255,255,255,.045)"></div><div style="left:12px;top:21px;width:8px;height:3px;background:#505154"></div><div style="left:19px;top:23px;width:5px;height:4px;background:#505154"></div><div style="left:16px;top:25px;width:5px;height:3px;background:#505154"></div><div class="t" style="left:3px;top:4px;font-size:11px;font-weight:bold;letter-spacing:-0.3px;color:#0a0a0a">AGG2 01</div></div>
<div style="left:727px;top:492px;width:31px;height:57px;background:#939496;border:1px solid #dfe0e3;overflow:hidden"><div style="left:0;top:0;width:29px;height:17px;background:rgba(255,255,255,.045)"></div><div style="left:13px;top:21px;width:8px;height:3px;background:#505154"></div><div style="left:20px;top:23px;width:5px;height:4px;background:#505154"></div><div style="left:17px;top:25px;width:5px;height:3px;background:#505154"></div><div class="t" style="left:3px;top:4px;font-size:11px;font-weight:bold;letter-spacing:-0.3px;color:#0a0a0a">AGG2 01</div></div>
<div style="left:744px;top:554px;width:101px;height:57px;background:#939496;border:1px solid #dfe0e3;overflow:hidden"><div style="left:13px;top:0px;width:1px;height:57px;background:#6e6f71"></div><div style="left:76px;top:0px;width:1px;height:57px;background:#6e6f71"></div><svg style="left:0;top:0" width="101" height="57"><path d="M0 29.5H101" stroke="#151515" stroke-width="1.2"/><path d="M0.0,29.5 L1.2,29.5 L2.4,29.5 L3.6,29.5 L4.8,29.5 L6.0,27.5 L7.2,25.2 L8.4,25.9 L9.6,26.8 L10.8,27.9 L12.0,28.8 L13.2,24.3 L14.4,25.1 L15.6,27.4 L16.8,25.6 L18.0,28.2 L19.2,28.5 L20.4,26.7 L21.6,28.0 L22.8,27.5 L24.0,28.2 L25.2,27.5 L26.4,28.1 L27.6,28.5 L28.8,29.5 L30.0,29.5 L31.2,29.5 L32.4,29.5 L33.6,29.5 L34.8,29.5 L36.0,29.5 L37.2,29.5 L38.4,29.5 L39.6,29.5 L40.8,28.7 L42.0,26.9 L43.2,27.7 L44.4,28.3 L45.6,27.0 L46.8,27.8 L48.0,26.4 L49.2,27.5 L50.4,27.6 L51.6,28.7 L52.8,27.0 L54.0,27.2 L55.2,28.4 L56.4,28.0 L57.6,28.8 L58.8,28.4 L60.0,28.5 L61.2,28.7 L62.4,29.0 L63.6,29.2 L64.8,29.5 L66.0,29.5 L67.2,26.3 L68.4,25.1 L69.6,27.0 L70.8,25.4 L72.0,27.0 L73.2,25.9 L74.4,26.4 L75.6,26.5 L76.8,27.2 L78.0,28.5 L79.2,27.8 L80.4,27.9 L81.6,28.5 L82.8,28.7 L84.0,29.5 L85.2,29.5 L86.4,29.5 L87.6,29.5 L88.8,27.6 L90.0,26.9 L91.2,25.1 L92.4,27.4 L93.6,24.7 L94.8,27.6 L96.0,27.0 L97.2,27.0 L98.4,25.6 L99.6,27.7 L100.8,27.3 L100.8,32.6 L99.6,32.1 L98.4,31.2 L97.2,32.6 L96.0,31.2 L94.8,32.7 L93.6,33.8 L92.4,32.3 L91.2,33.8 L90.0,33.5 L88.8,31.4 L87.6,29.5 L86.4,29.5 L85.2,29.5 L84.0,29.5 L82.8,30.3 L81.6,30.9 L80.4,30.7 L79.2,30.8 L78.0,30.7 L76.8,30.9 L75.6,31.9 L74.4,32.5 L73.2,31.6 L72.0,33.1 L70.8,32.6 L69.6,33.0 L68.4,34.7 L67.2,31.4 L66.0,29.5 L64.8,29.5 L63.6,30.0 L62.4,30.3 L61.2,30.0 L60.0,30.7 L58.8,30.0 L57.6,30.4 L56.4,31.0 L55.2,31.6 L54.0,30.3 L52.8,31.5 L51.6,32.0 L50.4,32.3 L49.2,31.5 L48.0,32.2 L46.8,32.0 L45.6,32.4 L44.4,32.1 L43.2,32.7 L42.0,33.2 L40.8,29.9 L39.6,29.5 L38.4,29.5 L37.2,29.5 L36.0,29.5 L34.8,29.5 L33.6,29.5 L32.4,29.5 L31.2,29.5 L30.0,29.5 L28.8,29.5 L27.6,30.2 L26.4,30.4 L25.2,31.1 L24.0,31.7 L22.8,33.2 L21.6,33.1 L20.4,31.4 L19.2,30.5 L18.0,32.3 L16.8,32.7 L15.6,32.4 L14.4,35.0 L13.2,33.8 L12.0,30.4 L10.8,31.2 L9.6,31.3 L8.4,32.0 L7.2,33.1 L6.0,31.4 L4.8,29.5 L3.6,29.5 L2.4,29.5 L1.2,29.5 L0.0,29.5Z" fill="#5c5c5c" stroke="#161616" stroke-width="1"/></svg></div>
<div style="left:745px;top:555px;width:99px;height:17px;overflow:hidden"><div class="t" style="left:3px;top:3.5px;font-size:11px;font-weight:bold;color:#0a0a0a">Take 1 (Audio 01_01)</div></div>
<div style="left:972px;top:554px;width:140px;height:57px;background:#939496;border:1px solid #dfe0e3;overflow:hidden"><div style="left:37px;top:0px;width:1px;height:57px;background:#6e6f71"></div><div style="left:100px;top:0px;width:1px;height:57px;background:#6e6f71"></div><svg style="left:0;top:0" width="140" height="57"><path d="M0 29.5H140" stroke="#151515" stroke-width="1.2"/><path d="M0.0,29.5 L1.2,29.5 L2.4,29.5 L3.6,29.5 L4.8,29.5 L6.0,25.0 L7.2,26.2 L8.4,26.7 L9.6,27.3 L10.8,27.8 L12.0,25.7 L13.2,26.8 L14.4,26.8 L15.6,28.2 L16.8,26.1 L18.0,26.7 L19.2,27.5 L20.4,27.1 L21.6,28.0 L22.8,27.6 L24.0,27.7 L25.2,27.6 L26.4,28.0 L27.6,28.3 L28.8,28.1 L30.0,28.4 L31.2,28.6 L32.4,29.0 L33.6,29.0 L34.8,29.5 L36.0,29.5 L37.2,29.5 L38.4,29.5 L39.6,29.5 L40.8,29.5 L42.0,29.5 L43.2,29.5 L44.4,29.5 L45.6,25.7 L46.8,26.6 L48.0,25.8 L49.2,26.4 L50.4,27.1 L51.6,28.6 L52.8,24.6 L54.0,27.1 L55.2,27.3 L56.4,28.5 L57.6,27.6 L58.8,27.8 L60.0,27.9 L61.2,26.0 L62.4,26.7 L63.6,27.4 L64.8,27.7 L66.0,28.7 L67.2,29.5 L68.4,29.5 L69.6,29.5 L70.8,29.5 L72.0,29.5 L73.2,29.5 L74.4,29.5 L75.6,29.5 L76.8,29.5 L78.0,27.5 L79.2,25.9 L80.4,25.9 L81.6,26.6 L82.8,27.7 L84.0,27.9 L85.2,27.3 L86.4,27.2 L87.6,28.3 L88.8,27.5 L90.0,28.3 L91.2,28.2 L92.4,28.8 L93.6,28.8 L94.8,29.5 L96.0,28.0 L97.2,26.8 L98.4,26.5 L99.6,26.4 L100.8,26.5 L102.0,26.8 L103.2,27.2 L104.4,28.5 L105.6,28.3 L106.8,28.1 L108.0,26.0 L109.2,26.4 L110.4,26.9 L111.6,27.1 L112.8,26.7 L114.0,28.3 L115.2,27.5 L116.4,27.8 L117.6,28.3 L118.8,28.5 L120.0,29.1 L121.2,29.5 L122.4,28.5 L123.6,27.2 L124.8,28.1 L126.0,27.0 L127.2,26.7 L128.4,25.7 L129.6,26.2 L130.8,26.8 L132.0,26.2 L133.2,27.1 L134.4,26.4 L135.6,27.1 L136.8,27.4 L138.0,27.1 L139.2,27.4 L139.2,31.8 L138.0,32.3 L136.8,32.1 L135.6,32.3 L134.4,31.3 L133.2,32.7 L132.0,31.5 L130.8,32.5 L129.6,31.4 L128.4,32.4 L127.2,31.7 L126.0,31.7 L124.8,32.3 L123.6,33.2 L122.4,30.4 L121.2,29.5 L120.0,30.1 L118.8,30.5 L117.6,30.1 L116.4,31.5 L115.2,31.6 L114.0,31.2 L112.8,31.1 L111.6,31.7 L110.4,31.7 L109.2,33.0 L108.0,31.5 L106.8,30.7 L105.6,31.4 L104.4,30.9 L103.2,31.2 L102.0,31.6 L100.8,32.7 L99.6,32.9 L98.4,30.8 L97.2,33.1 L96.0,30.8 L94.8,29.5 L93.6,30.2 L92.4,30.3 L91.2,30.6 L90.0,31.0 L88.8,31.0 L87.6,31.0 L86.4,31.2 L85.2,30.7 L84.0,31.9 L82.8,31.4 L81.6,32.4 L80.4,32.2 L79.2,31.8 L78.0,31.9 L76.8,29.5 L75.6,29.5 L74.4,29.5 L73.2,29.5 L72.0,29.5 L70.8,29.5 L69.6,29.5 L68.4,29.5 L67.2,29.5 L66.0,30.3 L64.8,30.8 L63.6,31.5 L62.4,31.4 L61.2,33.1 L60.0,32.3 L58.8,30.7 L57.6,31.8 L56.4,30.6 L55.2,31.5 L54.0,33.1 L52.8,31.1 L51.6,31.1 L50.4,31.1 L49.2,31.1 L48.0,32.2 L46.8,33.0 L45.6,32.4 L44.4,29.5 L43.2,29.5 L42.0,29.5 L40.8,29.5 L39.6,29.5 L38.4,29.5 L37.2,29.5 L36.0,29.5 L34.8,29.5 L33.6,29.7 L32.4,30.0 L31.2,29.9 L30.0,30.2 L28.8,30.2 L27.6,30.7 L26.4,30.6 L25.2,31.0 L24.0,30.4 L22.8,31.9 L21.6,31.3 L20.4,30.8 L19.2,32.1 L18.0,31.6 L16.8,33.0 L15.6,32.6 L14.4,32.0 L13.2,32.6 L12.0,32.3 L10.8,31.7 L9.6,33.3 L8.4,33.2 L7.2,31.7 L6.0,31.6 L4.8,29.5 L3.6,29.5 L2.4,29.5 L1.2,29.5 L0.0,29.5Z" fill="#5c5c5c" stroke="#161616" stroke-width="1"/></svg></div>
<div style="left:973px;top:555px;width:138px;height:17px;overflow:hidden"><div class="t" style="left:3px;top:3.5px;font-size:11px;font-weight:bold;color:#0a0a0a">Take 1 (Audio 01_02)</div></div>
<div style="left:1302px;top:554px;width:133px;height:57px;background:#939496;border:1px solid #dfe0e3;overflow:hidden"><div style="left:22px;top:0px;width:1px;height:57px;background:#6e6f71"></div><div style="left:85px;top:0px;width:1px;height:57px;background:#6e6f71"></div><svg style="left:0;top:0" width="133" height="57"><path d="M0 29.5H133" stroke="#151515" stroke-width="1.2"/><path d="M0.0,29.5 L1.2,29.5 L2.4,29.5 L3.6,29.5 L4.8,26.6 L6.0,25.1 L7.2,25.5 L8.4,26.4 L9.6,26.5 L10.8,27.6 L12.0,25.8 L13.2,26.3 L14.4,26.3 L15.6,26.6 L16.8,27.8 L18.0,27.1 L19.2,27.4 L20.4,27.7 L21.6,27.6 L22.8,28.1 L24.0,28.0 L25.2,27.9 L26.4,28.3 L27.6,27.9 L28.8,28.8 L30.0,28.3 L31.2,29.1 L32.4,28.9 L33.6,29.5 L34.8,29.5 L36.0,29.5 L37.2,29.5 L38.4,29.5 L39.6,28.7 L40.8,27.0 L42.0,26.5 L43.2,26.1 L44.4,26.6 L45.6,26.9 L46.8,27.0 L48.0,26.9 L49.2,27.8 L50.4,27.2 L51.6,28.0 L52.8,27.4 L54.0,27.7 L55.2,27.9 L56.4,28.5 L57.6,27.4 L58.8,28.3 L60.0,28.0 L61.2,28.3 L62.4,28.0 L63.6,28.5 L64.8,28.1 L66.0,28.6 L67.2,28.9 L68.4,28.8 L69.6,28.8 L70.8,28.9 L72.0,29.5 L73.2,29.5 L74.4,29.5 L75.6,29.5 L76.8,27.8 L78.0,28.1 L79.2,28.4 L80.4,28.6 L81.6,28.4 L82.8,26.3 L84.0,28.7 L85.2,28.5 L86.4,28.5 L87.6,27.0 L88.8,27.7 L90.0,28.4 L91.2,28.5 L92.4,28.8 L93.6,29.5 L94.8,29.5 L96.0,29.5 L97.2,29.5 L98.4,29.5 L99.6,29.5 L100.8,29.5 L102.0,29.5 L103.2,29.5 L104.4,29.5 L105.6,29.5 L106.8,29.5 L108.0,28.3 L109.2,27.0 L110.4,26.2 L111.6,27.1 L112.8,26.8 L114.0,27.0 L115.2,28.4 L116.4,28.2 L117.6,28.5 L118.8,28.3 L120.0,28.3 L121.2,28.5 L122.4,26.1 L123.6,26.3 L124.8,27.1 L126.0,26.9 L127.2,28.3 L128.4,27.7 L129.6,27.8 L130.8,27.5 L132.0,28.8 L132.0,30.1 L130.8,30.7 L129.6,30.8 L128.4,31.7 L127.2,30.7 L126.0,32.2 L124.8,32.0 L123.6,31.8 L122.4,32.1 L121.2,30.4 L120.0,30.2 L118.8,30.6 L117.6,30.9 L116.4,31.6 L115.2,30.3 L114.0,31.5 L112.8,31.3 L111.6,31.0 L110.4,30.8 L109.2,32.8 L108.0,31.1 L106.8,29.5 L105.6,29.5 L104.4,29.5 L103.2,29.5 L102.0,29.5 L100.8,29.5 L99.6,29.5 L98.4,29.5 L97.2,29.5 L96.0,29.5 L94.8,29.5 L93.6,29.5 L92.4,29.9 L91.2,30.6 L90.0,31.7 L88.8,32.9 L87.6,32.5 L86.4,30.4 L85.2,30.9 L84.0,31.8 L82.8,32.3 L81.6,30.2 L80.4,30.0 L79.2,30.4 L78.0,30.7 L76.8,31.8 L75.6,29.5 L74.4,29.5 L73.2,29.5 L72.0,29.5 L70.8,30.2 L69.6,30.0 L68.4,30.4 L67.2,29.9 L66.0,30.5 L64.8,30.6 L63.6,30.6 L62.4,30.0 L61.2,30.6 L60.0,30.3 L58.8,30.7 L57.6,30.5 L56.4,30.2 L55.2,31.0 L54.0,30.4 L52.8,31.5 L51.6,30.6 L50.4,30.8 L49.2,30.9 L48.0,31.4 L46.8,31.5 L45.6,32.0 L44.4,31.3 L43.2,32.2 L42.0,31.2 L40.8,31.3 L39.6,30.0 L38.4,29.5 L37.2,29.5 L36.0,29.5 L34.8,29.5 L33.6,29.5 L32.4,30.1 L31.2,30.1 L30.0,30.5 L28.8,30.8 L27.6,30.1 L26.4,31.0 L25.2,31.4 L24.0,30.4 L22.8,30.8 L21.6,30.9 L20.4,30.8 L19.2,31.8 L18.0,31.3 L16.8,31.3 L15.6,31.9 L14.4,31.2 L13.2,32.4 L12.0,33.5 L10.8,33.3 L9.6,32.2 L8.4,32.4 L7.2,33.0 L6.0,32.9 L4.8,31.3 L3.6,29.5 L2.4,29.5 L1.2,29.5 L0.0,29.5Z" fill="#5c5c5c" stroke="#161616" stroke-width="1"/></svg></div>
<div style="left:1303px;top:555px;width:131px;height:17px;overflow:hidden"><div class="t" style="left:3px;top:3.5px;font-size:11px;font-weight:bold;color:#0a0a0a">Take 1 (Audio 01_02)</div></div>
<div style="left:868px;top:616px;width:111px;height:57px;background:#dde0e5;border:1px solid #f4f6f8;overflow:hidden"><div style="left:15px;top:0px;width:1px;height:57px;background:#a9abaf"></div><div style="left:78px;top:0px;width:1px;height:57px;background:#a9abaf"></div><svg style="left:0;top:0" width="111" height="57"><path d="M0 29.5H111" stroke="#b4b6ba" stroke-width="1"/><path d="M0.0,29.5 L1.2,29.5 L2.4,29.0 L3.6,27.4 L4.8,25.7 L6.0,25.8 L7.2,24.7 L8.4,27.2 L9.6,25.6 L10.8,27.5 L12.0,26.1 L13.2,26.5 L14.4,25.9 L15.6,27.8 L16.8,27.9 L18.0,28.2 L19.2,28.0 L20.4,28.2 L21.6,27.1 L22.8,27.6 L24.0,27.8 L25.2,28.6 L26.4,28.4 L27.6,27.8 L28.8,28.8 L30.0,28.5 L31.2,28.8 L32.4,29.5 L33.6,25.2 L34.8,24.9 L36.0,26.4 L37.2,26.9 L38.4,26.2 L39.6,26.7 L40.8,27.1 L42.0,27.1 L43.2,26.9 L44.4,28.2 L45.6,27.9 L46.8,25.4 L48.0,25.7 L49.2,24.6 L50.4,26.0 L51.6,26.0 L52.8,25.6 L54.0,25.9 L55.2,26.2 L56.4,27.5 L57.6,27.5 L58.8,28.2 L60.0,28.8 L61.2,29.5 L62.4,29.5 L63.6,29.5 L64.8,29.5 L66.0,25.0 L67.2,26.7 L68.4,27.6 L69.6,26.1 L70.8,27.3 L72.0,27.0 L73.2,26.8 L74.4,27.7 L75.6,28.3 L76.8,28.4 L78.0,28.6 L79.2,28.7 L80.4,25.8 L81.6,25.4 L82.8,26.4 L84.0,27.1 L85.2,27.1 L86.4,26.5 L87.6,27.0 L88.8,27.4 L90.0,27.4 L91.2,27.5 L92.4,27.9 L93.6,28.9 L94.8,28.8 L96.0,29.5 L97.2,29.5 L98.4,29.5 L99.6,29.5 L100.8,29.5 L102.0,29.5 L103.2,29.5 L104.4,29.5 L105.6,29.5 L106.8,29.5 L108.0,27.0 L109.2,28.4 L110.4,26.6 L110.4,31.9 L109.2,32.0 L108.0,32.4 L106.8,29.5 L105.6,29.5 L104.4,29.5 L103.2,29.5 L102.0,29.5 L100.8,29.5 L99.6,29.5 L98.4,29.5 L97.2,29.5 L96.0,29.5 L94.8,30.1 L93.6,30.8 L92.4,31.2 L91.2,31.4 L90.0,31.0 L88.8,30.7 L87.6,32.4 L86.4,30.8 L85.2,32.8 L84.0,31.6 L82.8,31.0 L81.6,33.0 L80.4,32.4 L79.2,30.7 L78.0,31.0 L76.8,31.5 L75.6,30.9 L74.4,31.4 L73.2,31.3 L72.0,31.7 L70.8,32.1 L69.6,31.4 L68.4,31.7 L67.2,32.1 L66.0,32.8 L64.8,29.5 L63.6,29.5 L62.4,29.5 L61.2,29.5 L60.0,30.0 L58.8,31.5 L57.6,31.8 L56.4,32.5 L55.2,31.8 L54.0,32.5 L52.8,34.3 L51.6,33.6 L50.4,34.6 L49.2,35.5 L48.0,33.3 L46.8,36.5 L45.6,31.3 L44.4,30.3 L43.2,31.2 L42.0,31.3 L40.8,33.4 L39.6,31.1 L38.4,32.1 L37.2,33.5 L36.0,32.7 L34.8,35.3 L33.6,33.5 L32.4,29.5 L31.2,30.3 L30.0,29.9 L28.8,30.8 L27.6,30.2 L26.4,31.3 L25.2,31.0 L24.0,31.5 L22.8,31.4 L21.6,31.7 L20.4,31.7 L19.2,31.9 L18.0,32.6 L16.8,31.7 L15.6,33.0 L14.4,32.5 L13.2,31.8 L12.0,31.9 L10.8,33.9 L9.6,32.0 L8.4,33.4 L7.2,33.8 L6.0,33.7 L4.8,35.1 L3.6,33.3 L2.4,29.8 L1.2,29.5 L0.0,29.5Z" fill="none" stroke="#a9abaf" stroke-width="1"/></svg></div>
<div style="left:869px;top:617px;width:109px;height:17px;overflow:hidden"><div class="t" style="left:3px;top:3.5px;font-size:11px;font-weight:bold;color:#8a8c90">Take 6 (Audio 01_02)</div></div>
<div style="left:562px;top:678px;width:62px;height:57px;background:#dde0e5;border:1px solid #f4f6f8;overflow:hidden"><div style="left:6px;top:0px;width:1px;height:57px;background:#a9abaf"></div><svg style="left:0;top:0" width="62" height="57"><path d="M0 29.5H62" stroke="#b4b6ba" stroke-width="1"/><path d="M0.0,29.5 L1.2,29.5 L2.4,29.5 L3.6,23.0 L4.8,21.9 L6.0,23.5 L7.2,23.3 L8.4,25.9 L9.6,25.2 L10.8,26.6 L12.0,19.6 L13.2,22.1 L14.4,22.6 L15.6,26.2 L16.8,25.6 L18.0,25.5 L19.2,22.5 L20.4,25.5 L21.6,23.3 L22.8,23.5 L24.0,24.1 L25.2,26.5 L26.4,27.4 L27.6,28.4 L28.8,28.7 L30.0,29.5 L31.2,29.5 L32.4,29.5 L33.6,29.5 L34.8,29.5 L36.0,29.5 L37.2,29.5 L38.4,29.5 L39.6,29.5 L40.8,29.5 L42.0,29.5 L43.2,25.9 L44.4,25.4 L45.6,24.5 L46.8,25.1 L48.0,28.0 L49.2,26.0 L50.4,26.3 L51.6,25.7 L52.8,26.5 L54.0,26.8 L55.2,27.2 L56.4,28.2 L57.6,27.5 L58.8,28.3 L60.0,29.1 L61.2,29.5 L61.2,29.5 L60.0,30.2 L58.8,30.3 L57.6,30.5 L56.4,30.7 L55.2,32.1 L54.0,31.4 L52.8,32.4 L51.6,31.2 L50.4,32.0 L49.2,32.8 L48.0,31.4 L46.8,34.7 L45.6,32.2 L44.4,32.8 L43.2,32.5 L42.0,29.5 L40.8,29.5 L39.6,29.5 L38.4,29.5 L37.2,29.5 L36.0,29.5 L34.8,29.5 L33.6,29.5 L32.4,29.5 L31.2,29.5 L30.0,29.5 L28.8,30.8 L27.6,31.2 L26.4,31.5 L25.2,32.5 L24.0,31.7 L22.8,35.4 L21.6,35.1 L20.4,35.8 L19.2,32.7 L18.0,33.0 L16.8,32.3 L15.6,35.3 L14.4,32.1 L13.2,33.2 L12.0,33.1 L10.8,32.3 L9.6,32.8 L8.4,33.2 L7.2,35.0 L6.0,34.4 L4.8,37.9 L3.6,34.1 L2.4,29.5 L1.2,29.5 L0.0,29.5Z" fill="none" stroke="#a9abaf" stroke-width="1"/></svg></div>
<div style="left:563px;top:679px;width:60px;height:17px;overflow:hidden"><div class="t" style="left:3px;top:3.5px;font-size:11px;font-weight:bold;color:#8a8c90">Take 2 (Audio 01_01)</div></div>
<div style="left:661px;top:678px;width:89px;height:57px;background:#939496;border:1px solid #dfe0e3;overflow:hidden"><div style="left:33px;top:0px;width:1px;height:57px;background:#6e6f71"></div><svg style="left:0;top:0" width="89" height="57"><path d="M0 29.5H89" stroke="#151515" stroke-width="1.2"/><path d="M0.0,29.5 L1.2,29.5 L2.4,29.5 L3.6,29.5 L4.8,29.5 L6.0,29.5 L7.2,29.5 L8.4,25.6 L9.6,23.1 L10.8,23.9 L12.0,25.0 L13.2,23.1 L14.4,25.8 L15.6,26.2 L16.8,25.4 L18.0,28.1 L19.2,22.6 L20.4,26.8 L21.6,27.5 L22.8,26.8 L24.0,28.3 L25.2,29.5 L26.4,29.5 L27.6,29.5 L28.8,29.5 L30.0,29.5 L31.2,20.6 L32.4,23.1 L33.6,23.8 L34.8,22.4 L36.0,22.1 L37.2,25.8 L38.4,24.2 L39.6,24.1 L40.8,21.8 L42.0,24.6 L43.2,22.7 L44.4,24.3 L45.6,25.4 L46.8,26.2 L48.0,25.1 L49.2,25.0 L50.4,25.0 L51.6,26.1 L52.8,25.0 L54.0,25.7 L55.2,26.6 L56.4,25.9 L57.6,27.2 L58.8,27.1 L60.0,27.4 L61.2,27.9 L62.4,29.0 L63.6,28.5 L64.8,29.1 L66.0,29.5 L67.2,29.5 L68.4,21.8 L69.6,23.8 L70.8,20.6 L72.0,23.2 L73.2,19.7 L74.4,24.1 L75.6,23.8 L76.8,25.3 L78.0,18.9 L79.2,25.7 L80.4,20.8 L81.6,24.9 L82.8,24.3 L84.0,24.3 L85.2,26.5 L86.4,27.0 L87.6,23.3 L88.8,14.0 L88.8,42.9 L87.6,33.2 L86.4,31.2 L85.2,32.4 L84.0,33.8 L82.8,36.3 L81.6,35.8 L80.4,32.9 L79.2,36.2 L78.0,39.6 L76.8,35.3 L75.6,33.8 L74.4,33.5 L73.2,34.9 L72.0,36.1 L70.8,35.9 L69.6,44.3 L68.4,35.9 L67.2,29.5 L66.0,29.5 L64.8,30.2 L63.6,30.3 L62.4,30.7 L61.2,31.4 L60.0,31.6 L58.8,31.4 L57.6,32.3 L56.4,32.6 L55.2,32.5 L54.0,32.5 L52.8,32.8 L51.6,34.1 L50.4,31.6 L49.2,32.4 L48.0,34.7 L46.8,31.8 L45.6,33.7 L44.4,33.9 L43.2,33.1 L42.0,32.7 L40.8,35.3 L39.6,37.3 L38.4,35.3 L37.2,38.1 L36.0,36.1 L34.8,35.9 L33.6,37.0 L32.4,37.1 L31.2,35.1 L30.0,29.5 L28.8,29.5 L27.6,29.5 L26.4,29.5 L25.2,29.5 L24.0,31.0 L22.8,32.2 L21.6,34.7 L20.4,34.7 L19.2,33.8 L18.0,32.2 L16.8,33.0 L15.6,34.3 L14.4,35.8 L13.2,35.5 L12.0,33.0 L10.8,34.6 L9.6,34.9 L8.4,32.8 L7.2,29.5 L6.0,29.5 L4.8,29.5 L3.6,29.5 L2.4,29.5 L1.2,29.5 L0.0,29.5Z" fill="#5c5c5c" stroke="#161616" stroke-width="1"/></svg></div>
<div style="left:662px;top:679px;width:87px;height:17px;overflow:hidden"><div class="t" style="left:3px;top:3.5px;font-size:11px;font-weight:bold;color:#0a0a0a">Take 2 (Audio 01_01)</div></div>
<div style="left:751px;top:678px;width:62px;height:57px;background:#939496;border:1px solid #dfe0e3;overflow:hidden"><div style="left:6px;top:0px;width:1px;height:57px;background:#6e6f71"></div><svg style="left:0;top:0" width="62" height="57"><path d="M0 29.5H62" stroke="#151515" stroke-width="1.2"/><path d="M0.0,29.5 L1.2,29.5 L2.4,29.5 L3.6,29.5 L4.8,29.5 L6.0,29.5 L7.2,29.5 L8.4,27.1 L9.6,25.7 L10.8,20.7 L12.0,20.0 L13.2,19.6 L14.4,25.5 L15.6,24.1 L16.8,20.5 L18.0,20.1 L19.2,23.9 L20.4,22.4 L21.6,25.0 L22.8,21.8 L24.0,25.4 L25.2,23.7 L26.4,24.0 L27.6,26.5 L28.8,24.3 L30.0,25.7 L31.2,26.9 L32.4,25.3 L33.6,25.9 L34.8,27.2 L36.0,27.6 L37.2,26.8 L38.4,27.9 L39.6,28.2 L40.8,27.7 L42.0,28.1 L43.2,28.8 L44.4,26.6 L45.6,20.6 L46.8,19.9 L48.0,25.5 L49.2,21.7 L50.4,26.4 L51.6,23.4 L52.8,24.1 L54.0,26.6 L55.2,24.3 L56.4,24.9 L57.6,27.1 L58.8,27.8 L60.0,26.0 L61.2,27.6 L61.2,32.5 L60.0,32.4 L58.8,34.0 L57.6,32.3 L56.4,32.8 L55.2,34.9 L54.0,34.7 L52.8,34.0 L51.6,36.5 L50.4,34.3 L49.2,35.9 L48.0,32.6 L46.8,36.4 L45.6,33.5 L44.4,34.2 L43.2,30.2 L42.0,30.7 L40.8,30.5 L39.6,31.5 L38.4,32.5 L37.2,31.8 L36.0,33.2 L34.8,33.4 L33.6,32.3 L32.4,34.7 L31.2,35.0 L30.0,34.6 L28.8,36.1 L27.6,34.4 L26.4,35.3 L25.2,35.9 L24.0,37.0 L22.8,36.7 L21.6,35.9 L20.4,37.8 L19.2,38.9 L18.0,39.4 L16.8,37.5 L15.6,35.2 L14.4,36.6 L13.2,35.4 L12.0,37.6 L10.8,33.6 L9.6,38.0 L8.4,32.3 L7.2,29.5 L6.0,29.5 L4.8,29.5 L3.6,29.5 L2.4,29.5 L1.2,29.5 L0.0,29.5Z" fill="#5c5c5c" stroke="#161616" stroke-width="1"/></svg></div>
<div style="left:752px;top:679px;width:60px;height:17px;overflow:hidden"><div class="t" style="left:3px;top:3.5px;font-size:11px;font-weight:bold;color:#0a0a0a">Take 2 (Audio 01_01)</div></div>
<div style="left:814px;top:678px;width:52px;height:57px;background:#939496;border:1px solid #dfe0e3;overflow:hidden"><div style="left:6px;top:0px;width:1px;height:57px;background:#6e6f71"></div><svg style="left:0;top:0" width="52" height="57"><path d="M0 29.5H52" stroke="#151515" stroke-width="1.2"/><path d="M0.0,29.5 L1.2,29.5 L2.4,29.5 L3.6,29.5 L4.8,29.5 L6.0,29.5 L7.2,25.2 L8.4,23.1 L9.6,22.4 L10.8,25.2 L12.0,21.8 L13.2,23.7 L14.4,23.1 L15.6,23.6 L16.8,22.4 L18.0,23.8 L19.2,27.1 L20.4,25.6 L21.6,25.8 L22.8,24.9 L24.0,24.4 L25.2,26.5 L26.4,26.7 L27.6,26.0 L28.8,26.0 L30.0,27.4 L31.2,26.4 L32.4,27.7 L33.6,27.9 L34.8,28.4 L36.0,28.2 L37.2,28.5 L38.4,28.7 L39.6,28.8 L40.8,28.9 L42.0,29.5 L43.2,29.5 L44.4,29.5 L45.6,21.7 L46.8,13.6 L48.0,24.0 L49.2,17.4 L50.4,17.5 L51.6,24.2 L51.6,37.3 L50.4,35.3 L49.2,39.4 L48.0,43.7 L46.8,45.6 L45.6,34.9 L44.4,29.5 L43.2,29.5 L42.0,29.5 L40.8,30.1 L39.6,30.1 L38.4,30.1 L37.2,30.4 L36.0,31.1 L34.8,30.8 L33.6,32.1 L32.4,31.9 L31.2,32.0 L30.0,32.7 L28.8,32.2 L27.6,33.6 L26.4,32.0 L25.2,33.4 L24.0,33.5 L22.8,32.3 L21.6,32.9 L20.4,35.0 L19.2,33.0 L18.0,35.3 L16.8,32.5 L15.6,35.7 L14.4,33.9 L13.2,37.4 L12.0,36.5 L10.8,35.7 L9.6,32.6 L8.4,37.2 L7.2,31.0 L6.0,29.5 L4.8,29.5 L3.6,29.5 L2.4,29.5 L1.2,29.5 L0.0,29.5Z" fill="#5c5c5c" stroke="#161616" stroke-width="1"/></svg></div>
<div style="left:815px;top:679px;width:50px;height:17px;overflow:hidden"><div class="t" style="left:-10px;top:3.5px;font-size:11px;font-weight:bold;color:#0a0a0a">Take 2 (Audio 01_01)</div></div>
<div style="left:869px;top:678px;width:86px;height:57px;background:#939496;border:1px solid #dfe0e3;overflow:hidden"><div style="left:0;top:0;right:0;bottom:0;background-image:repeating-linear-gradient(45deg,rgba(0,0,0,0) 0 3.4px,rgba(60,60,60,.30) 3.4px 4.6px)"></div><div style="left:14px;top:0px;width:1px;height:57px;background:#6e6f71"></div><div style="left:77px;top:0px;width:1px;height:57px;background:#6e6f71"></div><svg style="left:0;top:0" width="86" height="57"><path d="M0 29.5H86" stroke="#151515" stroke-width="1.2"/><path d="M0.0,29.5 L1.2,29.5 L2.4,29.5 L3.6,29.5 L4.8,26.9 L6.0,19.8 L7.2,16.4 L8.4,11.7 L9.6,21.8 L10.8,17.9 L12.0,21.2 L13.2,23.0 L14.4,18.2 L15.6,15.6 L16.8,22.2 L18.0,21.9 L19.2,19.5 L20.4,20.4 L21.6,20.8 L22.8,19.0 L24.0,25.3 L25.2,20.4 L26.4,22.8 L27.6,24.6 L28.8,24.1 L30.0,25.8 L31.2,23.7 L32.4,24.0 L33.6,26.7 L34.8,26.1 L36.0,26.5 L37.2,27.0 L38.4,27.9 L39.6,24.9 L40.8,21.4 L42.0,19.6 L43.2,21.5 L44.4,22.0 L45.6,23.7 L46.8,25.9 L48.0,25.4 L49.2,27.8 L50.4,17.1 L51.6,18.5 L52.8,16.7 L54.0,18.3 L55.2,25.2 L56.4,20.4 L57.6,25.6 L58.8,25.6 L60.0,26.3 L61.2,28.2 L62.4,29.5 L63.6,26.1 L64.8,24.3 L66.0,16.9 L67.2,23.1 L68.4,22.3 L69.6,19.3 L70.8,21.1 L72.0,19.4 L73.2,23.2 L74.4,23.4 L75.6,22.0 L76.8,23.7 L78.0,20.5 L79.2,23.3 L80.4,23.5 L81.6,23.7 L82.8,24.9 L84.0,23.4 L85.2,26.9 L85.2,32.0 L84.0,33.9 L82.8,36.8 L81.6,34.3 L80.4,34.9 L79.2,32.9 L78.0,35.2 L76.8,38.0 L75.6,32.6 L74.4,36.8 L73.2,39.6 L72.0,36.1 L70.8,36.5 L69.6,36.8 L68.4,40.2 L67.2,41.0 L66.0,37.7 L64.8,33.8 L63.6,32.9 L62.4,29.5 L61.2,31.4 L60.0,32.9 L58.8,32.4 L57.6,34.7 L56.4,37.3 L55.2,36.5 L54.0,38.7 L52.8,37.5 L51.6,36.8 L50.4,35.3 L49.2,32.9 L48.0,32.2 L46.8,31.7 L45.6,35.5 L44.4,36.6 L43.2,35.7 L42.0,34.0 L40.8,36.9 L39.6,34.9 L38.4,31.4 L37.2,31.8 L36.0,32.7 L34.8,32.1 L33.6,35.1 L32.4,32.9 L31.2,36.0 L30.0,33.0 L28.8,32.9 L27.6,36.7 L26.4,36.4 L25.2,37.6 L24.0,37.0 L22.8,36.3 L21.6,34.3 L20.4,38.7 L19.2,38.5 L18.0,39.0 L16.8,42.6 L15.6,35.1 L14.4,36.6 L13.2,41.6 L12.0,41.3 L10.8,38.4 L9.6,43.2 L8.4,44.1 L7.2,37.7 L6.0,41.6 L4.8,32.4 L3.6,29.5 L2.4,29.5 L1.2,29.5 L0.0,29.5Z" fill="#5c5c5c" stroke="#161616" stroke-width="1"/></svg></div>
<div style="left:870px;top:679px;width:84px;height:17px;overflow:hidden"><div class="t" style="left:3px;top:3.5px;font-size:11px;font-weight:bold;color:#0a0a0a">Take 4 (Audio 01_01)</div></div>
<div style="left:956px;top:678px;width:62px;height:57px;background:#939496;border:1px solid #dfe0e3;overflow:hidden"><div style="left:53px;top:0px;width:1px;height:57px;background:#6e6f71"></div><svg style="left:0;top:0" width="62" height="57"><path d="M0 29.5H62" stroke="#151515" stroke-width="1.2"/><path d="M0.0,29.5 L1.2,29.5 L2.4,29.5 L3.6,29.5 L4.8,29.5 L6.0,29.5 L7.2,23.7 L8.4,21.6 L9.6,21.4 L10.8,21.9 L12.0,26.0 L13.2,23.4 L14.4,25.5 L15.6,27.4 L16.8,26.2 L18.0,27.2 L19.2,28.2 L20.4,26.6 L21.6,26.5 L22.8,26.9 L24.0,27.3 L25.2,28.3 L26.4,29.5 L27.6,29.5 L28.8,29.5 L30.0,29.5 L31.2,29.5 L32.4,29.5 L33.6,29.5 L34.8,29.5 L36.0,29.5 L37.2,29.5 L38.4,23.8 L39.6,23.3 L40.8,18.1 L42.0,24.2 L43.2,20.7 L44.4,16.5 L45.6,20.0 L46.8,18.8 L48.0,20.2 L49.2,25.6 L50.4,24.0 L51.6,25.1 L52.8,24.0 L54.0,22.9 L55.2,22.9 L56.4,25.5 L57.6,25.8 L58.8,27.6 L60.0,26.8 L61.2,27.2 L61.2,32.1 L60.0,33.0 L58.8,33.3 L57.6,31.5 L56.4,34.0 L55.2,35.3 L54.0,36.1 L52.8,37.8 L51.6,38.6 L50.4,33.6 L49.2,34.0 L48.0,38.0 L46.8,41.2 L45.6,35.1 L44.4,35.1 L43.2,41.6 L42.0,39.0 L40.8,42.4 L39.6,36.0 L38.4,35.6 L37.2,29.5 L36.0,29.5 L34.8,29.5 L33.6,29.5 L32.4,29.5 L31.2,29.5 L30.0,29.5 L28.8,29.5 L27.6,29.5 L26.4,29.5 L25.2,30.3 L24.0,30.8 L22.8,31.0 L21.6,31.7 L20.4,32.9 L19.2,32.8 L18.0,31.4 L16.8,33.6 L15.6,35.3 L14.4,35.2 L13.2,36.0 L12.0,35.4 L10.8,33.8 L9.6,32.4 L8.4,37.1 L7.2,33.4 L6.0,29.5 L4.8,29.5 L3.6,29.5 L2.4,29.5 L1.2,29.5 L0.0,29.5Z" fill="#5c5c5c" stroke="#161616" stroke-width="1"/></svg></div>
<div style="left:1019px;top:678px;width:30px;height:57px;background:#939496;border:1px solid #dfe0e3;overflow:hidden"><svg style="left:0;top:0" width="30" height="57"><path d="M0 29.5H30" stroke="#151515" stroke-width="1.2"/><path d="M0.0,29.5 L1.2,29.5 L2.4,29.5 L3.6,29.5 L4.8,29.5 L6.0,27.0 L7.2,20.0 L8.4,22.3 L9.6,18.2 L10.8,19.7 L12.0,20.2 L13.2,22.0 L14.4,22.1 L15.6,20.0 L16.8,22.4 L18.0,20.3 L19.2,24.7 L20.4,25.5 L21.6,22.5 L22.8,22.7 L24.0,23.5 L25.2,25.0 L26.4,25.0 L27.6,24.0 L28.8,25.9 L30.0,25.0 L30.0,33.2 L28.8,32.0 L27.6,34.1 L26.4,31.8 L25.2,32.6 L24.0,32.6 L22.8,32.3 L21.6,37.2 L20.4,37.8 L19.2,37.5 L18.0,37.1 L16.8,34.2 L15.6,38.8 L14.4,36.3 L13.2,33.8 L12.0,37.5 L10.8,39.4 L9.6,40.2 L8.4,36.6 L7.2,36.4 L6.0,31.3 L4.8,29.5 L3.6,29.5 L2.4,29.5 L1.2,29.5 L0.0,29.5Z" fill="#5c5c5c" stroke="#161616" stroke-width="1"/></svg></div>
<div style="left:1050px;top:678px;width:31px;height:57px;background:#dde0e5;border:1px solid #f4f6f8;overflow:hidden"><div style="left:22px;top:0px;width:1px;height:57px;background:#a9abaf"></div><svg style="left:0;top:0" width="31" height="57"><path d="M0 29.5H31" stroke="#b4b6ba" stroke-width="1"/><path d="M0.0,29.5 L1.2,29.5 L2.4,28.9 L3.6,27.0 L4.8,26.6 L6.0,25.8 L7.2,26.9 L8.4,25.6 L9.6,25.4 L10.8,26.9 L12.0,27.5 L13.2,26.4 L14.4,27.7 L15.6,26.9 L16.8,28.4 L18.0,28.5 L19.2,29.2 L20.4,29.5 L21.6,29.5 L22.8,29.5 L24.0,29.5 L25.2,29.5 L26.4,29.5 L27.6,29.5 L28.8,26.9 L30.0,25.5 L30.0,33.0 L28.8,31.4 L27.6,29.5 L26.4,29.5 L25.2,29.5 L24.0,29.5 L22.8,29.5 L21.6,29.5 L20.4,29.5 L19.2,30.3 L18.0,30.7 L16.8,31.1 L15.6,31.1 L14.4,31.8 L13.2,32.4 L12.0,30.9 L10.8,33.4 L9.6,32.4 L8.4,34.0 L7.2,34.9 L6.0,35.5 L4.8,36.1 L3.6,33.4 L2.4,30.2 L1.2,29.5 L0.0,29.5Z" fill="none" stroke="#a9abaf" stroke-width="1"/></svg></div>
<div style="left:1082px;top:678px;width:30px;height:57px;background:#dde0e5;border:1px solid #f4f6f8;overflow:hidden"><svg style="left:0;top:0" width="30" height="57"><path d="M0 29.5H30" stroke="#b4b6ba" stroke-width="1"/><path d="M0.0,29.5 L1.2,29.5 L2.4,29.5 L3.6,29.5 L4.8,29.5 L6.0,27.1 L7.2,23.5 L8.4,24.1 L9.6,25.5 L10.8,25.8 L12.0,27.3 L13.2,27.9 L14.4,27.6 L15.6,21.4 L16.8,22.6 L18.0,21.4 L19.2,22.1 L20.4,26.3 L21.6,26.1 L22.8,26.1 L24.0,26.1 L25.2,28.3 L26.4,29.5 L27.6,29.5 L28.8,29.5 L30.0,29.5 L30.0,29.5 L28.8,29.5 L27.6,29.5 L26.4,29.5 L25.2,30.8 L24.0,33.0 L22.8,33.8 L21.6,34.3 L20.4,33.5 L19.2,34.9 L18.0,37.9 L16.8,35.4 L15.6,37.7 L14.4,31.5 L13.2,32.2 L12.0,33.7 L10.8,34.0 L9.6,34.7 L8.4,32.0 L7.2,34.8 L6.0,32.1 L4.8,29.5 L3.6,29.5 L2.4,29.5 L1.2,29.5 L0.0,29.5Z" fill="none" stroke="#a9abaf" stroke-width="1"/></svg></div>
<div style="left:1113px;top:678px;width:124px;height:57px;background:#939496;border:1px solid #dfe0e3;overflow:hidden"><div style="left:22px;top:0px;width:1px;height:57px;background:#6e6f71"></div><div style="left:85px;top:0px;width:1px;height:57px;background:#6e6f71"></div><svg style="left:0;top:0" width="124" height="57"><path d="M0 29.5H124" stroke="#151515" stroke-width="1.2"/><path d="M0.0,29.5 L1.2,29.5 L2.4,29.5 L3.6,29.5 L4.8,29.5 L6.0,25.6 L7.2,20.1 L8.4,21.2 L9.6,21.1 L10.8,25.0 L12.0,23.7 L13.2,21.5 L14.4,26.1 L15.6,24.9 L16.8,24.8 L18.0,25.6 L19.2,26.7 L20.4,25.9 L21.6,25.2 L22.8,28.0 L24.0,26.4 L25.2,27.7 L26.4,24.0 L27.6,21.3 L28.8,21.7 L30.0,22.8 L31.2,25.0 L32.4,24.4 L33.6,23.0 L34.8,24.2 L36.0,24.4 L37.2,24.1 L38.4,24.8 L39.6,25.7 L40.8,24.8 L42.0,27.1 L43.2,27.9 L44.4,28.4 L45.6,28.1 L46.8,27.7 L48.0,29.2 L49.2,29.5 L50.4,29.5 L51.6,29.5 L52.8,29.5 L54.0,29.5 L55.2,29.5 L56.4,29.5 L57.6,29.5 L58.8,29.5 L60.0,28.2 L61.2,22.0 L62.4,21.6 L63.6,23.1 L64.8,20.8 L66.0,17.6 L67.2,23.2 L68.4,21.0 L69.6,21.6 L70.8,22.1 L72.0,20.2 L73.2,21.3 L74.4,23.2 L75.6,22.8 L76.8,22.8 L78.0,22.8 L79.2,24.9 L80.4,26.0 L81.6,23.0 L82.8,26.2 L84.0,24.7 L85.2,24.4 L86.4,24.5 L87.6,24.9 L88.8,26.5 L90.0,27.5 L91.2,26.3 L92.4,27.9 L93.6,27.2 L94.8,27.5 L96.0,28.8 L97.2,29.0 L98.4,29.5 L99.6,29.5 L100.8,29.5 L102.0,29.5 L103.2,29.5 L104.4,28.2 L105.6,15.1 L106.8,16.5 L108.0,22.5 L109.2,20.1 L110.4,25.4 L111.6,26.2 L112.8,23.2 L114.0,16.8 L115.2,23.5 L116.4,19.3 L117.6,20.2 L118.8,22.6 L120.0,23.4 L121.2,25.6 L122.4,24.5 L123.6,19.3 L123.6,33.6 L122.4,32.4 L121.2,31.7 L120.0,34.5 L118.8,35.2 L117.6,36.1 L116.4,33.4 L115.2,38.6 L114.0,40.2 L112.8,34.1 L111.6,32.6 L110.4,38.7 L109.2,37.2 L108.0,34.8 L106.8,36.2 L105.6,44.0 L104.4,30.6 L103.2,29.5 L102.0,29.5 L100.8,29.5 L99.6,29.5 L98.4,29.5 L97.2,30.3 L96.0,30.5 L94.8,30.7 L93.6,31.1 L92.4,31.8 L91.2,32.5 L90.0,31.8 L88.8,33.4 L87.6,33.5 L86.4,34.6 L85.2,34.2 L84.0,31.7 L82.8,33.0 L81.6,32.9 L80.4,33.7 L79.2,35.4 L78.0,33.9 L76.8,37.6 L75.6,33.7 L74.4,36.6 L73.2,39.3 L72.0,38.8 L70.8,39.3 L69.6,40.9 L68.4,35.2 L67.2,38.9 L66.0,41.0 L64.8,34.9 L63.6,42.0 L62.4,42.0 L61.2,39.1 L60.0,33.3 L58.8,29.5 L57.6,29.5 L56.4,29.5 L55.2,29.5 L54.0,29.5 L52.8,29.5 L51.6,29.5 L50.4,29.5 L49.2,29.5 L48.0,30.1 L46.8,31.1 L45.6,31.2 L44.4,31.8 L43.2,31.7 L42.0,32.8 L40.8,33.1 L39.6,33.9 L38.4,33.1 L37.2,34.4 L36.0,33.7 L34.8,34.2 L33.6,35.5 L32.4,34.9 L31.2,33.9 L30.0,35.6 L28.8,38.1 L27.6,37.6 L26.4,35.0 L25.2,31.9 L24.0,31.8 L22.8,33.2 L21.6,32.7 L20.4,34.1 L19.2,34.0 L18.0,34.4 L16.8,35.6 L15.6,36.2 L14.4,34.0 L13.2,34.3 L12.0,38.1 L10.8,36.7 L9.6,39.3 L8.4,38.5 L7.2,39.4 L6.0,39.6 L4.8,29.5 L3.6,29.5 L2.4,29.5 L1.2,29.5 L0.0,29.5Z" fill="#5c5c5c" stroke="#161616" stroke-width="1"/></svg></div>
<div style="left:1114px;top:679px;width:122px;height:17px;overflow:hidden"><div class="t" style="left:3px;top:3.5px;font-size:11px;font-weight:bold;color:#0a0a0a">Take 2 (Audio 01_01)</div></div>
<div style="left:1240px;top:678px;width:125px;height:57px;background:#939496;border:1px solid #dfe0e3;overflow:hidden"><div style="left:21px;top:0px;width:1px;height:57px;background:#6e6f71"></div><div style="left:84px;top:0px;width:1px;height:57px;background:#6e6f71"></div><svg style="left:0;top:0" width="125" height="57"><path d="M0 29.5H125" stroke="#151515" stroke-width="1.2"/><path d="M0.0,29.5 L1.2,29.5 L2.4,26.0 L3.6,24.6 L4.8,25.1 L6.0,24.2 L7.2,23.8 L8.4,23.0 L9.6,24.9 L10.8,25.7 L12.0,25.5 L13.2,26.8 L14.4,26.7 L15.6,27.5 L16.8,27.2 L18.0,27.7 L19.2,25.8 L20.4,12.5 L21.6,20.5 L22.8,14.3 L24.0,13.7 L25.2,20.9 L26.4,16.8 L27.6,23.6 L28.8,21.9 L30.0,25.1 L31.2,23.9 L32.4,22.4 L33.6,25.4 L34.8,22.7 L36.0,27.6 L37.2,26.7 L38.4,19.1 L39.6,22.6 L40.8,24.5 L42.0,22.3 L43.2,22.2 L44.4,24.8 L45.6,26.0 L46.8,28.1 L48.0,23.5 L49.2,26.4 L50.4,25.8 L51.6,27.3 L52.8,29.5 L54.0,29.5 L55.2,16.7 L56.4,18.7 L57.6,20.2 L58.8,19.7 L60.0,24.0 L61.2,22.1 L62.4,21.8 L63.6,24.5 L64.8,25.1 L66.0,26.4 L67.2,25.6 L68.4,16.9 L69.6,22.1 L70.8,17.2 L72.0,18.6 L73.2,21.1 L74.4,23.7 L75.6,26.1 L76.8,21.9 L78.0,24.6 L79.2,24.7 L80.4,27.8 L81.6,26.4 L82.8,27.9 L84.0,29.5 L85.2,29.5 L86.4,29.5 L87.6,29.5 L88.8,25.0 L90.0,24.0 L91.2,20.1 L92.4,20.3 L93.6,21.7 L94.8,23.2 L96.0,25.2 L97.2,21.7 L98.4,24.7 L99.6,24.8 L100.8,25.1 L102.0,22.6 L103.2,25.6 L104.4,24.0 L105.6,23.5 L106.8,24.2 L108.0,24.1 L109.2,26.2 L110.4,24.5 L111.6,25.1 L112.8,27.0 L114.0,25.9 L115.2,26.6 L116.4,27.6 L117.6,27.4 L118.8,27.9 L120.0,27.9 L121.2,28.0 L122.4,28.5 L123.6,28.9 L124.8,29.5 L124.8,29.5 L123.6,30.4 L122.4,30.8 L121.2,31.1 L120.0,30.8 L118.8,30.8 L117.6,32.5 L116.4,32.7 L115.2,33.2 L114.0,31.0 L112.8,33.8 L111.6,32.8 L110.4,32.5 L109.2,33.4 L108.0,33.7 L106.8,31.7 L105.6,34.9 L104.4,35.5 L103.2,32.9 L102.0,36.7 L100.8,34.2 L99.6,37.1 L98.4,34.3 L97.2,37.9 L96.0,37.4 L94.8,33.3 L93.6,37.3 L92.4,36.3 L91.2,37.9 L90.0,39.5 L88.8,31.6 L87.6,29.5 L86.4,29.5 L85.2,29.5 L84.0,29.5 L82.8,31.0 L81.6,31.5 L80.4,32.7 L79.2,32.5 L78.0,34.0 L76.8,34.3 L75.6,36.0 L74.4,39.1 L73.2,39.8 L72.0,36.5 L70.8,36.4 L69.6,37.3 L68.4,42.6 L67.2,31.2 L66.0,33.0 L64.8,33.1 L63.6,35.3 L62.4,34.8 L61.2,35.1 L60.0,34.7 L58.8,37.9 L57.6,38.5 L56.4,39.3 L55.2,41.8 L54.0,29.5 L52.8,29.5 L51.6,31.6 L50.4,34.0 L49.2,34.7 L48.0,38.1 L46.8,31.9 L45.6,32.2 L44.4,35.2 L43.2,32.3 L42.0,36.2 L40.8,35.8 L39.6,37.7 L38.4,37.1 L37.2,33.0 L36.0,33.4 L34.8,32.8 L33.6,33.4 L32.4,38.0 L31.2,38.5 L30.0,39.2 L28.8,37.7 L27.6,36.4 L26.4,42.5 L25.2,38.3 L24.0,42.9 L22.8,40.6 L21.6,35.9 L20.4,40.5 L19.2,34.2 L18.0,31.4 L16.8,30.7 L15.6,31.3 L14.4,32.7 L13.2,33.0 L12.0,32.7 L10.8,35.1 L9.6,33.8 L8.4,33.3 L7.2,34.8 L6.0,33.0 L4.8,37.7 L3.6,34.0 L2.4,32.9 L1.2,29.5 L0.0,29.5Z" fill="#5c5c5c" stroke="#161616" stroke-width="1"/></svg></div>
<div style="left:1241px;top:679px;width:123px;height:17px;overflow:hidden"><div class="t" style="left:3px;top:3.5px;font-size:11px;font-weight:bold;color:#0a0a0a">Take 2 (Audio 01_01)</div></div>
<div style="left:1366px;top:678px;width:101px;height:57px;background:#939496;border:1px solid #dfe0e3;overflow:hidden"><div style="left:0;top:0;right:0;bottom:0;background-image:repeating-linear-gradient(45deg,rgba(0,0,0,0) 0 3.4px,rgba(60,60,60,.30) 3.4px 4.6px)"></div><div style="left:21px;top:0px;width:1px;height:57px;background:#6e6f71"></div><div style="left:84px;top:0px;width:1px;height:57px;background:#6e6f71"></div><svg style="left:0;top:0" width="101" height="57"><path d="M0 29.5H101" stroke="#151515" stroke-width="1.2"/><path d="M0.0,29.5 L1.2,29.5 L2.4,26.2 L3.6,19.4 L4.8,23.0 L6.0,22.6 L7.2,26.0 L8.4,21.8 L9.6,23.7 L10.8,23.5 L12.0,24.3 L13.2,24.9 L14.4,24.3 L15.6,25.5 L16.8,27.8 L18.0,27.1 L19.2,27.3 L20.4,28.3 L21.6,28.4 L22.8,29.5 L24.0,29.5 L25.2,29.5 L26.4,29.5 L27.6,29.5 L28.8,29.5 L30.0,29.5 L31.2,22.9 L32.4,17.3 L33.6,24.0 L34.8,21.1 L36.0,25.7 L37.2,23.0 L38.4,23.3 L39.6,24.6 L40.8,22.9 L42.0,26.2 L43.2,27.0 L44.4,26.6 L45.6,27.0 L46.8,28.7 L48.0,29.5 L49.2,29.5 L50.4,29.5 L51.6,29.5 L52.8,29.5 L54.0,29.5 L55.2,29.5 L56.4,29.5 L57.6,29.5 L58.8,29.5 L60.0,23.8 L61.2,19.7 L62.4,20.8 L63.6,26.0 L64.8,23.9 L66.0,20.0 L67.2,23.8 L68.4,19.5 L69.6,20.0 L70.8,20.4 L72.0,21.6 L73.2,22.3 L74.4,22.6 L75.6,26.1 L76.8,23.5 L78.0,23.0 L79.2,24.3 L80.4,24.8 L81.6,26.3 L82.8,26.6 L84.0,27.1 L85.2,27.7 L86.4,28.0 L87.6,26.0 L88.8,28.1 L90.0,27.3 L91.2,28.4 L92.4,28.5 L93.6,28.8 L94.8,29.5 L96.0,29.5 L97.2,29.5 L98.4,29.5 L99.6,29.5 L100.8,29.5 L100.8,29.5 L99.6,29.5 L98.4,29.5 L97.2,29.5 L96.0,29.5 L94.8,29.5 L93.6,30.1 L92.4,30.8 L91.2,31.2 L90.0,30.7 L88.8,31.6 L87.6,30.8 L86.4,32.4 L85.2,33.3 L84.0,33.4 L82.8,34.1 L81.6,33.5 L80.4,33.4 L79.2,33.0 L78.0,32.2 L76.8,36.6 L75.6,36.5 L74.4,34.8 L73.2,34.4 L72.0,33.7 L70.8,36.5 L69.6,35.4 L68.4,36.5 L67.2,36.5 L66.0,36.8 L64.8,40.0 L63.6,40.2 L62.4,34.8 L61.2,41.5 L60.0,35.3 L58.8,29.5 L57.6,29.5 L56.4,29.5 L55.2,29.5 L54.0,29.5 L52.8,29.5 L51.6,29.5 L50.4,29.5 L49.2,29.5 L48.0,29.5 L46.8,31.0 L45.6,32.2 L44.4,31.9 L43.2,32.5 L42.0,33.6 L40.8,33.4 L39.6,34.9 L38.4,34.6 L37.2,36.1 L36.0,37.1 L34.8,34.8 L33.6,36.2 L32.4,40.9 L31.2,35.9 L30.0,29.5 L28.8,29.5 L27.6,29.5 L26.4,29.5 L25.2,29.5 L24.0,29.5 L22.8,29.5 L21.6,29.9 L20.4,31.2 L19.2,32.0 L18.0,31.2 L16.8,32.2 L15.6,31.7 L14.4,32.9 L13.2,34.2 L12.0,35.8 L10.8,33.8 L9.6,37.6 L8.4,35.7 L7.2,36.5 L6.0,35.7 L4.8,40.0 L3.6,35.5 L2.4,32.7 L1.2,29.5 L0.0,29.5Z" fill="#5c5c5c" stroke="#161616" stroke-width="1"/></svg></div>
<div style="left:1367px;top:679px;width:99px;height:17px;overflow:hidden"><div class="t" style="left:3px;top:3.5px;font-size:11px;font-weight:bold;color:#0a0a0a">Take 1 (Audio 01_01)</div></div>
<div class="t" style="left:958px;top:684px;font-size:11px;font-weight:bold;color:#0a0a0a">l_01)</div>
<div style="left:502px;top:740px;width:122px;height:57px;background:#939496;border:1px solid #dfe0e3;overflow:hidden"><div style="left:3px;top:0px;width:1px;height:57px;background:#6e6f71"></div><div style="left:66px;top:0px;width:1px;height:57px;background:#6e6f71"></div><svg style="left:0;top:0" width="122" height="57"><path d="M0 29.5H122" stroke="#151515" stroke-width="1.2"/><path d="M0.0,29.5 L1.2,29.5 L2.4,29.5 L3.6,29.5 L4.8,23.3 L6.0,22.4 L7.2,25.1 L8.4,25.5 L9.6,27.9 L10.8,19.3 L12.0,24.1 L13.2,27.3 L14.4,26.4 L15.6,25.3 L16.8,25.4 L18.0,26.8 L19.2,25.0 L20.4,28.1 L21.6,28.3 L22.8,29.5 L24.0,29.5 L25.2,29.5 L26.4,29.5 L27.6,29.5 L28.8,24.7 L30.0,24.4 L31.2,19.6 L32.4,17.3 L33.6,18.2 L34.8,17.7 L36.0,17.6 L37.2,18.5 L38.4,20.0 L39.6,21.4 L40.8,25.0 L42.0,24.3 L43.2,23.1 L44.4,21.8 L45.6,22.7 L46.8,22.0 L48.0,25.0 L49.2,23.7 L50.4,24.2 L51.6,25.7 L52.8,25.7 L54.0,27.4 L55.2,27.6 L56.4,27.4 L57.6,27.9 L58.8,28.5 L60.0,29.5 L61.2,29.5 L62.4,29.5 L63.6,29.5 L64.8,29.5 L66.0,29.5 L67.2,22.4 L68.4,18.5 L69.6,18.6 L70.8,21.9 L72.0,22.5 L73.2,20.5 L74.4,24.6 L75.6,20.2 L76.8,20.4 L78.0,26.4 L79.2,22.9 L80.4,24.6 L81.6,22.8 L82.8,25.9 L84.0,26.6 L85.2,25.5 L86.4,26.7 L87.6,26.9 L88.8,28.2 L90.0,28.3 L91.2,28.6 L92.4,29.5 L93.6,26.7 L94.8,20.6 L96.0,21.0 L97.2,20.3 L98.4,21.0 L99.6,23.3 L100.8,21.1 L102.0,24.2 L103.2,25.9 L104.4,25.0 L105.6,24.7 L106.8,26.4 L108.0,25.9 L109.2,26.6 L110.4,26.7 L111.6,27.9 L112.8,28.5 L114.0,29.5 L115.2,29.5 L116.4,29.5 L117.6,29.5 L118.8,29.5 L120.0,29.5 L121.2,29.5 L121.2,29.5 L120.0,29.5 L118.8,29.5 L117.6,29.5 L116.4,29.5 L115.2,29.5 L114.0,29.5 L112.8,30.3 L111.6,31.4 L110.4,30.7 L109.2,31.7 L108.0,32.9 L106.8,34.7 L105.6,33.5 L104.4,31.9 L103.2,35.3 L102.0,32.1 L100.8,36.3 L99.6,36.2 L98.4,37.3 L97.2,37.2 L96.0,40.1 L94.8,37.1 L93.6,33.0 L92.4,29.5 L91.2,30.1 L90.0,30.8 L88.8,31.7 L87.6,32.9 L86.4,32.3 L85.2,33.3 L84.0,31.9 L82.8,33.6 L81.6,33.5 L80.4,36.6 L79.2,33.7 L78.0,36.3 L76.8,38.5 L75.6,36.0 L74.4,37.0 L73.2,34.7 L72.0,35.1 L70.8,36.4 L69.6,37.7 L68.4,36.1 L67.2,34.9 L66.0,29.5 L64.8,29.5 L63.6,29.5 L62.4,29.5 L61.2,29.5 L60.0,29.5 L58.8,30.9 L57.6,30.5 L56.4,31.8 L55.2,32.9 L54.0,32.3 L52.8,32.2 L51.6,31.8 L50.4,33.0 L49.2,34.6 L48.0,35.3 L46.8,33.9 L45.6,35.7 L44.4,33.2 L43.2,37.3 L42.0,35.6 L40.8,39.6 L39.6,38.0 L38.4,34.2 L37.2,37.3 L36.0,39.7 L34.8,41.2 L33.6,40.5 L32.4,41.1 L31.2,36.6 L30.0,34.3 L28.8,33.2 L27.6,29.5 L26.4,29.5 L25.2,29.5 L24.0,29.5 L22.8,29.5 L21.6,30.3 L20.4,30.8 L19.2,32.2 L18.0,35.9 L16.8,33.5 L15.6,36.6 L14.4,33.5 L13.2,34.3 L12.0,34.6 L10.8,35.0 L9.6,31.2 L8.4,31.3 L7.2,34.4 L6.0,32.9 L4.8,34.8 L3.6,29.5 L2.4,29.5 L1.2,29.5 L0.0,29.5Z" fill="#5c5c5c" stroke="#161616" stroke-width="1"/></svg></div>
<div style="left:503px;top:741px;width:120px;height:17px;overflow:hidden"><div class="t" style="left:3px;top:3.5px;font-size:11px;font-weight:bold;color:#0a0a0a">Take 3 (Audio 01_01)</div></div>
<div style="left:625px;top:740px;width:35px;height:57px;background:#939496;border:1px solid #dfe0e3;overflow:hidden"><div style="left:0;top:0;right:0;bottom:0;background-image:repeating-linear-gradient(45deg,rgba(0,0,0,0) 0 3.4px,rgba(60,60,60,.30) 3.4px 4.6px)"></div><div style="left:6px;top:0px;width:1px;height:57px;background:#6e6f71"></div><svg style="left:0;top:0" width="35" height="57"><path d="M0 29.5H35" stroke="#151515" stroke-width="1.2"/><path d="M0.0,29.5 L1.2,29.5 L2.4,29.5 L3.6,29.5 L4.8,29.5 L6.0,25.5 L7.2,21.9 L8.4,23.6 L9.6,22.0 L10.8,25.8 L12.0,25.4 L13.2,24.3 L14.4,26.0 L15.6,26.5 L16.8,27.9 L18.0,27.8 L19.2,28.5 L20.4,28.2 L21.6,29.0 L22.8,25.3 L24.0,21.2 L25.2,22.3 L26.4,25.0 L27.6,24.0 L28.8,26.2 L30.0,26.0 L31.2,25.3 L32.4,22.5 L33.6,23.5 L34.8,22.2 L34.8,35.9 L33.6,34.4 L32.4,34.7 L31.2,37.7 L30.0,33.0 L28.8,33.7 L27.6,32.5 L26.4,34.4 L25.2,36.7 L24.0,38.9 L22.8,38.1 L21.6,29.9 L20.4,31.0 L19.2,30.9 L18.0,33.0 L16.8,32.5 L15.6,32.3 L14.4,32.9 L13.2,32.1 L12.0,33.3 L10.8,34.6 L9.6,36.5 L8.4,34.5 L7.2,35.6 L6.0,34.0 L4.8,29.5 L3.6,29.5 L2.4,29.5 L1.2,29.5 L0.0,29.5Z" fill="#5c5c5c" stroke="#161616" stroke-width="1"/></svg></div>
<div style="left:661px;top:740px;width:89px;height:57px;background:#939496;border:1px solid #dfe0e3;overflow:hidden"><div style="left:33px;top:0px;width:1px;height:57px;background:#6e6f71"></div><svg style="left:0;top:0" width="89" height="57"><path d="M0 29.5H89" stroke="#151515" stroke-width="1.2"/><path d="M0.0,29.5 L1.2,29.5 L2.4,23.3 L3.6,23.0 L4.8,22.4 L6.0,24.9 L7.2,25.9 L8.4,27.7 L9.6,26.2 L10.8,19.8 L12.0,24.9 L13.2,22.8 L14.4,23.2 L15.6,24.2 L16.8,24.3 L18.0,26.2 L19.2,25.6 L20.4,23.2 L21.6,24.5 L22.8,26.6 L24.0,24.7 L25.2,28.0 L26.4,27.3 L27.6,28.2 L28.8,29.5 L30.0,29.5 L31.2,29.5 L32.4,29.5 L33.6,29.5 L34.8,29.5 L36.0,29.5 L37.2,16.4 L38.4,23.9 L39.6,24.2 L40.8,23.9 L42.0,25.1 L43.2,23.3 L44.4,27.0 L45.6,22.4 L46.8,24.1 L48.0,23.5 L49.2,19.7 L50.4,18.8 L51.6,17.9 L52.8,17.6 L54.0,20.3 L55.2,24.3 L56.4,23.6 L57.6,23.6 L58.8,24.4 L60.0,26.9 L61.2,28.1 L62.4,28.3 L63.6,29.5 L64.8,29.5 L66.0,29.5 L67.2,29.5 L68.4,29.5 L69.6,29.5 L70.8,29.5 L72.0,29.5 L73.2,29.5 L74.4,26.6 L75.6,20.1 L76.8,22.1 L78.0,20.5 L79.2,22.2 L80.4,24.3 L81.6,19.9 L82.8,20.4 L84.0,18.7 L85.2,20.7 L86.4,24.4 L87.6,24.3 L88.8,20.8 L88.8,34.2 L87.6,32.9 L86.4,39.1 L85.2,36.0 L84.0,40.8 L82.8,41.3 L81.6,39.6 L80.4,34.1 L79.2,38.9 L78.0,43.0 L76.8,37.2 L75.6,34.7 L74.4,31.9 L73.2,29.5 L72.0,29.5 L70.8,29.5 L69.6,29.5 L68.4,29.5 L67.2,29.5 L66.0,29.5 L64.8,29.5 L63.6,29.5 L62.4,30.6 L61.2,30.9 L60.0,32.1 L58.8,35.8 L57.6,33.9 L56.4,36.8 L55.2,39.0 L54.0,34.2 L52.8,37.9 L51.6,42.2 L50.4,43.7 L49.2,42.8 L48.0,35.4 L46.8,35.7 L45.6,32.8 L44.4,37.2 L43.2,32.8 L42.0,36.9 L40.8,39.9 L39.6,39.7 L38.4,35.6 L37.2,40.0 L36.0,29.5 L34.8,29.5 L33.6,29.5 L32.4,29.5 L31.2,29.5 L30.0,29.5 L28.8,29.5 L27.6,30.1 L26.4,31.9 L25.2,31.9 L24.0,33.2 L22.8,34.0 L21.6,33.6 L20.4,32.2 L19.2,36.6 L18.0,33.2 L16.8,32.9 L15.6,35.4 L14.4,32.8 L13.2,37.8 L12.0,39.2 L10.8,37.2 L9.6,31.6 L8.4,33.9 L7.2,31.6 L6.0,34.4 L4.8,35.8 L3.6,35.9 L2.4,33.7 L1.2,29.5 L0.0,29.5Z" fill="#5c5c5c" stroke="#161616" stroke-width="1"/></svg></div>
<div style="left:751px;top:740px;width:116px;height:57px;background:#939496;border:1px solid #dfe0e3;overflow:hidden"><div style="left:0;top:0;right:0;bottom:0;background-image:repeating-linear-gradient(45deg,rgba(0,0,0,0) 0 3.4px,rgba(60,60,60,.30) 3.4px 4.6px)"></div><div style="left:6px;top:0px;width:1px;height:57px;background:#6e6f71"></div><div style="left:69px;top:0px;width:1px;height:57px;background:#6e6f71"></div><svg style="left:0;top:0" width="116" height="57"><path d="M0 29.5H116" stroke="#151515" stroke-width="1.2"/><path d="M0.0,29.5 L1.2,29.5 L2.4,29.5 L3.6,29.5 L4.8,28.9 L6.0,23.0 L7.2,15.6 L8.4,20.5 L9.6,16.8 L10.8,22.2 L12.0,24.8 L13.2,19.2 L14.4,25.5 L15.6,20.5 L16.8,23.3 L18.0,21.9 L19.2,23.2 L20.4,23.9 L21.6,23.3 L22.8,23.3 L24.0,27.1 L25.2,26.7 L26.4,25.5 L27.6,26.5 L28.8,27.4 L30.0,28.3 L31.2,28.4 L32.4,28.3 L33.6,25.2 L34.8,24.6 L36.0,21.6 L37.2,22.1 L38.4,22.3 L39.6,26.8 L40.8,22.9 L42.0,26.0 L43.2,23.8 L44.4,23.9 L45.6,27.4 L46.8,25.2 L48.0,26.9 L49.2,27.8 L50.4,28.0 L51.6,28.1 L52.8,29.1 L54.0,29.5 L55.2,29.5 L56.4,29.5 L57.6,27.9 L58.8,19.2 L60.0,17.3 L61.2,18.4 L62.4,23.3 L63.6,20.8 L64.8,22.4 L66.0,27.0 L67.2,26.3 L68.4,14.0 L69.6,21.3 L70.8,19.2 L72.0,22.4 L73.2,19.7 L74.4,20.9 L75.6,23.0 L76.8,25.3 L78.0,16.3 L79.2,19.6 L80.4,18.5 L81.6,25.7 L82.8,21.3 L84.0,25.5 L85.2,27.0 L86.4,25.5 L87.6,25.7 L88.8,28.0 L90.0,29.5 L91.2,29.5 L92.4,29.5 L93.6,29.5 L94.8,28.0 L96.0,22.1 L97.2,22.8 L98.4,22.8 L99.6,26.8 L100.8,26.1 L102.0,26.7 L103.2,23.5 L104.4,26.5 L105.6,24.0 L106.8,24.6 L108.0,26.8 L109.2,27.1 L110.4,26.1 L111.6,27.8 L112.8,27.5 L114.0,28.1 L115.2,28.3 L115.2,30.9 L114.0,31.3 L112.8,32.2 L111.6,31.2 L110.4,32.6 L109.2,32.3 L108.0,31.7 L106.8,32.5 L105.6,34.9 L104.4,33.7 L103.2,35.7 L102.0,34.7 L100.8,32.0 L99.6,36.5 L98.4,36.9 L97.2,34.7 L96.0,35.0 L94.8,31.0 L93.6,29.5 L92.4,29.5 L91.2,29.5 L90.0,29.5 L88.8,32.6 L87.6,32.4 L86.4,33.9 L85.2,32.9 L84.0,33.9 L82.8,35.3 L81.6,36.8 L80.4,40.8 L79.2,37.2 L78.0,42.2 L76.8,35.8 L75.6,36.5 L74.4,38.2 L73.2,33.8 L72.0,37.8 L70.8,37.9 L69.6,41.2 L68.4,38.5 L67.2,31.7 L66.0,33.0 L64.8,35.9 L63.6,34.8 L62.4,37.5 L61.2,39.8 L60.0,34.9 L58.8,41.6 L57.6,30.3 L56.4,29.5 L55.2,29.5 L54.0,29.5 L52.8,30.1 L51.6,30.1 L50.4,31.1 L49.2,31.2 L48.0,32.0 L46.8,33.2 L45.6,33.3 L44.4,32.8 L43.2,33.2 L42.0,35.8 L40.8,35.8 L39.6,34.3 L38.4,34.6 L37.2,35.0 L36.0,38.4 L34.8,35.0 L33.6,38.4 L32.4,31.6 L31.2,30.4 L30.0,31.2 L28.8,31.3 L27.6,33.5 L26.4,33.2 L25.2,31.2 L24.0,32.6 L22.8,35.8 L21.6,34.2 L20.4,36.6 L19.2,34.1 L18.0,36.9 L16.8,38.6 L15.6,38.0 L14.4,38.8 L13.2,37.4 L12.0,39.7 L10.8,36.7 L9.6,36.3 L8.4,39.3 L7.2,34.7 L6.0,41.2 L4.8,30.8 L3.6,29.5 L2.4,29.5 L1.2,29.5 L0.0,29.5Z" fill="#5c5c5c" stroke="#161616" stroke-width="1"/></svg></div>
<div style="left:752px;top:741px;width:114px;height:17px;overflow:hidden"><div class="t" style="left:3px;top:3.5px;font-size:11px;font-weight:bold;color:#0a0a0a">Take 3 (Audio 01_01)</div></div>
<div style="left:869px;top:740px;width:109px;height:57px;background:#939496;border:1px solid #dfe0e3;overflow:hidden"><div style="left:0;top:0;right:0;bottom:0;background-image:repeating-linear-gradient(45deg,rgba(0,0,0,0) 0 3.4px,rgba(60,60,60,.30) 3.4px 4.6px)"></div><div style="left:14px;top:0px;width:1px;height:57px;background:#6e6f71"></div><div style="left:77px;top:0px;width:1px;height:57px;background:#6e6f71"></div><svg style="left:0;top:0" width="109" height="57"><path d="M0 29.5H109" stroke="#151515" stroke-width="1.2"/><path d="M0.0,29.5 L1.2,29.5 L2.4,29.5 L3.6,28.9 L4.8,25.0 L6.0,27.3 L7.2,24.3 L8.4,24.3 L9.6,25.8 L10.8,26.0 L12.0,27.4 L13.2,27.6 L14.4,24.7 L15.6,21.3 L16.8,22.2 L18.0,25.3 L19.2,25.2 L20.4,25.0 L21.6,27.4 L22.8,25.2 L24.0,26.7 L25.2,27.7 L26.4,29.0 L27.6,29.5 L28.8,25.4 L30.0,13.6 L31.2,11.4 L32.4,14.8 L33.6,20.1 L34.8,19.8 L36.0,13.5 L37.2,23.8 L38.4,17.4 L39.6,18.8 L40.8,21.8 L42.0,23.8 L43.2,16.9 L44.4,23.4 L45.6,19.9 L46.8,19.2 L48.0,21.4 L49.2,21.3 L50.4,25.1 L51.6,26.6 L52.8,23.4 L54.0,25.2 L55.2,25.6 L56.4,25.0 L57.6,25.4 L58.8,25.4 L60.0,24.9 L61.2,18.3 L62.4,19.1 L63.6,23.4 L64.8,19.6 L66.0,25.6 L67.2,22.8 L68.4,24.6 L69.6,23.9 L70.8,24.1 L72.0,25.8 L73.2,25.2 L74.4,27.9 L75.6,27.2 L76.8,26.9 L78.0,28.6 L79.2,29.5 L80.4,29.5 L81.6,29.5 L82.8,29.5 L84.0,29.5 L85.2,29.5 L86.4,29.5 L87.6,29.5 L88.8,25.7 L90.0,25.2 L91.2,27.0 L92.4,24.7 L93.6,25.2 L94.8,26.4 L96.0,27.3 L97.2,26.4 L98.4,26.4 L99.6,24.6 L100.8,25.4 L102.0,26.2 L103.2,27.3 L104.4,28.0 L105.6,25.6 L106.8,26.9 L108.0,25.1 L108.0,33.7 L106.8,34.4 L105.6,32.7 L104.4,30.9 L103.2,32.5 L102.0,33.0 L100.8,34.8 L99.6,35.0 L98.4,33.6 L97.2,31.9 L96.0,30.9 L94.8,31.4 L93.6,33.9 L92.4,33.9 L91.2,34.4 L90.0,32.7 L88.8,31.5 L87.6,29.5 L86.4,29.5 L85.2,29.5 L84.0,29.5 L82.8,29.5 L81.6,29.5 L80.4,29.5 L79.2,29.5 L78.0,30.0 L76.8,31.1 L75.6,31.0 L74.4,31.9 L73.2,32.7 L72.0,34.1 L70.8,35.4 L69.6,35.8 L68.4,35.2 L67.2,34.6 L66.0,37.8 L64.8,33.7 L63.6,38.0 L62.4,39.0 L61.2,38.1 L60.0,41.2 L58.8,38.6 L57.6,32.7 L56.4,34.3 L55.2,33.9 L54.0,33.4 L52.8,37.0 L51.6,34.5 L50.4,36.0 L49.2,38.3 L48.0,35.3 L46.8,40.0 L45.6,39.4 L44.4,39.6 L43.2,40.9 L42.0,40.7 L40.8,35.2 L39.6,37.0 L38.4,38.3 L37.2,45.3 L36.0,38.5 L34.8,43.5 L33.6,39.9 L32.4,42.4 L31.2,45.6 L30.0,34.8 L28.8,34.2 L27.6,29.5 L26.4,29.9 L25.2,30.8 L24.0,32.5 L22.8,33.1 L21.6,33.4 L20.4,34.0 L19.2,34.7 L18.0,34.7 L16.8,35.4 L15.6,34.7 L14.4,33.9 L13.2,31.2 L12.0,32.6 L10.8,33.2 L9.6,33.4 L8.4,33.5 L7.2,34.5 L6.0,33.5 L4.8,34.5 L3.6,30.3 L2.4,29.5 L1.2,29.5 L0.0,29.5Z" fill="#5c5c5c" stroke="#161616" stroke-width="1"/></svg></div>
<div style="left:870px;top:741px;width:107px;height:17px;overflow:hidden"><div class="t" style="left:3px;top:3.5px;font-size:11px;font-weight:bold;color:#0a0a0a">Take 2 (Audio 01_02)</div></div>
<div style="left:980px;top:740px;width:38px;height:57px;background:#939496;border:1px solid #dfe0e3;overflow:hidden"><div style="left:29px;top:0px;width:1px;height:57px;background:#6e6f71"></div><svg style="left:0;top:0" width="38" height="57"><path d="M0 29.5H38" stroke="#151515" stroke-width="1.2"/><path d="M0.0,29.5 L1.2,29.5 L2.4,29.5 L3.6,29.5 L4.8,29.5 L6.0,29.5 L7.2,29.5 L8.4,22.2 L9.6,22.7 L10.8,19.1 L12.0,16.5 L13.2,17.3 L14.4,23.7 L15.6,24.8 L16.8,21.3 L18.0,23.9 L19.2,21.4 L20.4,25.7 L21.6,26.2 L22.8,22.5 L24.0,25.4 L25.2,26.5 L26.4,26.7 L27.6,25.8 L28.8,28.0 L30.0,28.2 L31.2,27.3 L32.4,21.2 L33.6,23.6 L34.8,24.9 L36.0,19.7 L37.2,26.4 L37.2,38.2 L36.0,34.9 L34.8,34.5 L33.6,38.3 L32.4,37.9 L31.2,32.5 L30.0,31.8 L28.8,31.7 L27.6,33.1 L26.4,33.5 L25.2,32.1 L24.0,35.6 L22.8,33.3 L21.6,34.5 L20.4,35.0 L19.2,34.9 L18.0,37.1 L16.8,34.4 L15.6,39.4 L14.4,37.9 L13.2,38.4 L12.0,35.3 L10.8,43.2 L9.6,43.3 L8.4,36.9 L7.2,29.5 L6.0,29.5 L4.8,29.5 L3.6,29.5 L2.4,29.5 L1.2,29.5 L0.0,29.5Z" fill="#5c5c5c" stroke="#161616" stroke-width="1"/></svg></div>
<div style="left:1020px;top:740px;width:29px;height:57px;background:#939496;border:1px solid #dfe0e3;overflow:hidden"><div style="left:0;top:0;right:0;bottom:0;background-image:repeating-linear-gradient(45deg,rgba(0,0,0,0) 0 3.4px,rgba(60,60,60,.30) 3.4px 4.6px)"></div><svg style="left:0;top:0" width="29" height="57"><path d="M0 29.5H29" stroke="#151515" stroke-width="1.2"/><path d="M0.0,29.5 L1.2,29.5 L2.4,29.5 L3.6,29.5 L4.8,22.2 L6.0,19.9 L7.2,20.7 L8.4,22.4 L9.6,22.8 L10.8,25.0 L12.0,25.3 L13.2,27.3 L14.4,20.3 L15.6,22.4 L16.8,24.1 L18.0,21.3 L19.2,25.9 L20.4,24.1 L21.6,24.0 L22.8,24.7 L24.0,26.0 L25.2,28.2 L26.4,29.5 L27.6,29.5 L28.8,29.5 L28.8,29.5 L27.6,29.5 L26.4,29.5 L25.2,30.3 L24.0,32.1 L22.8,32.3 L21.6,32.1 L20.4,34.6 L19.2,32.9 L18.0,38.8 L16.8,38.8 L15.6,38.2 L14.4,36.4 L13.2,32.5 L12.0,33.5 L10.8,33.2 L9.6,34.0 L8.4,32.2 L7.2,37.6 L6.0,32.5 L4.8,36.2 L3.6,29.5 L2.4,29.5 L1.2,29.5 L0.0,29.5Z" fill="#5c5c5c" stroke="#161616" stroke-width="1"/></svg></div>
<div style="left:1050px;top:740px;width:31px;height:57px;background:#939496;border:1px solid #dfe0e3;overflow:hidden"><div style="left:22px;top:0px;width:1px;height:57px;background:#6e6f71"></div><svg style="left:0;top:0" width="31" height="57"><path d="M0 29.5H31" stroke="#151515" stroke-width="1.2"/><path d="M0.0,29.5 L1.2,29.5 L2.4,29.5 L3.6,29.5 L4.8,29.5 L6.0,18.6 L7.2,16.7 L8.4,20.3 L9.6,19.9 L10.8,22.7 L12.0,26.9 L13.2,22.9 L14.4,17.1 L15.6,20.9 L16.8,21.2 L18.0,24.8 L19.2,27.8 L20.4,26.4 L21.6,28.8 L22.8,29.5 L24.0,29.5 L25.2,29.5 L26.4,29.5 L27.6,29.5 L28.8,29.5 L30.0,29.5 L30.0,29.5 L28.8,29.5 L27.6,29.5 L26.4,29.5 L25.2,29.5 L24.0,29.5 L22.8,29.5 L21.6,30.3 L20.4,32.2 L19.2,34.3 L18.0,34.3 L16.8,33.8 L15.6,40.4 L14.4,34.5 L13.2,41.2 L12.0,34.6 L10.8,36.1 L9.6,37.9 L8.4,36.3 L7.2,41.2 L6.0,37.2 L4.8,29.5 L3.6,29.5 L2.4,29.5 L1.2,29.5 L0.0,29.5Z" fill="#5c5c5c" stroke="#161616" stroke-width="1"/></svg></div>
<div style="left:1082px;top:740px;width:30px;height:57px;background:#939496;border:1px solid #dfe0e3;overflow:hidden"><svg style="left:0;top:0" width="30" height="57"><path d="M0 29.5H30" stroke="#151515" stroke-width="1.2"/><path d="M0.0,29.5 L1.2,29.5 L2.4,27.1 L3.6,25.3 L4.8,23.8 L6.0,23.7 L7.2,26.1 L8.4,25.6 L9.6,24.1 L10.8,22.7 L12.0,23.2 L13.2,24.7 L14.4,24.2 L15.6,23.6 L16.8,25.1 L18.0,27.0 L19.2,26.7 L20.4,25.6 L21.6,26.5 L22.8,27.8 L24.0,27.4 L25.2,28.2 L26.4,28.8 L27.6,29.5 L28.8,29.5 L30.0,29.5 L30.0,29.5 L28.8,29.5 L27.6,29.5 L26.4,30.1 L25.2,29.9 L24.0,30.4 L22.8,32.4 L21.6,32.6 L20.4,32.4 L19.2,33.0 L18.0,34.7 L16.8,33.9 L15.6,34.3 L14.4,34.9 L13.2,34.9 L12.0,32.6 L10.8,37.6 L9.6,35.1 L8.4,37.3 L7.2,37.6 L6.0,35.9 L4.8,39.5 L3.6,37.8 L2.4,32.3 L1.2,29.5 L0.0,29.5Z" fill="#5c5c5c" stroke="#161616" stroke-width="1"/></svg></div>
<div style="left:1113px;top:740px;width:31px;height:57px;background:#939496;border:1px solid #dfe0e3;overflow:hidden"><div style="left:22px;top:0px;width:1px;height:57px;background:#6e6f71"></div><svg style="left:0;top:0" width="31" height="57"><path d="M0 29.5H31" stroke="#151515" stroke-width="1.2"/><path d="M0.0,29.5 L1.2,29.5 L2.4,29.5 L3.6,29.5 L4.8,29.5 L6.0,20.0 L7.2,21.5 L8.4,16.0 L9.6,23.6 L10.8,22.5 L12.0,18.2 L13.2,19.2 L14.4,25.1 L15.6,25.7 L16.8,24.0 L18.0,22.0 L19.2,25.3 L20.4,25.4 L21.6,26.7 L22.8,25.3 L24.0,27.8 L25.2,28.2 L26.4,29.5 L27.6,29.5 L28.8,29.5 L30.0,29.5 L30.0,29.5 L28.8,29.5 L27.6,29.5 L26.4,29.5 L25.2,30.3 L24.0,32.4 L22.8,32.9 L21.6,33.1 L20.4,35.4 L19.2,35.5 L18.0,32.1 L16.8,36.9 L15.6,37.1 L14.4,39.3 L13.2,37.0 L12.0,41.6 L10.8,34.7 L9.6,38.0 L8.4,38.4 L7.2,40.7 L6.0,41.0 L4.8,29.5 L3.6,29.5 L2.4,29.5 L1.2,29.5 L0.0,29.5Z" fill="#5c5c5c" stroke="#161616" stroke-width="1"/></svg></div>
<div style="left:1145px;top:740px;width:30px;height:57px;background:#939496;border:1px solid #dfe0e3;overflow:hidden"><svg style="left:0;top:0" width="30" height="57"><path d="M0 29.5H30" stroke="#151515" stroke-width="1.2"/><path d="M0.0,29.5 L1.2,29.5 L2.4,29.5 L3.6,27.4 L4.8,22.3 L6.0,20.9 L7.2,20.3 L8.4,23.2 L9.6,26.1 L10.8,22.0 L12.0,21.5 L13.2,23.9 L14.4,23.7 L15.6,22.1 L16.8,22.9 L18.0,22.6 L19.2,27.4 L20.4,26.9 L21.6,24.9 L22.8,27.4 L24.0,25.3 L25.2,26.7 L26.4,26.8 L27.6,28.1 L28.8,27.9 L30.0,28.8 L30.0,30.4 L28.8,30.9 L27.6,31.1 L26.4,32.2 L25.2,32.7 L24.0,33.7 L22.8,33.2 L21.6,34.2 L20.4,34.6 L19.2,32.0 L18.0,33.0 L16.8,32.2 L15.6,36.0 L14.4,37.0 L13.2,34.8 L12.0,38.8 L10.8,33.1 L9.6,34.2 L8.4,38.6 L7.2,36.9 L6.0,36.8 L4.8,38.0 L3.6,31.2 L2.4,29.5 L1.2,29.5 L0.0,29.5Z" fill="#5c5c5c" stroke="#161616" stroke-width="1"/></svg></div>
<div style="left:1176px;top:740px;width:61px;height:57px;background:#939496;border:1px solid #dfe0e3;overflow:hidden"><div style="left:22px;top:0px;width:1px;height:57px;background:#6e6f71"></div><svg style="left:0;top:0" width="61" height="57"><path d="M0 29.5H61" stroke="#151515" stroke-width="1.2"/><path d="M0.0,29.5 L1.2,29.5 L2.4,29.5 L3.6,29.5 L4.8,29.5 L6.0,29.5 L7.2,29.5 L8.4,27.0 L9.6,19.0 L10.8,23.4 L12.0,21.9 L13.2,20.2 L14.4,25.6 L15.6,24.1 L16.8,25.6 L18.0,22.4 L19.2,24.6 L20.4,24.9 L21.6,27.5 L22.8,29.5 L24.0,29.5 L25.2,28.3 L26.4,20.7 L27.6,19.6 L28.8,13.7 L30.0,21.0 L31.2,14.4 L32.4,16.0 L33.6,20.9 L34.8,23.0 L36.0,16.7 L37.2,18.8 L38.4,21.7 L39.6,18.7 L40.8,16.9 L42.0,18.3 L43.2,18.1 L44.4,18.6 L45.6,20.5 L46.8,25.6 L48.0,26.5 L49.2,23.5 L50.4,21.4 L51.6,22.6 L52.8,22.6 L54.0,25.7 L55.2,26.5 L56.4,26.9 L57.6,25.4 L58.8,26.2 L60.0,28.0 L60.0,30.8 L58.8,32.1 L57.6,32.1 L56.4,31.8 L55.2,32.3 L54.0,35.8 L52.8,31.9 L51.6,34.7 L50.4,33.3 L49.2,33.7 L48.0,34.9 L46.8,37.9 L45.6,39.4 L44.4,35.5 L43.2,37.3 L42.0,39.7 L40.8,39.4 L39.6,36.2 L38.4,40.3 L37.2,42.8 L36.0,37.6 L34.8,37.5 L33.6,42.1 L32.4,38.5 L31.2,36.8 L30.0,44.9 L28.8,42.8 L27.6,39.5 L26.4,37.6 L25.2,30.9 L24.0,29.5 L22.8,29.5 L21.6,32.4 L20.4,32.7 L19.2,35.6 L18.0,34.7 L16.8,35.0 L15.6,33.1 L14.4,37.9 L13.2,35.4 L12.0,36.3 L10.8,38.4 L9.6,37.9 L8.4,35.7 L7.2,29.5 L6.0,29.5 L4.8,29.5 L3.6,29.5 L2.4,29.5 L1.2,29.5 L0.0,29.5Z" fill="#5c5c5c" stroke="#161616" stroke-width="1"/></svg></div>
<div style="left:1177px;top:741px;width:59px;height:17px;overflow:hidden"><div class="t" style="left:3px;top:3.5px;font-size:11px;font-weight:bold;color:#0a0a0a">Take 3 (Audio 01_01)</div></div>
<div style="left:1240px;top:740px;width:125px;height:57px;background:#939496;border:1px solid #dfe0e3;overflow:hidden"><div style="left:21px;top:0px;width:1px;height:57px;background:#6e6f71"></div><div style="left:84px;top:0px;width:1px;height:57px;background:#6e6f71"></div><svg style="left:0;top:0" width="125" height="57"><path d="M0 29.5H125" stroke="#151515" stroke-width="1.2"/><path d="M0.0,29.5 L1.2,29.5 L2.4,29.5 L3.6,29.5 L4.8,29.5 L6.0,15.5 L7.2,19.9 L8.4,21.2 L9.6,18.7 L10.8,22.3 L12.0,21.5 L13.2,26.7 L14.4,25.2 L15.6,24.6 L16.8,17.9 L18.0,19.6 L19.2,20.4 L20.4,21.4 L21.6,25.3 L22.8,25.2 L24.0,26.8 L25.2,20.9 L26.4,22.8 L27.6,21.0 L28.8,21.7 L30.0,25.3 L31.2,26.5 L32.4,25.7 L33.6,26.1 L34.8,26.6 L36.0,29.5 L37.2,29.5 L38.4,29.5 L39.6,29.5 L40.8,29.5 L42.0,29.5 L43.2,29.5 L44.4,29.5 L45.6,29.5 L46.8,28.0 L48.0,18.6 L49.2,21.7 L50.4,23.5 L51.6,20.0 L52.8,22.2 L54.0,20.1 L55.2,26.3 L56.4,25.6 L57.6,21.5 L58.8,25.0 L60.0,23.2 L61.2,22.4 L62.4,24.8 L63.6,25.8 L64.8,23.5 L66.0,24.4 L67.2,24.3 L68.4,24.9 L69.6,25.8 L70.8,25.4 L72.0,25.6 L73.2,27.0 L74.4,27.2 L75.6,27.3 L76.8,28.6 L78.0,27.8 L79.2,28.5 L80.4,28.6 L81.6,20.8 L82.8,18.6 L84.0,18.3 L85.2,24.5 L86.4,22.7 L87.6,21.0 L88.8,22.7 L90.0,23.9 L91.2,24.6 L92.4,27.1 L93.6,26.8 L94.8,26.6 L96.0,28.2 L97.2,27.9 L98.4,28.9 L99.6,29.5 L100.8,29.5 L102.0,26.0 L103.2,22.8 L104.4,23.3 L105.6,24.2 L106.8,25.3 L108.0,22.7 L109.2,26.0 L110.4,22.2 L111.6,25.8 L112.8,26.6 L114.0,26.9 L115.2,23.9 L116.4,27.2 L117.6,25.0 L118.8,27.4 L120.0,28.2 L121.2,27.3 L122.4,28.0 L123.6,27.5 L124.8,27.8 L124.8,31.1 L123.6,31.8 L122.4,30.8 L121.2,31.1 L120.0,32.1 L118.8,33.8 L117.6,33.9 L116.4,34.4 L115.2,31.9 L114.0,33.1 L112.8,32.9 L111.6,33.8 L110.4,33.7 L109.2,35.4 L108.0,33.7 L106.8,34.6 L105.6,38.6 L104.4,37.7 L103.2,35.6 L102.0,32.0 L100.8,29.5 L99.6,29.5 L98.4,30.2 L97.2,31.2 L96.0,31.5 L94.8,31.9 L93.6,34.1 L92.4,32.9 L91.2,34.6 L90.0,34.5 L88.8,32.9 L87.6,38.5 L86.4,36.3 L85.2,37.4 L84.0,39.3 L82.8,34.1 L81.6,41.1 L80.4,30.4 L79.2,30.6 L78.0,31.0 L76.8,31.0 L75.6,32.5 L74.4,32.5 L73.2,31.6 L72.0,32.8 L70.8,32.8 L69.6,32.0 L68.4,34.9 L67.2,31.5 L66.0,33.6 L64.8,32.5 L63.6,35.0 L62.4,36.9 L61.2,36.8 L60.0,35.3 L58.8,37.3 L57.6,35.3 L56.4,37.1 L55.2,38.7 L54.0,39.2 L52.8,38.7 L51.6,35.8 L50.4,36.4 L49.2,35.3 L48.0,37.8 L46.8,31.9 L45.6,29.5 L44.4,29.5 L43.2,29.5 L42.0,29.5 L40.8,29.5 L39.6,29.5 L38.4,29.5 L37.2,29.5 L36.0,29.5 L34.8,33.1 L33.6,34.1 L32.4,35.5 L31.2,34.4 L30.0,37.5 L28.8,38.0 L27.6,37.0 L26.4,36.5 L25.2,38.5 L24.0,34.8 L22.8,35.3 L21.6,32.4 L20.4,35.9 L19.2,37.8 L18.0,34.4 L16.8,34.6 L15.6,35.2 L14.4,35.2 L13.2,35.4 L12.0,34.3 L10.8,40.4 L9.6,38.8 L8.4,36.0 L7.2,43.5 L6.0,40.7 L4.8,29.5 L3.6,29.5 L2.4,29.5 L1.2,29.5 L0.0,29.5Z" fill="#5c5c5c" stroke="#161616" stroke-width="1"/></svg></div>
<div style="left:1241px;top:741px;width:123px;height:17px;overflow:hidden"><div class="t" style="left:3px;top:3.5px;font-size:11px;font-weight:bold;color:#0a0a0a">Take 3 (Audio 01_01)</div></div>
<div style="left:1366px;top:740px;width:101px;height:57px;background:#939496;border:1px solid #dfe0e3;overflow:hidden"><div style="left:0;top:0;right:0;bottom:0;background-image:repeating-linear-gradient(45deg,rgba(0,0,0,0) 0 3.4px,rgba(60,60,60,.30) 3.4px 4.6px)"></div><div style="left:21px;top:0px;width:1px;height:57px;background:#6e6f71"></div><div style="left:84px;top:0px;width:1px;height:57px;background:#6e6f71"></div><svg style="left:0;top:0" width="101" height="57"><path d="M0 29.5H101" stroke="#151515" stroke-width="1.2"/><path d="M0.0,29.5 L1.2,29.5 L2.4,29.5 L3.6,29.5 L4.8,29.5 L6.0,29.5 L7.2,29.5 L8.4,14.4 L9.6,19.1 L10.8,20.4 L12.0,26.9 L13.2,23.2 L14.4,19.4 L15.6,21.0 L16.8,25.9 L18.0,27.2 L19.2,24.5 L20.4,23.6 L21.6,24.6 L22.8,27.1 L24.0,28.4 L25.2,29.5 L26.4,29.5 L27.6,29.5 L28.8,29.5 L30.0,25.1 L31.2,12.4 L32.4,20.4 L33.6,19.8 L34.8,16.4 L36.0,18.5 L37.2,15.5 L38.4,18.5 L39.6,21.2 L40.8,17.1 L42.0,24.9 L43.2,22.4 L44.4,22.1 L45.6,23.0 L46.8,20.8 L48.0,25.2 L49.2,23.6 L50.4,25.1 L51.6,26.1 L52.8,23.8 L54.0,25.5 L55.2,25.0 L56.4,27.0 L57.6,26.3 L58.8,21.9 L60.0,16.9 L61.2,21.9 L62.4,19.3 L63.6,21.9 L64.8,21.2 L66.0,18.3 L67.2,25.4 L68.4,19.8 L69.6,22.1 L70.8,22.4 L72.0,24.3 L73.2,23.5 L74.4,24.7 L75.6,22.0 L76.8,24.1 L78.0,25.3 L79.2,26.8 L80.4,25.0 L81.6,25.1 L82.8,27.4 L84.0,25.5 L85.2,26.2 L86.4,28.0 L87.6,27.4 L88.8,26.8 L90.0,26.8 L91.2,28.6 L92.4,28.7 L93.6,28.2 L94.8,28.8 L96.0,27.3 L97.2,25.2 L98.4,22.7 L99.6,24.0 L100.8,25.2 L100.8,37.6 L99.6,38.2 L98.4,34.1 L97.2,35.2 L96.0,31.3 L94.8,30.1 L93.6,30.5 L92.4,31.0 L91.2,30.8 L90.0,32.1 L88.8,33.1 L87.6,31.9 L86.4,31.6 L85.2,33.6 L84.0,34.2 L82.8,32.1 L81.6,34.3 L80.4,34.1 L79.2,35.3 L78.0,36.0 L76.8,35.9 L75.6,36.2 L74.4,35.5 L73.2,38.1 L72.0,38.5 L70.8,38.7 L69.6,39.4 L68.4,36.0 L67.2,33.3 L66.0,39.9 L64.8,38.9 L63.6,35.8 L62.4,37.4 L61.2,36.2 L60.0,36.9 L58.8,34.2 L57.6,33.1 L56.4,32.5 L55.2,32.4 L54.0,34.2 L52.8,32.6 L51.6,34.1 L50.4,37.0 L49.2,37.6 L48.0,36.3 L46.8,38.4 L45.6,36.8 L44.4,37.1 L43.2,37.2 L42.0,34.8 L40.8,42.0 L39.6,41.5 L38.4,39.8 L37.2,42.4 L36.0,43.8 L34.8,40.6 L33.6,45.0 L32.4,41.7 L31.2,41.8 L30.0,32.9 L28.8,29.5 L27.6,29.5 L26.4,29.5 L25.2,29.5 L24.0,30.3 L22.8,31.8 L21.6,34.9 L20.4,35.1 L19.2,36.6 L18.0,32.6 L16.8,33.9 L15.6,32.6 L14.4,36.5 L13.2,41.5 L12.0,36.8 L10.8,36.6 L9.6,34.4 L8.4,44.9 L7.2,29.5 L6.0,29.5 L4.8,29.5 L3.6,29.5 L2.4,29.5 L1.2,29.5 L0.0,29.5Z" fill="#5c5c5c" stroke="#161616" stroke-width="1"/></svg></div>
<div style="left:1367px;top:741px;width:99px;height:17px;overflow:hidden"><div class="t" style="left:3px;top:3.5px;font-size:11px;font-weight:bold;color:#0a0a0a">Take 1 (Audio 01_01)</div></div>
<div style="left:382px;top:306px;width:9px;height:15.5px;background:#a2a2a4;border:1px solid #d4d4d6;overflow:hidden"><div class="t" style="left:0px;top:1px;font-size:13px;color:#111;letter-spacing:-0.4px">C</div></div>
<div style="left:397px;top:306px;width:27px;height:15.5px;background:#a2a2a4;border:1px solid #d4d4d6;overflow:hidden"><div class="t" style="left:0px;top:1px;font-size:13px;color:#111;letter-spacing:-0.4px">A<span style="font-size:9.5px;letter-spacing:-0.1px">min</span></div></div>
<div style="left:444px;top:306px;width:10px;height:15.5px;background:#a2a2a4;border:1px solid #d4d4d6;overflow:hidden"><div class="t" style="left:0px;top:1px;font-size:13px;color:#111;letter-spacing:-0.4px">C</div></div>
<div style="left:460px;top:306px;width:27px;height:15.5px;background:#a2a2a4;border:1px solid #d4d4d6;overflow:hidden"><div class="t" style="left:0px;top:1px;font-size:13px;color:#111;letter-spacing:-0.4px">A<span style="font-size:9.5px;letter-spacing:-0.1px">min</span></div></div>
<div style="left:507px;top:306px;width:26px;height:15.5px;background:#a2a2a4;border:1px solid #d4d4d6;overflow:hidden"><div class="t" style="left:0px;top:1px;font-size:13px;color:#111;letter-spacing:-0.4px">E<span style="font-size:9.5px;letter-spacing:-0.1px">min</span></div></div>
<div style="left:539px;top:306px;width:10px;height:15.5px;background:#a2a2a4;border:1px solid #d4d4d6;overflow:hidden"><div class="t" style="left:0px;top:1px;font-size:13px;color:#111;letter-spacing:-0.4px">C</div></div>
<div style="left:570px;top:306px;width:10px;height:15.5px;background:#a2a2a4;border:1px solid #d4d4d6;overflow:hidden"><div class="t" style="left:0px;top:1px;font-size:13px;color:#111;letter-spacing:-0.4px">D</div></div>
<div style="left:602px;top:306px;width:26px;height:15.5px;background:#a2a2a4;border:1px solid #d4d4d6;overflow:hidden"><div class="t" style="left:0px;top:1px;font-size:13px;color:#111;letter-spacing:-0.4px">E<span style="font-size:9.5px;letter-spacing:-0.1px">min</span></div></div>
<div style="left:633px;top:306px;width:26px;height:15.5px;background:#a2a2a4;border:1px solid #d4d4d6;overflow:hidden"><div class="t" style="left:0px;top:1px;font-size:13px;color:#111;letter-spacing:-0.4px">E<span style="font-size:9.5px;letter-spacing:-0.1px">min</span></div></div>
<div style="left:665px;top:306px;width:10px;height:15.5px;background:#a2a2a4;border:1px solid #d4d4d6;overflow:hidden"><div class="t" style="left:0px;top:1px;font-size:13px;color:#111;letter-spacing:-0.4px">C</div></div>
<div style="left:696px;top:306px;width:10px;height:15.5px;background:#a2a2a4;border:1px solid #d4d4d6;overflow:hidden"><div class="t" style="left:0px;top:1px;font-size:13px;color:#111;letter-spacing:-0.4px">D</div></div>
<div style="left:728px;top:306px;width:26px;height:15.5px;background:#a2a2a4;border:1px solid #d4d4d6;overflow:hidden"><div class="t" style="left:0px;top:1px;font-size:13px;color:#111;letter-spacing:-0.4px">E<span style="font-size:9.5px;letter-spacing:-0.1px">min</span></div></div>
<div style="left:759px;top:306px;width:10px;height:15.5px;background:#a2a2a4;border:1px solid #d4d4d6;overflow:hidden"><div class="t" style="left:0px;top:1px;font-size:13px;color:#111;letter-spacing:-0.4px">C</div></div>
<div style="left:775px;top:306px;width:27px;height:15.5px;background:#a2a2a4;border:1px solid #d4d4d6;overflow:hidden"><div class="t" style="left:0px;top:1px;font-size:13px;color:#111;letter-spacing:-0.4px">A<span style="font-size:9.5px;letter-spacing:-0.1px">min</span></div></div>
<div style="left:822px;top:306px;width:10px;height:15.5px;background:#a2a2a4;border:1px solid #d4d4d6;overflow:hidden"><div class="t" style="left:0px;top:1px;font-size:13px;color:#111;letter-spacing:-0.4px">C</div></div>
<div style="left:838px;top:306px;width:27px;height:15.5px;background:#a2a2a4;border:1px solid #d4d4d6;overflow:hidden"><div class="t" style="left:0px;top:1px;font-size:13px;color:#111;letter-spacing:-0.4px">A<span style="font-size:9.5px;letter-spacing:-0.1px">min</span></div></div>
<div style="left:885px;top:306px;width:11px;height:15.5px;background:#a2a2a4;border:1px solid #d4d4d6;overflow:hidden"><div class="t" style="left:0px;top:1px;font-size:13px;color:#111;letter-spacing:-0.4px">G</div></div>
<div style="left:901px;top:306px;width:10px;height:15.5px;background:#a2a2a4;border:1px solid #d4d4d6;overflow:hidden"><div class="t" style="left:0px;top:1px;font-size:13px;color:#111;letter-spacing:-0.4px">C</div></div>
<div style="left:916px;top:306px;width:11px;height:15.5px;background:#a2a2a4;border:1px solid #d4d4d6;overflow:hidden"><div class="t" style="left:0px;top:1px;font-size:13px;color:#111;letter-spacing:-0.4px">D</div></div>
<div style="left:932px;top:306px;width:23px;height:15.5px;background:#a2a2a4;border:1px solid #d4d4d6;overflow:hidden"><div class="t" style="left:0px;top:1px;font-size:13px;color:#111;letter-spacing:-0.4px">E<span style="font-size:9.5px;letter-spacing:-0.1px">min</span></div></div>
<div style="left:956px;top:306px;width:7px;height:15.5px;background:#a2a2a4;border:1px solid #d4d4d6;overflow:hidden"><div class="t" style="left:-1px;top:2px;font-size:11px;color:#111;letter-spacing:-0.4px">D</div></div>
<div style="left:963px;top:306px;width:27px;height:15.5px;background:#a2a2a4;border:1px solid #d4d4d6;overflow:hidden"><div class="t" style="left:0px;top:1px;font-size:13px;color:#111;letter-spacing:-0.4px">E<span style="font-size:9.5px;letter-spacing:-0.1px">min</span></div></div>
<div style="left:995px;top:306px;width:26px;height:15.5px;background:#a2a2a4;border:1px solid #d4d4d6;overflow:hidden"><div class="t" style="left:0px;top:1px;font-size:13px;color:#111;letter-spacing:-0.4px">E<span style="font-size:9.5px;letter-spacing:-0.1px">min</span></div></div>
<div style="left:1027px;top:306px;width:10px;height:15.5px;background:#a2a2a4;border:1px solid #d4d4d6;overflow:hidden"><div class="t" style="left:0px;top:1px;font-size:13px;color:#111;letter-spacing:-0.4px">C</div></div>
<div style="left:1058px;top:306px;width:10px;height:15.5px;background:#a2a2a4;border:1px solid #d4d4d6;overflow:hidden"><div class="t" style="left:0px;top:1px;font-size:13px;color:#111;letter-spacing:-0.4px">D</div></div>
<div style="left:1090px;top:306px;width:26px;height:15.5px;background:#a2a2a4;border:1px solid #d4d4d6;overflow:hidden"><div class="t" style="left:0px;top:1px;font-size:13px;color:#111;letter-spacing:-0.4px">E<span style="font-size:9.5px;letter-spacing:-0.1px">min</span></div></div>
<div style="left:1121px;top:306px;width:26px;height:15.5px;background:#a2a2a4;border:1px solid #d4d4d6;overflow:hidden"><div class="t" style="left:0px;top:1px;font-size:13px;color:#111;letter-spacing:-0.4px">E<span style="font-size:9.5px;letter-spacing:-0.1px">min</span></div></div>
<div style="left:1153px;top:306px;width:10px;height:15.5px;background:#a2a2a4;border:1px solid #d4d4d6;overflow:hidden"><div class="t" style="left:0px;top:1px;font-size:13px;color:#111;letter-spacing:-0.4px">C</div></div>
<div style="left:1184px;top:306px;width:10px;height:15.5px;background:#a2a2a4;border:1px solid #d4d4d6;overflow:hidden"><div class="t" style="left:0px;top:1px;font-size:13px;color:#111;letter-spacing:-0.4px">D</div></div>
<div style="left:1216px;top:306px;width:26px;height:15.5px;background:#a2a2a4;border:1px solid #d4d4d6;overflow:hidden"><div class="t" style="left:0px;top:1px;font-size:13px;color:#111;letter-spacing:-0.4px">E<span style="font-size:9.5px;letter-spacing:-0.1px">min</span></div></div>
<div style="left:1247px;top:306px;width:10px;height:15.5px;background:#a2a2a4;border:1px solid #d4d4d6;overflow:hidden"><div class="t" style="left:0px;top:1px;font-size:13px;color:#111;letter-spacing:-0.4px">C</div></div>
<div style="left:1263px;top:306px;width:27px;height:15.5px;background:#a2a2a4;border:1px solid #d4d4d6;overflow:hidden"><div class="t" style="left:0px;top:1px;font-size:13px;color:#111;letter-spacing:-0.4px">A<span style="font-size:9.5px;letter-spacing:-0.1px">min</span></div></div>
<div style="left:1310px;top:306px;width:10px;height:15.5px;background:#a2a2a4;border:1px solid #d4d4d6;overflow:hidden"><div class="t" style="left:0px;top:1px;font-size:13px;color:#111;letter-spacing:-0.4px">C</div></div>
<div style="left:1326px;top:306px;width:27px;height:15.5px;background:#a2a2a4;border:1px solid #d4d4d6;overflow:hidden"><div class="t" style="left:0px;top:1px;font-size:13px;color:#111;letter-spacing:-0.4px">A<span style="font-size:9.5px;letter-spacing:-0.1px">min</span></div></div>
<div style="left:1373px;top:306px;width:11px;height:15.5px;background:#a2a2a4;border:1px solid #d4d4d6;overflow:hidden"><div class="t" style="left:0px;top:1px;font-size:13px;color:#111;letter-spacing:-0.4px">G</div></div>
<div style="left:1388px;top:306px;width:11px;height:15.5px;background:#a2a2a4;border:1px solid #d4d4d6;overflow:hidden"><div class="t" style="left:0px;top:1px;font-size:13px;color:#111;letter-spacing:-0.4px">C</div></div>
<div style="left:1405px;top:306px;width:10px;height:15.5px;background:#a2a2a4;border:1px solid #d4d4d6;overflow:hidden"><div class="t" style="left:0px;top:1px;font-size:13px;color:#111;letter-spacing:-0.4px">D</div></div>
<div style="left:1421px;top:306px;width:26px;height:15.5px;background:#a2a2a4;border:1px solid #d4d4d6;overflow:hidden"><div class="t" style="left:0px;top:1px;font-size:13px;color:#111;letter-spacing:-0.4px">E<span style="font-size:9.5px;letter-spacing:-0.1px">min</span></div></div>
<div style="left:1452px;top:306px;width:26px;height:15.5px;background:#a2a2a4;border:1px solid #d4d4d6;overflow:hidden"><div class="t" style="left:0px;top:1px;font-size:13px;color:#111;letter-spacing:-0.4px">E<span style="font-size:9.5px;letter-spacing:-0.1px">min</span></div></div>
<div style="left:405px;top:325px;width:7px;height:15.5px;background:#a2a2a4;border:1px solid #d4d4d6;overflow:hidden"><div class="t" style="left:-1px;top:2px;font-size:11px;color:#111;letter-spacing:-0.4px">D</div></div>
<div style="left:413px;top:325px;width:26px;height:15.5px;background:#a2a2a4;border:1px solid #d4d4d6;overflow:hidden"><div class="t" style="left:0px;top:1px;font-size:13px;color:#111;letter-spacing:-0.4px">E<span style="font-size:9.5px;letter-spacing:-0.1px">min</span></div></div>
<div style="left:468px;top:325px;width:7px;height:15.5px;background:#a2a2a4;border:1px solid #d4d4d6;overflow:hidden"><div class="t" style="left:-1px;top:2px;font-size:11px;color:#111;letter-spacing:-0.4px">D</div></div>
<div style="left:476px;top:325px;width:26px;height:15.5px;background:#a2a2a4;border:1px solid #d4d4d6;overflow:hidden"><div class="t" style="left:0px;top:1px;font-size:13px;color:#111;letter-spacing:-0.4px">E<span style="font-size:9.5px;letter-spacing:-0.1px">min</span></div></div>
<div style="left:783px;top:325px;width:7px;height:15.5px;background:#a2a2a4;border:1px solid #d4d4d6;overflow:hidden"><div class="t" style="left:-1px;top:2px;font-size:11px;color:#111;letter-spacing:-0.4px">D</div></div>
<div style="left:791px;top:325px;width:26px;height:15.5px;background:#a2a2a4;border:1px solid #d4d4d6;overflow:hidden"><div class="t" style="left:0px;top:1px;font-size:13px;color:#111;letter-spacing:-0.4px">E<span style="font-size:9.5px;letter-spacing:-0.1px">min</span></div></div>
<div style="left:846px;top:325px;width:7px;height:15.5px;background:#a2a2a4;border:1px solid #d4d4d6;overflow:hidden"><div class="t" style="left:-1px;top:2px;font-size:11px;color:#111;letter-spacing:-0.4px">D</div></div>
<div style="left:854px;top:325px;width:26px;height:15.5px;background:#a2a2a4;border:1px solid #d4d4d6;overflow:hidden"><div class="t" style="left:0px;top:1px;font-size:13px;color:#111;letter-spacing:-0.4px">E<span style="font-size:9.5px;letter-spacing:-0.1px">min</span></div></div>
<div style="left:948px;top:325px;width:10px;height:15.5px;background:#a2a2a4;border:1px solid #d4d4d6;overflow:hidden"><div class="t" style="left:0px;top:1px;font-size:13px;color:#111;letter-spacing:-0.4px">C</div></div>
<div style="left:1271px;top:325px;width:7px;height:15.5px;background:#a2a2a4;border:1px solid #d4d4d6;overflow:hidden"><div class="t" style="left:-1px;top:2px;font-size:11px;color:#111;letter-spacing:-0.4px">D</div></div>
<div style="left:1279px;top:325px;width:26px;height:15.5px;background:#a2a2a4;border:1px solid #d4d4d6;overflow:hidden"><div class="t" style="left:0px;top:1px;font-size:13px;color:#111;letter-spacing:-0.4px">E<span style="font-size:9.5px;letter-spacing:-0.1px">min</span></div></div>
<div style="left:1334px;top:325px;width:7px;height:15.5px;background:#a2a2a4;border:1px solid #d4d4d6;overflow:hidden"><div class="t" style="left:-1px;top:2px;font-size:11px;color:#111;letter-spacing:-0.4px">D</div></div>
<div style="left:1342px;top:325px;width:26px;height:15.5px;background:#a2a2a4;border:1px solid #d4d4d6;overflow:hidden"><div class="t" style="left:0px;top:1px;font-size:13px;color:#111;letter-spacing:-0.4px">E<span style="font-size:9.5px;letter-spacing:-0.1px">min</span></div></div>
<div style="left:1436px;top:325px;width:8px;height:15.5px;background:#a2a2a4;border:1px solid #d4d4d6;overflow:hidden"><div class="t" style="left:-1px;top:2px;font-size:11px;color:#111;letter-spacing:-0.4px">C</div></div>
<div style="left:1444px;top:325px;width:10px;height:15.5px;background:#a2a2a4;border:1px solid #d4d4d6;overflow:hidden"><div class="t" style="left:0px;top:1px;font-size:13px;color:#111;letter-spacing:-0.4px">D</div></div>
<div style="left:382px;top:349px;width:31px;height:16px;background:#a2a2a4;border:1px solid #c9c9cb;overflow:hidden"><div class="t" style="left:1px;top:2px;font-size:11px;letter-spacing:-0.5px;color:#3a3a3a">G Dur</div></div>
<div style="left:1484px;top:35.5px;width:17px;height:811px;background:#222427"></div>
<div style="left:1485px;top:12px;width:12px;height:23px;background:#4e5154;border-radius:3px"></div>
<svg style="left:1487px;top:19px" width="8" height="8"><path d="M0 0h8L4 7z" fill="#f0f0f0"/></svg>
<svg style="left:1486px;top:41px" width="10" height="8"><path d="M1 7L9 1" stroke="#c0c0c0" stroke-width="1.4"/></svg>
<div style="left:1490px;top:57px;width:1px;height:46px;background:#c4c4c4"></div>
<div style="left:1487.5px;top:100px;width:6px;height:6px;background:#b0b0b0;border-radius:50%"></div>
<div style="left:1485px;top:112.5px;width:12px;height:639.5px;background:#45484c;border-radius:3px"></div>
<svg style="left:1487px;top:117px" width="8" height="6"><path d="M1 5L4 1.5 7 5" fill="none" stroke="#f0f0f0" stroke-width="1.6"/></svg>
<div style="left:1487px;top:130px;width:8px;height:481px;background:#f2f2f2;border-radius:3px"></div>
<svg style="left:1487px;top:741px" width="8" height="6"><path d="M1 1L4 4.5 7 1" fill="none" stroke="#f0f0f0" stroke-width="1.6"/></svg>
<svg style="left:1487px;top:757px" width="8" height="6"><path d="M0 0h8L4 5z" fill="#b8b8b8"/></svg>
<div style="left:1487.5px;top:771.5px;width:5px;height:1px;background:#b8b8b8"></div>
<div style="left:1490px;top:779px;width:1px;height:59px;background:#c4c4c4"></div>
<div style="left:1487.5px;top:785px;width:6px;height:6px;background:#b0b0b0;border-radius:50%"></div>
<div style="left:1487px;top:838.5px;width:7px;height:1px;background:#c4c4c4"></div>
<div style="left:1490px;top:835.5px;width:1px;height:7px;background:#c4c4c4"></div>
<div style="left:372px;top:847px;width:1112px;height:15px;background:#222427"></div>
<div style="left:372px;top:846px;width:1004.5px;height:12px;background:#45484c"></div>
<svg style="left:376px;top:848px" width="7" height="9"><path d="M5 1L2 4.5 5 8" fill="none" stroke="#f0f0f0" stroke-width="1.6"/></svg>
<div style="left:390px;top:848.3px;width:330px;height:7.5px;background:#f2f2f2;border-radius:4px"></div>
<svg style="left:1366px;top:848px" width="7" height="9"><path d="M2 1L5 4.5 2 8" fill="none" stroke="#f0f0f0" stroke-width="1.6"/></svg>
<svg style="left:1383px;top:850px" width="9" height="7"><path d="M0 0h9L4.5 6z" fill="#b8b8b8"/></svg>
<div style="left:1400px;top:853px;width:5px;height:1px;background:#b8b8b8"></div>
<div style="left:1411px;top:853px;width:46px;height:1px;background:#c4c4c4"></div>
<div style="left:1418.5px;top:850.5px;width:6px;height:6px;background:#b0b0b0;border-radius:50%"></div>
<div style="left:1466px;top:853px;width:7px;height:1px;background:#c4c4c4"></div>
<div style="left:1469px;top:850px;width:1px;height:7px;background:#c4c4c4"></div>
</body></html>
